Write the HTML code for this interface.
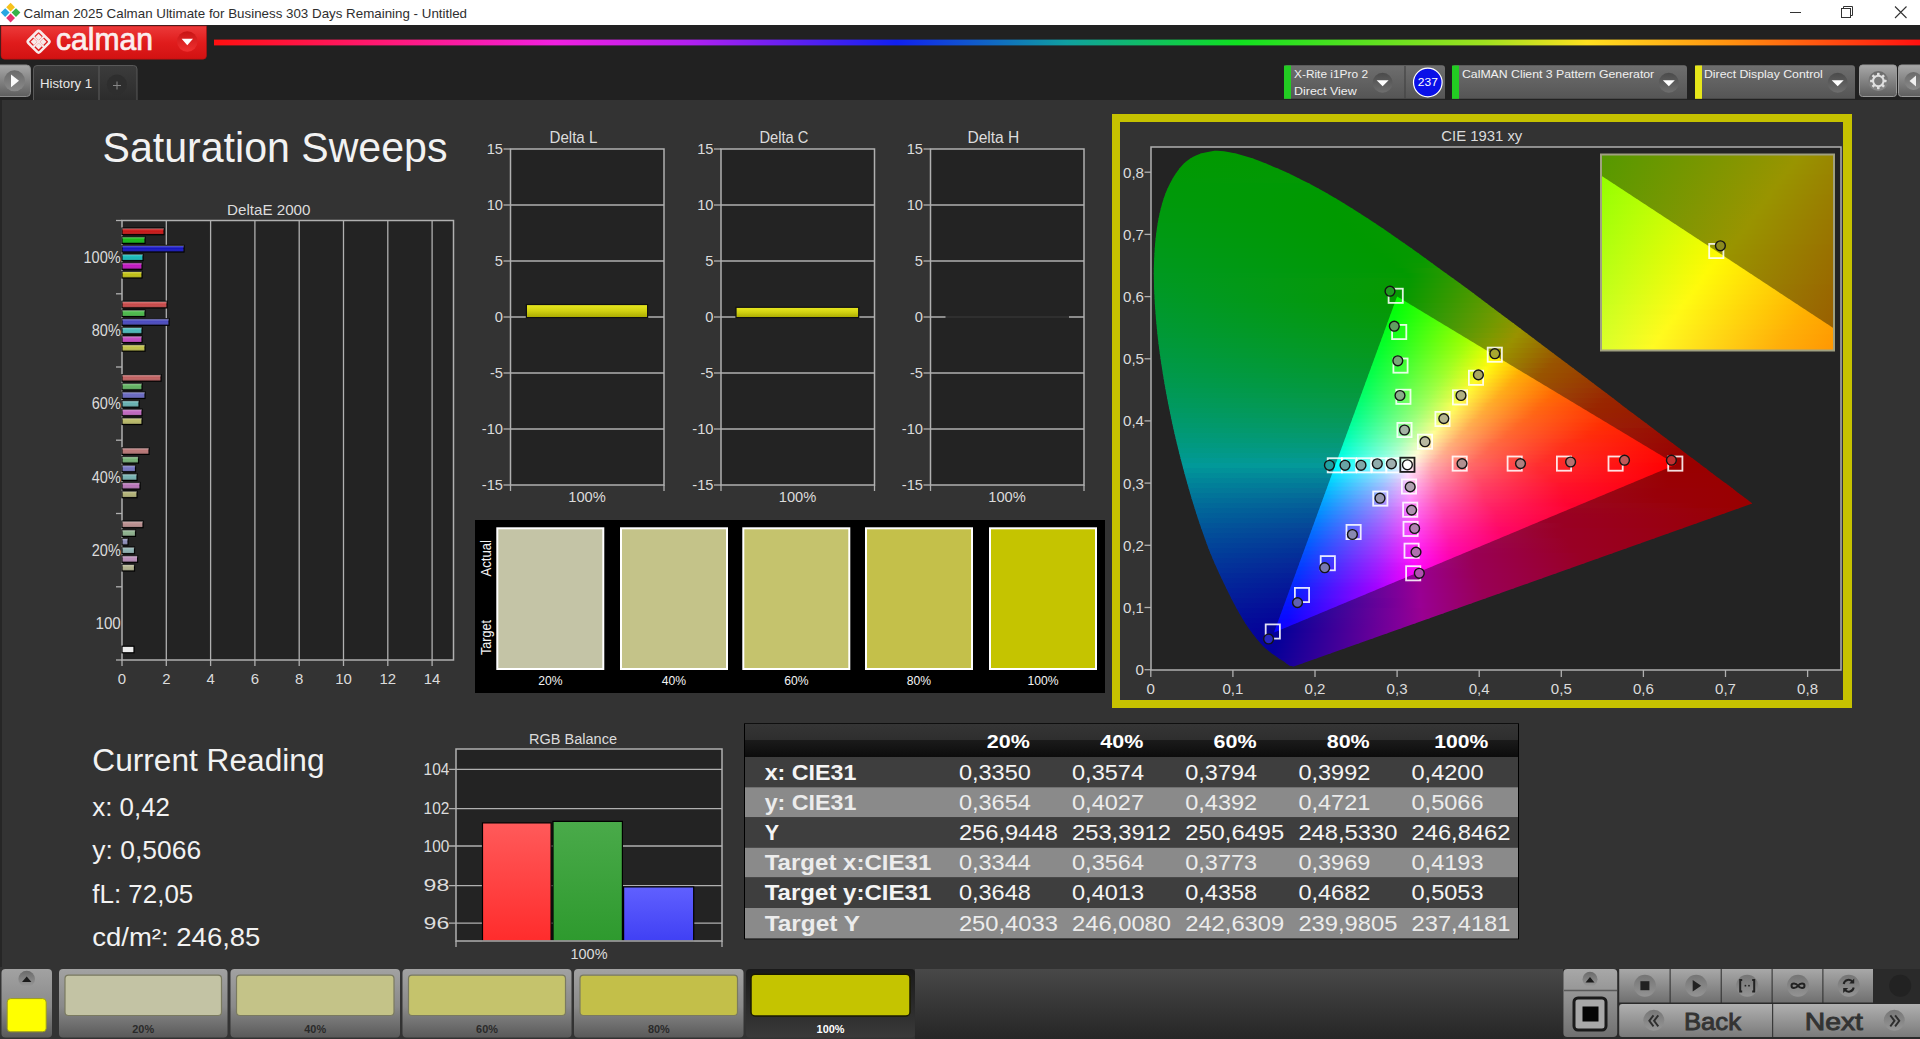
<!DOCTYPE html>
<html><head><meta charset="utf-8"><title>Calman</title>
<style>html,body{margin:0;padding:0;background:#333;overflow:hidden}svg{display:block}text{font-family:"Liberation Sans", sans-serif}</style>
</head><body>
<svg width="1920" height="1039" viewBox="0 0 1920 1039">
<defs><linearGradient id="gred" x1="0" y1="0" x2="0" y2="1"><stop offset="0" stop-color="#ec3a3a"/><stop offset="0.5" stop-color="#e01c1c"/><stop offset="1" stop-color="#d21212"/></linearGradient><linearGradient id="gdrop" x1="0" y1="0" x2="0" y2="1"><stop offset="0" stop-color="#c81414"/><stop offset="1" stop-color="#f03030"/></linearGradient><linearGradient id="grain" x1="0" y1="0" x2="1" y2="0"><stop offset="0" stop-color="#ff1010"/><stop offset="0.11" stop-color="#ff1a80"/><stop offset="0.2" stop-color="#f020e0"/><stop offset="0.28" stop-color="#b020f0"/><stop offset="0.4" stop-color="#1020f0"/><stop offset="0.5" stop-color="#10a0a0"/><stop offset="0.6" stop-color="#10e020"/><stop offset="0.745" stop-color="#a0e020"/><stop offset="0.805" stop-color="#ffe020"/><stop offset="0.89" stop-color="#ff9010"/><stop offset="1" stop-color="#ff1010"/></linearGradient><linearGradient id="gbtn" x1="0" y1="0" x2="0" y2="1"><stop offset="0" stop-color="#a8a8a8"/><stop offset="1" stop-color="#5e5e5e"/></linearGradient><linearGradient id="gbtnc" x1="0" y1="0" x2="0" y2="1"><stop offset="0" stop-color="#6a6a6a"/><stop offset="1" stop-color="#8a8a8a"/></linearGradient><linearGradient id="gtab" x1="0" y1="0" x2="0" y2="1"><stop offset="0" stop-color="#3c3c3c"/><stop offset="1" stop-color="#2c2c2c"/></linearGradient><linearGradient id="gwid" x1="0" y1="0" x2="0" y2="1"><stop offset="0" stop-color="#6e6e6e"/><stop offset="1" stop-color="#555555"/></linearGradient><linearGradient id="gdd" x1="0" y1="0" x2="0" y2="1"><stop offset="0" stop-color="#4a4a4a"/><stop offset="1" stop-color="#6e6e6e"/></linearGradient><linearGradient id="gbarhl" x1="0" y1="0" x2="0" y2="1"><stop offset="0" stop-color="#ffffff"/><stop offset="0.35" stop-color="#ffffff"/><stop offset="0.55" stop-color="#000000"/><stop offset="1" stop-color="#000000"/></linearGradient><linearGradient id="gbh" x1="0" y1="0" x2="0" y2="1"><stop offset="0" stop-color="#fff" stop-opacity="0.35"/><stop offset="0.45" stop-color="#fff" stop-opacity="0"/><stop offset="1" stop-color="#000" stop-opacity="0.25"/></linearGradient><linearGradient id="gybar" x1="0" y1="0" x2="0" y2="1"><stop offset="0" stop-color="#e8e820"/><stop offset="0.5" stop-color="#d0d010"/><stop offset="1" stop-color="#a8a800"/></linearGradient><clipPath id="locus"><path d="M1293.7 666.6 C1293.2 666.5 1291.6 666.5 1290.6 666.1 C1289.6 665.7 1288.6 664.9 1287.8 664.4 C1287.0 663.8 1286.6 663.5 1285.8 662.9 C1285.0 662.4 1284.1 661.8 1283.1 661.1 C1282.0 660.4 1280.8 659.6 1279.4 658.7 C1278.0 657.8 1276.5 656.8 1274.8 655.6 C1273.0 654.3 1271.1 653.0 1269.0 651.2 C1266.9 649.4 1264.8 647.8 1262.0 644.9 C1259.3 642.0 1256.2 638.6 1252.7 633.8 C1249.1 628.9 1245.3 623.5 1240.8 615.7 C1236.3 608.0 1231.4 599.0 1225.8 587.2 C1220.2 575.4 1213.5 561.7 1207.2 544.9 C1200.9 528.1 1194.3 508.2 1188.1 486.2 C1181.9 464.3 1175.2 438.3 1170.1 413.0 C1165.0 387.8 1160.2 360.0 1157.5 334.9 C1154.9 309.8 1153.2 284.4 1154.0 262.5 C1154.8 240.5 1157.4 219.4 1162.2 203.2 C1167.0 186.9 1174.5 173.4 1182.7 164.7 C1191.0 156.1 1201.5 152.6 1211.8 151.2 C1222.1 149.7 1233.6 153.0 1244.6 155.9 C1255.6 158.8 1267.0 163.9 1277.8 168.5 C1288.6 173.1 1298.9 178.3 1309.2 183.6 C1319.4 189.0 1329.3 194.7 1339.3 200.6 C1349.3 206.5 1359.2 212.8 1369.0 219.3 C1378.9 225.7 1388.6 232.4 1398.4 239.2 C1408.2 245.9 1417.9 252.9 1427.7 259.9 C1437.5 267.0 1447.3 274.1 1457.1 281.3 C1466.9 288.5 1476.6 295.8 1486.3 303.0 C1496.1 310.3 1505.8 317.5 1515.4 324.7 C1525.0 331.9 1534.5 339.1 1543.9 346.2 C1553.3 353.2 1562.5 360.3 1571.6 367.1 C1580.6 373.9 1589.5 380.6 1598.1 387.1 C1606.7 393.6 1615.1 399.9 1623.0 405.9 C1631.0 411.9 1638.7 417.8 1645.8 423.1 C1652.9 428.5 1659.4 433.4 1665.6 438.0 C1671.8 442.7 1677.7 447.2 1683.0 451.2 C1688.3 455.2 1693.1 458.7 1697.4 462.0 C1701.8 465.3 1705.6 468.2 1709.2 470.9 C1712.7 473.5 1715.7 475.9 1718.5 478.0 C1721.3 480.1 1723.7 481.9 1726.0 483.6 C1728.2 485.3 1730.2 486.7 1732.0 488.1 C1733.8 489.5 1735.5 490.7 1737.0 491.9 C1738.5 493.0 1739.9 494.1 1741.1 495.0 C1742.3 495.9 1743.4 496.7 1744.4 497.4 C1745.3 498.1 1745.9 498.6 1746.8 499.3 C1747.8 500.0 1749.2 501.1 1750.1 501.8 C1751.0 502.5 1752.0 503.2 1752.3 503.5 Z"/></clipPath><clipPath id="tri"><path d="M1676.2 464.5 L1397.1 296.6 L1274.0 632.4 Z"/></clipPath><linearGradient id="c1" gradientUnits="userSpaceOnUse" x1="1152" y1="0" x2="1752" y2="0"><stop offset="0.000" stop-color="#009900"/><stop offset="0.513" stop-color="#059900"/><stop offset="0.797" stop-color="#7f9900"/><stop offset="0.857" stop-color="#999200"/><stop offset="1.000" stop-color="#995d00"/></linearGradient><linearGradient id="c2" gradientUnits="userSpaceOnUse" x1="1152" y1="0" x2="1752" y2="0"><stop offset="0.000" stop-color="#009901"/><stop offset="0.510" stop-color="#059900"/><stop offset="0.790" stop-color="#7f9900"/><stop offset="0.850" stop-color="#999200"/><stop offset="1.000" stop-color="#995b00"/></linearGradient><linearGradient id="c3" gradientUnits="userSpaceOnUse" x1="1152" y1="0" x2="1752" y2="0"><stop offset="0.000" stop-color="#009902"/><stop offset="0.507" stop-color="#059900"/><stop offset="0.787" stop-color="#809900"/><stop offset="0.843" stop-color="#999200"/><stop offset="1.000" stop-color="#995800"/></linearGradient><linearGradient id="c4" gradientUnits="userSpaceOnUse" x1="1152" y1="0" x2="1752" y2="0"><stop offset="0.000" stop-color="#009903"/><stop offset="0.503" stop-color="#059900"/><stop offset="0.780" stop-color="#809900"/><stop offset="0.837" stop-color="#999200"/><stop offset="1.000" stop-color="#995600"/></linearGradient><linearGradient id="c5" gradientUnits="userSpaceOnUse" x1="1152" y1="0" x2="1752" y2="0"><stop offset="0.000" stop-color="#009904"/><stop offset="0.500" stop-color="#059900"/><stop offset="0.773" stop-color="#809900"/><stop offset="0.830" stop-color="#999200"/><stop offset="0.993" stop-color="#995600"/><stop offset="1.000" stop-color="#995400"/></linearGradient><linearGradient id="c6" gradientUnits="userSpaceOnUse" x1="1152" y1="0" x2="1752" y2="0"><stop offset="0.000" stop-color="#009905"/><stop offset="0.497" stop-color="#059900"/><stop offset="0.767" stop-color="#809900"/><stop offset="0.823" stop-color="#999200"/><stop offset="0.987" stop-color="#995500"/><stop offset="1.000" stop-color="#995200"/></linearGradient><linearGradient id="c7" gradientUnits="userSpaceOnUse" x1="1152" y1="0" x2="1752" y2="0"><stop offset="0.000" stop-color="#009907"/><stop offset="0.493" stop-color="#059900"/><stop offset="0.760" stop-color="#7f9900"/><stop offset="0.817" stop-color="#999200"/><stop offset="0.977" stop-color="#995600"/><stop offset="1.000" stop-color="#995000"/></linearGradient><linearGradient id="c8" gradientUnits="userSpaceOnUse" x1="1152" y1="0" x2="1752" y2="0"><stop offset="0.000" stop-color="#009908"/><stop offset="0.470" stop-color="#009900"/><stop offset="0.713" stop-color="#699900"/><stop offset="0.807" stop-color="#999400"/><stop offset="0.963" stop-color="#995700"/><stop offset="1.000" stop-color="#994e00"/></linearGradient><linearGradient id="c9" gradientUnits="userSpaceOnUse" x1="1152" y1="0" x2="1752" y2="0"><stop offset="0.000" stop-color="#009909"/><stop offset="0.363" stop-color="#009900"/><stop offset="0.490" stop-color="#069900"/><stop offset="0.750" stop-color="#819900"/><stop offset="0.803" stop-color="#999200"/><stop offset="0.960" stop-color="#995600"/><stop offset="1.000" stop-color="#994c00"/></linearGradient><linearGradient id="c10" gradientUnits="userSpaceOnUse" x1="1152" y1="0" x2="1752" y2="0"><stop offset="0.000" stop-color="#00990a"/><stop offset="0.323" stop-color="#009900"/><stop offset="0.487" stop-color="#069900"/><stop offset="0.743" stop-color="#809900"/><stop offset="0.797" stop-color="#999200"/><stop offset="0.953" stop-color="#995500"/><stop offset="1.000" stop-color="#994a00"/></linearGradient><linearGradient id="c11" gradientUnits="userSpaceOnUse" x1="1152" y1="0" x2="1752" y2="0"><stop offset="0.000" stop-color="#00990b"/><stop offset="0.307" stop-color="#009900"/><stop offset="0.483" stop-color="#069900"/><stop offset="0.737" stop-color="#809900"/><stop offset="0.790" stop-color="#999200"/><stop offset="0.943" stop-color="#995600"/><stop offset="1.000" stop-color="#994800"/></linearGradient><linearGradient id="c12" gradientUnits="userSpaceOnUse" x1="1152" y1="0" x2="1752" y2="0"><stop offset="0.000" stop-color="#00990c"/><stop offset="0.300" stop-color="#009900"/><stop offset="0.480" stop-color="#069900"/><stop offset="0.730" stop-color="#809900"/><stop offset="0.783" stop-color="#999200"/><stop offset="0.937" stop-color="#995500"/><stop offset="1.000" stop-color="#994600"/></linearGradient><linearGradient id="c13" gradientUnits="userSpaceOnUse" x1="1152" y1="0" x2="1752" y2="0"><stop offset="0.000" stop-color="#00990e"/><stop offset="0.303" stop-color="#009900"/><stop offset="0.477" stop-color="#069900"/><stop offset="0.727" stop-color="#819900"/><stop offset="0.777" stop-color="#999200"/><stop offset="0.927" stop-color="#995500"/><stop offset="1.000" stop-color="#994400"/></linearGradient><linearGradient id="c14" gradientUnits="userSpaceOnUse" x1="1152" y1="0" x2="1752" y2="0"><stop offset="0.000" stop-color="#00990f"/><stop offset="0.307" stop-color="#009900"/><stop offset="0.473" stop-color="#069900"/><stop offset="0.720" stop-color="#819900"/><stop offset="0.770" stop-color="#999200"/><stop offset="0.920" stop-color="#995500"/><stop offset="1.000" stop-color="#994200"/></linearGradient><linearGradient id="c15" gradientUnits="userSpaceOnUse" x1="1152" y1="0" x2="1752" y2="0"><stop offset="0.000" stop-color="#009910"/><stop offset="0.313" stop-color="#009900"/><stop offset="0.470" stop-color="#069900"/><stop offset="0.713" stop-color="#819900"/><stop offset="0.763" stop-color="#999100"/><stop offset="0.910" stop-color="#995500"/><stop offset="1.000" stop-color="#994000"/></linearGradient><linearGradient id="c16" gradientUnits="userSpaceOnUse" x1="1152" y1="0" x2="1752" y2="0"><stop offset="0.000" stop-color="#009912"/><stop offset="0.323" stop-color="#009900"/><stop offset="0.467" stop-color="#069900"/><stop offset="0.707" stop-color="#819900"/><stop offset="0.757" stop-color="#999100"/><stop offset="0.903" stop-color="#995500"/><stop offset="1.000" stop-color="#993e00"/></linearGradient><linearGradient id="c17" gradientUnits="userSpaceOnUse" x1="1152" y1="0" x2="1752" y2="0"><stop offset="0.000" stop-color="#009913"/><stop offset="0.330" stop-color="#009900"/><stop offset="0.463" stop-color="#069900"/><stop offset="0.700" stop-color="#809900"/><stop offset="0.750" stop-color="#999100"/><stop offset="0.893" stop-color="#995500"/><stop offset="1.000" stop-color="#993d00"/></linearGradient><linearGradient id="c18" gradientUnits="userSpaceOnUse" x1="1152" y1="0" x2="1752" y2="0"><stop offset="0.000" stop-color="#009914"/><stop offset="0.340" stop-color="#009900"/><stop offset="0.460" stop-color="#069900"/><stop offset="0.693" stop-color="#809900"/><stop offset="0.743" stop-color="#999100"/><stop offset="0.887" stop-color="#995500"/><stop offset="1.000" stop-color="#993b00"/></linearGradient><linearGradient id="c19" gradientUnits="userSpaceOnUse" x1="1152" y1="0" x2="1752" y2="0"><stop offset="0.000" stop-color="#009916"/><stop offset="0.350" stop-color="#009900"/><stop offset="0.457" stop-color="#069900"/><stop offset="0.687" stop-color="#809900"/><stop offset="0.737" stop-color="#999100"/><stop offset="0.877" stop-color="#995500"/><stop offset="1.000" stop-color="#993900"/></linearGradient><linearGradient id="c20" gradientUnits="userSpaceOnUse" x1="1152" y1="0" x2="1752" y2="0"><stop offset="0.000" stop-color="#009917"/><stop offset="0.360" stop-color="#009900"/><stop offset="0.453" stop-color="#069900"/><stop offset="0.680" stop-color="#7f9900"/><stop offset="0.730" stop-color="#999100"/><stop offset="0.870" stop-color="#995400"/><stop offset="1.000" stop-color="#993700"/></linearGradient><linearGradient id="c21" gradientUnits="userSpaceOnUse" x1="1152" y1="0" x2="1752" y2="0"><stop offset="0.000" stop-color="#009919"/><stop offset="0.370" stop-color="#009900"/><stop offset="0.453" stop-color="#079900"/><stop offset="0.677" stop-color="#819900"/><stop offset="0.723" stop-color="#999100"/><stop offset="0.860" stop-color="#995500"/><stop offset="1.000" stop-color="#993500"/></linearGradient><linearGradient id="c22" gradientUnits="userSpaceOnUse" x1="1152" y1="0" x2="1752" y2="0"><stop offset="0.000" stop-color="#00991a"/><stop offset="0.383" stop-color="#009900"/><stop offset="0.450" stop-color="#079900"/><stop offset="0.670" stop-color="#819900"/><stop offset="0.717" stop-color="#999100"/><stop offset="0.853" stop-color="#995400"/><stop offset="1.000" stop-color="#993400"/></linearGradient><linearGradient id="c23" gradientUnits="userSpaceOnUse" x1="1152" y1="0" x2="1752" y2="0"><stop offset="0.000" stop-color="#00991c"/><stop offset="0.393" stop-color="#009900"/><stop offset="0.450" stop-color="#099900"/><stop offset="0.667" stop-color="#839900"/><stop offset="0.710" stop-color="#999100"/><stop offset="0.843" stop-color="#995500"/><stop offset="1.000" stop-color="#993200"/></linearGradient><linearGradient id="c24" gradientUnits="userSpaceOnUse" x1="1152" y1="0" x2="1752" y2="0"><stop offset="0.000" stop-color="#00991d"/><stop offset="0.403" stop-color="#009900"/><stop offset="0.457" stop-color="#0e9900"/><stop offset="0.670" stop-color="#899900"/><stop offset="0.707" stop-color="#998e00"/><stop offset="0.843" stop-color="#995200"/><stop offset="1.000" stop-color="#993000"/></linearGradient><linearGradient id="c25" gradientUnits="userSpaceOnUse" x1="1152" y1="0" x2="1752" y2="0"><stop offset="0.000" stop-color="#00991f"/><stop offset="0.417" stop-color="#009900"/><stop offset="0.600" stop-color="#5f9900"/><stop offset="0.693" stop-color="#999300"/><stop offset="0.820" stop-color="#995700"/><stop offset="1.000" stop-color="#992f00"/></linearGradient><linearGradient id="c26" gradientUnits="userSpaceOnUse" x1="1152" y1="0" x2="1752" y2="0"><stop offset="0.000" stop-color="#009921"/><stop offset="0.427" stop-color="#029900"/><stop offset="0.640" stop-color="#7d9900"/><stop offset="0.687" stop-color="#999300"/><stop offset="0.813" stop-color="#995600"/><stop offset="1.000" stop-color="#992d00"/></linearGradient><linearGradient id="c27" gradientUnits="userSpaceOnUse" x1="1152" y1="0" x2="1752" y2="0"><stop offset="0.000" stop-color="#009922"/><stop offset="0.430" stop-color="#069900"/><stop offset="0.637" stop-color="#7f9900"/><stop offset="0.680" stop-color="#999300"/><stop offset="0.803" stop-color="#995600"/><stop offset="1.000" stop-color="#992b00"/></linearGradient><linearGradient id="c28" gradientUnits="userSpaceOnUse" x1="1152" y1="0" x2="1752" y2="0"><stop offset="0.000" stop-color="#009924"/><stop offset="0.427" stop-color="#069900"/><stop offset="0.630" stop-color="#7f9900"/><stop offset="0.673" stop-color="#999300"/><stop offset="0.797" stop-color="#995600"/><stop offset="1.000" stop-color="#992a00"/></linearGradient><linearGradient id="c29" gradientUnits="userSpaceOnUse" x1="1152" y1="0" x2="1752" y2="0"><stop offset="0.000" stop-color="#009926"/><stop offset="0.423" stop-color="#069900"/><stop offset="0.623" stop-color="#7e9900"/><stop offset="0.667" stop-color="#999300"/><stop offset="0.787" stop-color="#995600"/><stop offset="1.000" stop-color="#992800"/></linearGradient><linearGradient id="c30" gradientUnits="userSpaceOnUse" x1="1152" y1="0" x2="1752" y2="0"><stop offset="0.000" stop-color="#009928"/><stop offset="0.420" stop-color="#059900"/><stop offset="0.620" stop-color="#819900"/><stop offset="0.660" stop-color="#999300"/><stop offset="0.780" stop-color="#995600"/><stop offset="1.000" stop-color="#992600"/></linearGradient><linearGradient id="c31" gradientUnits="userSpaceOnUse" x1="1152" y1="0" x2="1752" y2="0"><stop offset="0.000" stop-color="#00992a"/><stop offset="0.417" stop-color="#059900"/><stop offset="0.613" stop-color="#809900"/><stop offset="0.653" stop-color="#999200"/><stop offset="0.770" stop-color="#995600"/><stop offset="0.997" stop-color="#992500"/><stop offset="1.000" stop-color="#992500"/></linearGradient><linearGradient id="c32" gradientUnits="userSpaceOnUse" x1="1152" y1="0" x2="1752" y2="0"><stop offset="0.000" stop-color="#00992c"/><stop offset="0.413" stop-color="#059903"/><stop offset="0.607" stop-color="#809900"/><stop offset="0.647" stop-color="#999200"/><stop offset="0.763" stop-color="#995600"/><stop offset="0.990" stop-color="#992500"/><stop offset="1.000" stop-color="#992300"/></linearGradient><linearGradient id="c33" gradientUnits="userSpaceOnUse" x1="1152" y1="0" x2="1752" y2="0"><stop offset="0.000" stop-color="#00992e"/><stop offset="0.410" stop-color="#059905"/><stop offset="0.600" stop-color="#7f9900"/><stop offset="0.640" stop-color="#999200"/><stop offset="0.753" stop-color="#995600"/><stop offset="0.973" stop-color="#992500"/><stop offset="1.000" stop-color="#992200"/></linearGradient><linearGradient id="c34" gradientUnits="userSpaceOnUse" x1="1152" y1="0" x2="1752" y2="0"><stop offset="0.000" stop-color="#009930"/><stop offset="0.407" stop-color="#059908"/><stop offset="0.593" stop-color="#7f9900"/><stop offset="0.633" stop-color="#999200"/><stop offset="0.747" stop-color="#995500"/><stop offset="0.967" stop-color="#992400"/><stop offset="1.000" stop-color="#992000"/></linearGradient><linearGradient id="c35" gradientUnits="userSpaceOnUse" x1="1152" y1="0" x2="1752" y2="0"><stop offset="0.000" stop-color="#009932"/><stop offset="0.403" stop-color="#05990a"/><stop offset="0.577" stop-color="#779900"/><stop offset="0.627" stop-color="#999200"/><stop offset="0.737" stop-color="#995600"/><stop offset="0.950" stop-color="#992500"/><stop offset="1.000" stop-color="#991f00"/></linearGradient><linearGradient id="c36" gradientUnits="userSpaceOnUse" x1="1152" y1="0" x2="1752" y2="0"><stop offset="0.000" stop-color="#009934"/><stop offset="0.400" stop-color="#05990d"/><stop offset="0.563" stop-color="#719900"/><stop offset="0.620" stop-color="#999200"/><stop offset="0.730" stop-color="#995500"/><stop offset="0.943" stop-color="#992400"/><stop offset="1.000" stop-color="#991d00"/></linearGradient><linearGradient id="c37" gradientUnits="userSpaceOnUse" x1="1152" y1="0" x2="1752" y2="0"><stop offset="0.000" stop-color="#009936"/><stop offset="0.397" stop-color="#059910"/><stop offset="0.567" stop-color="#789900"/><stop offset="0.613" stop-color="#999200"/><stop offset="0.720" stop-color="#995600"/><stop offset="0.930" stop-color="#992500"/><stop offset="1.000" stop-color="#991c00"/></linearGradient><linearGradient id="c38" gradientUnits="userSpaceOnUse" x1="1152" y1="0" x2="1752" y2="0"><stop offset="0.000" stop-color="#009938"/><stop offset="0.393" stop-color="#059913"/><stop offset="0.567" stop-color="#7d9900"/><stop offset="0.607" stop-color="#999200"/><stop offset="0.713" stop-color="#995500"/><stop offset="0.920" stop-color="#992400"/><stop offset="1.000" stop-color="#991a00"/></linearGradient><linearGradient id="c39" gradientUnits="userSpaceOnUse" x1="1152" y1="0" x2="1752" y2="0"><stop offset="0.000" stop-color="#00993b"/><stop offset="0.390" stop-color="#059916"/><stop offset="0.563" stop-color="#809900"/><stop offset="0.600" stop-color="#999200"/><stop offset="0.703" stop-color="#995600"/><stop offset="0.907" stop-color="#992400"/><stop offset="1.000" stop-color="#991900"/></linearGradient><linearGradient id="c40" gradientUnits="userSpaceOnUse" x1="1152" y1="0" x2="1752" y2="0"><stop offset="0.000" stop-color="#00993d"/><stop offset="0.387" stop-color="#059919"/><stop offset="0.557" stop-color="#7f9900"/><stop offset="0.593" stop-color="#999200"/><stop offset="0.697" stop-color="#995500"/><stop offset="0.897" stop-color="#992400"/><stop offset="1.000" stop-color="#991700"/></linearGradient><linearGradient id="c41" gradientUnits="userSpaceOnUse" x1="1152" y1="0" x2="1752" y2="0"><stop offset="0.000" stop-color="#009940"/><stop offset="0.383" stop-color="#05991c"/><stop offset="0.550" stop-color="#7f9902"/><stop offset="0.587" stop-color="#999100"/><stop offset="0.687" stop-color="#995500"/><stop offset="0.883" stop-color="#992400"/><stop offset="1.000" stop-color="#991600"/></linearGradient><linearGradient id="c42" gradientUnits="userSpaceOnUse" x1="1152" y1="0" x2="1752" y2="0"><stop offset="0.000" stop-color="#009942"/><stop offset="0.380" stop-color="#05991f"/><stop offset="0.543" stop-color="#7e9906"/><stop offset="0.580" stop-color="#999100"/><stop offset="0.680" stop-color="#995500"/><stop offset="0.873" stop-color="#992400"/><stop offset="1.000" stop-color="#991400"/></linearGradient><linearGradient id="c43" gradientUnits="userSpaceOnUse" x1="1152" y1="0" x2="1752" y2="0"><stop offset="0.000" stop-color="#009945"/><stop offset="0.377" stop-color="#049923"/><stop offset="0.537" stop-color="#7e990a"/><stop offset="0.573" stop-color="#999102"/><stop offset="0.670" stop-color="#995500"/><stop offset="0.860" stop-color="#992400"/><stop offset="1.000" stop-color="#991300"/></linearGradient><linearGradient id="c44" gradientUnits="userSpaceOnUse" x1="1152" y1="0" x2="1752" y2="0"><stop offset="0.000" stop-color="#009948"/><stop offset="0.373" stop-color="#049926"/><stop offset="0.530" stop-color="#7d990e"/><stop offset="0.567" stop-color="#999107"/><stop offset="0.663" stop-color="#995400"/><stop offset="0.850" stop-color="#992400"/><stop offset="1.000" stop-color="#991200"/></linearGradient><linearGradient id="c45" gradientUnits="userSpaceOnUse" x1="1152" y1="0" x2="1752" y2="0"><stop offset="0.000" stop-color="#00994a"/><stop offset="0.370" stop-color="#04992a"/><stop offset="0.523" stop-color="#7d9913"/><stop offset="0.560" stop-color="#99910b"/><stop offset="0.653" stop-color="#995500"/><stop offset="0.837" stop-color="#992400"/><stop offset="1.000" stop-color="#991000"/></linearGradient><linearGradient id="c46" gradientUnits="userSpaceOnUse" x1="1152" y1="0" x2="1752" y2="0"><stop offset="0.000" stop-color="#00994d"/><stop offset="0.367" stop-color="#04992e"/><stop offset="0.517" stop-color="#7c9918"/><stop offset="0.553" stop-color="#999110"/><stop offset="0.647" stop-color="#995400"/><stop offset="0.827" stop-color="#992400"/><stop offset="1.000" stop-color="#990f00"/></linearGradient><linearGradient id="c47" gradientUnits="userSpaceOnUse" x1="1152" y1="0" x2="1752" y2="0"><stop offset="0.000" stop-color="#009950"/><stop offset="0.363" stop-color="#049932"/><stop offset="0.513" stop-color="#7f991c"/><stop offset="0.547" stop-color="#999114"/><stop offset="0.637" stop-color="#995501"/><stop offset="0.813" stop-color="#992400"/><stop offset="1.000" stop-color="#990d00"/></linearGradient><linearGradient id="c48" gradientUnits="userSpaceOnUse" x1="1152" y1="0" x2="1752" y2="0"><stop offset="0.000" stop-color="#009953"/><stop offset="0.360" stop-color="#049936"/><stop offset="0.507" stop-color="#7e9921"/><stop offset="0.540" stop-color="#999019"/><stop offset="0.630" stop-color="#995404"/><stop offset="0.803" stop-color="#992400"/><stop offset="1.000" stop-color="#990c00"/></linearGradient><linearGradient id="c49" gradientUnits="userSpaceOnUse" x1="1152" y1="0" x2="1752" y2="0"><stop offset="0.000" stop-color="#009957"/><stop offset="0.357" stop-color="#04993a"/><stop offset="0.500" stop-color="#7e9926"/><stop offset="0.530" stop-color="#999420"/><stop offset="0.613" stop-color="#995809"/><stop offset="0.777" stop-color="#992600"/><stop offset="1.000" stop-color="#990b00"/></linearGradient><linearGradient id="c50" gradientUnits="userSpaceOnUse" x1="1152" y1="0" x2="1752" y2="0"><stop offset="0.000" stop-color="#00995a"/><stop offset="0.357" stop-color="#06993e"/><stop offset="0.497" stop-color="#81992b"/><stop offset="0.527" stop-color="#999024"/><stop offset="0.613" stop-color="#99540b"/><stop offset="0.770" stop-color="#992500"/><stop offset="1.000" stop-color="#990900"/></linearGradient><linearGradient id="c51" gradientUnits="userSpaceOnUse" x1="1152" y1="0" x2="1752" y2="0"><stop offset="0.000" stop-color="#00995e"/><stop offset="0.353" stop-color="#069943"/><stop offset="0.490" stop-color="#809931"/><stop offset="0.517" stop-color="#99942b"/><stop offset="0.597" stop-color="#995810"/><stop offset="0.753" stop-color="#992600"/><stop offset="1.000" stop-color="#990800"/></linearGradient><linearGradient id="c52" gradientUnits="userSpaceOnUse" x1="1152" y1="0" x2="1752" y2="0"><stop offset="0.000" stop-color="#009961"/><stop offset="0.350" stop-color="#069948"/><stop offset="0.483" stop-color="#809937"/><stop offset="0.510" stop-color="#999331"/><stop offset="0.590" stop-color="#995714"/><stop offset="0.743" stop-color="#992600"/><stop offset="1.000" stop-color="#990700"/></linearGradient><linearGradient id="c53" gradientUnits="userSpaceOnUse" x1="1152" y1="0" x2="1752" y2="0"><stop offset="0.000" stop-color="#009965"/><stop offset="0.347" stop-color="#06994d"/><stop offset="0.477" stop-color="#7f993d"/><stop offset="0.503" stop-color="#999337"/><stop offset="0.580" stop-color="#995719"/><stop offset="0.730" stop-color="#992600"/><stop offset="1.000" stop-color="#990600"/></linearGradient><linearGradient id="c54" gradientUnits="userSpaceOnUse" x1="1152" y1="0" x2="1752" y2="0"><stop offset="0.000" stop-color="#009969"/><stop offset="0.343" stop-color="#069952"/><stop offset="0.470" stop-color="#7f9944"/><stop offset="0.497" stop-color="#99933d"/><stop offset="0.573" stop-color="#99561c"/><stop offset="0.720" stop-color="#992602"/><stop offset="1.000" stop-color="#990400"/></linearGradient><linearGradient id="c55" gradientUnits="userSpaceOnUse" x1="1152" y1="0" x2="1752" y2="0"><stop offset="0.000" stop-color="#00996d"/><stop offset="0.340" stop-color="#069958"/><stop offset="0.463" stop-color="#7e994b"/><stop offset="0.490" stop-color="#999344"/><stop offset="0.563" stop-color="#995722"/><stop offset="0.707" stop-color="#992605"/><stop offset="1.000" stop-color="#990300"/></linearGradient><linearGradient id="c56" gradientUnits="userSpaceOnUse" x1="1152" y1="0" x2="1752" y2="0"><stop offset="0.000" stop-color="#009971"/><stop offset="0.337" stop-color="#06995e"/><stop offset="0.457" stop-color="#7d9952"/><stop offset="0.483" stop-color="#99934b"/><stop offset="0.557" stop-color="#995626"/><stop offset="0.697" stop-color="#992608"/><stop offset="1.000" stop-color="#990200"/></linearGradient><linearGradient id="c57" gradientUnits="userSpaceOnUse" x1="1152" y1="0" x2="1752" y2="0"><stop offset="0.000" stop-color="#009975"/><stop offset="0.333" stop-color="#069964"/><stop offset="0.450" stop-color="#7d9959"/><stop offset="0.477" stop-color="#999353"/><stop offset="0.547" stop-color="#99572b"/><stop offset="0.683" stop-color="#99260b"/><stop offset="0.893" stop-color="#990800"/><stop offset="1.000" stop-color="#990100"/></linearGradient><linearGradient id="c58" gradientUnits="userSpaceOnUse" x1="1152" y1="0" x2="1752" y2="0"><stop offset="0.000" stop-color="#00997a"/><stop offset="0.330" stop-color="#06996b"/><stop offset="0.447" stop-color="#809961"/><stop offset="0.470" stop-color="#99935b"/><stop offset="0.540" stop-color="#995630"/><stop offset="0.677" stop-color="#99250e"/><stop offset="0.883" stop-color="#990800"/><stop offset="1.000" stop-color="#990000"/></linearGradient><linearGradient id="c59" gradientUnits="userSpaceOnUse" x1="1152" y1="0" x2="1752" y2="0"><stop offset="0.000" stop-color="#00997e"/><stop offset="0.327" stop-color="#059971"/><stop offset="0.440" stop-color="#809969"/><stop offset="0.463" stop-color="#999363"/><stop offset="0.530" stop-color="#995736"/><stop offset="0.660" stop-color="#992612"/><stop offset="0.880" stop-color="#990700"/><stop offset="1.000" stop-color="#990000"/></linearGradient><linearGradient id="c60" gradientUnits="userSpaceOnUse" x1="1152" y1="0" x2="1752" y2="0"><stop offset="0.000" stop-color="#009983"/><stop offset="0.323" stop-color="#059979"/><stop offset="0.433" stop-color="#7f9972"/><stop offset="0.457" stop-color="#99926b"/><stop offset="0.523" stop-color="#99563b"/><stop offset="0.653" stop-color="#992414"/><stop offset="0.890" stop-color="#990400"/><stop offset="1.000" stop-color="#990000"/></linearGradient><linearGradient id="c61" gradientUnits="userSpaceOnUse" x1="1152" y1="0" x2="1752" y2="0"><stop offset="0.000" stop-color="#009988"/><stop offset="0.320" stop-color="#059980"/><stop offset="0.427" stop-color="#7e997b"/><stop offset="0.450" stop-color="#999274"/><stop offset="0.513" stop-color="#995742"/><stop offset="0.637" stop-color="#992619"/><stop offset="0.887" stop-color="#990300"/><stop offset="1.000" stop-color="#990000"/></linearGradient><linearGradient id="c62" gradientUnits="userSpaceOnUse" x1="1152" y1="0" x2="1752" y2="0"><stop offset="0.000" stop-color="#00998d"/><stop offset="0.317" stop-color="#059988"/><stop offset="0.420" stop-color="#7e9985"/><stop offset="0.443" stop-color="#99927e"/><stop offset="0.507" stop-color="#995548"/><stop offset="0.630" stop-color="#99241c"/><stop offset="0.890" stop-color="#990100"/><stop offset="1.000" stop-color="#990000"/></linearGradient><linearGradient id="c63" gradientUnits="userSpaceOnUse" x1="1152" y1="0" x2="1752" y2="0"><stop offset="0.000" stop-color="#009993"/><stop offset="0.313" stop-color="#059991"/><stop offset="0.413" stop-color="#7d998f"/><stop offset="0.437" stop-color="#999288"/><stop offset="0.497" stop-color="#995650"/><stop offset="0.613" stop-color="#992522"/><stop offset="0.880" stop-color="#990100"/><stop offset="1.000" stop-color="#990000"/></linearGradient><linearGradient id="c64" gradientUnits="userSpaceOnUse" x1="1152" y1="0" x2="1752" y2="0"><stop offset="0.000" stop-color="#009999"/><stop offset="0.310" stop-color="#059999"/><stop offset="0.410" stop-color="#809899"/><stop offset="0.430" stop-color="#999293"/><stop offset="0.490" stop-color="#995556"/><stop offset="0.607" stop-color="#992425"/><stop offset="0.873" stop-color="#990000"/><stop offset="1.000" stop-color="#990000"/></linearGradient><linearGradient id="c65" gradientUnits="userSpaceOnUse" x1="1152" y1="0" x2="1752" y2="0"><stop offset="0.000" stop-color="#009399"/><stop offset="0.307" stop-color="#049099"/><stop offset="0.407" stop-color="#7b8d99"/><stop offset="0.430" stop-color="#998894"/><stop offset="0.490" stop-color="#994f57"/><stop offset="0.607" stop-color="#992126"/><stop offset="0.870" stop-color="#990001"/><stop offset="1.000" stop-color="#990000"/></linearGradient><linearGradient id="c66" gradientUnits="userSpaceOnUse" x1="1152" y1="0" x2="1752" y2="0"><stop offset="0.000" stop-color="#008e99"/><stop offset="0.303" stop-color="#048799"/><stop offset="0.407" stop-color="#7b8399"/><stop offset="0.430" stop-color="#997e95"/><stop offset="0.490" stop-color="#994a59"/><stop offset="0.607" stop-color="#991e28"/><stop offset="0.860" stop-color="#990003"/><stop offset="1.000" stop-color="#990000"/></linearGradient><linearGradient id="c67" gradientUnits="userSpaceOnUse" x1="1152" y1="0" x2="1752" y2="0"><stop offset="0.000" stop-color="#008899"/><stop offset="0.300" stop-color="#047f99"/><stop offset="0.407" stop-color="#7c7a99"/><stop offset="0.430" stop-color="#997595"/><stop offset="0.493" stop-color="#994258"/><stop offset="0.613" stop-color="#991a27"/><stop offset="0.860" stop-color="#990004"/><stop offset="1.000" stop-color="#990000"/></linearGradient><linearGradient id="c68" gradientUnits="userSpaceOnUse" x1="1152" y1="0" x2="1752" y2="0"><stop offset="0.000" stop-color="#008399"/><stop offset="0.297" stop-color="#037899"/><stop offset="0.407" stop-color="#7c7199"/><stop offset="0.433" stop-color="#996992"/><stop offset="0.500" stop-color="#993a56"/><stop offset="0.630" stop-color="#991425"/><stop offset="0.860" stop-color="#990005"/><stop offset="1.000" stop-color="#990000"/></linearGradient><linearGradient id="c69" gradientUnits="userSpaceOnUse" x1="1152" y1="0" x2="1752" y2="0"><stop offset="0.000" stop-color="#007e99"/><stop offset="0.297" stop-color="#067199"/><stop offset="0.410" stop-color="#806899"/><stop offset="0.433" stop-color="#996192"/><stop offset="0.500" stop-color="#993557"/><stop offset="0.630" stop-color="#991126"/><stop offset="0.843" stop-color="#990008"/><stop offset="1.000" stop-color="#990000"/></linearGradient><linearGradient id="c70" gradientUnits="userSpaceOnUse" x1="1152" y1="0" x2="1752" y2="0"><stop offset="0.000" stop-color="#007999"/><stop offset="0.293" stop-color="#056a99"/><stop offset="0.410" stop-color="#805f99"/><stop offset="0.433" stop-color="#995993"/><stop offset="0.503" stop-color="#992f56"/><stop offset="0.637" stop-color="#990d26"/><stop offset="0.840" stop-color="#990009"/><stop offset="1.000" stop-color="#990000"/></linearGradient><linearGradient id="c71" gradientUnits="userSpaceOnUse" x1="1152" y1="0" x2="1752" y2="0"><stop offset="0.000" stop-color="#007499"/><stop offset="0.290" stop-color="#056399"/><stop offset="0.410" stop-color="#805899"/><stop offset="0.433" stop-color="#995294"/><stop offset="0.503" stop-color="#992b58"/><stop offset="0.640" stop-color="#990a26"/><stop offset="0.850" stop-color="#990009"/><stop offset="1.000" stop-color="#990000"/></linearGradient><linearGradient id="c72" gradientUnits="userSpaceOnUse" x1="1152" y1="0" x2="1752" y2="0"><stop offset="0.000" stop-color="#006f99"/><stop offset="0.287" stop-color="#055d99"/><stop offset="0.410" stop-color="#805099"/><stop offset="0.433" stop-color="#994b95"/><stop offset="0.503" stop-color="#992659"/><stop offset="0.640" stop-color="#990828"/><stop offset="0.913" stop-color="#990005"/><stop offset="1.000" stop-color="#990000"/></linearGradient><linearGradient id="c73" gradientUnits="userSpaceOnUse" x1="1152" y1="0" x2="1752" y2="0"><stop offset="0.000" stop-color="#006a99"/><stop offset="0.283" stop-color="#045799"/><stop offset="0.410" stop-color="#804999"/><stop offset="0.437" stop-color="#994292"/><stop offset="0.513" stop-color="#991f55"/><stop offset="0.663" stop-color="#990324"/><stop offset="1.000" stop-color="#990000"/></linearGradient><linearGradient id="c74" gradientUnits="userSpaceOnUse" x1="1152" y1="0" x2="1752" y2="0"><stop offset="0.000" stop-color="#006699"/><stop offset="0.280" stop-color="#045299"/><stop offset="0.407" stop-color="#7c4399"/><stop offset="0.437" stop-color="#993c92"/><stop offset="0.513" stop-color="#991b56"/><stop offset="0.663" stop-color="#990125"/><stop offset="1.000" stop-color="#990001"/></linearGradient><linearGradient id="c75" gradientUnits="userSpaceOnUse" x1="1152" y1="0" x2="1752" y2="0"><stop offset="0.000" stop-color="#006299"/><stop offset="0.277" stop-color="#044d99"/><stop offset="0.407" stop-color="#7c3c99"/><stop offset="0.437" stop-color="#993593"/><stop offset="0.513" stop-color="#991757"/><stop offset="0.663" stop-color="#990026"/><stop offset="1.000" stop-color="#990002"/></linearGradient><linearGradient id="c76" gradientUnits="userSpaceOnUse" x1="1152" y1="0" x2="1752" y2="0"><stop offset="0.000" stop-color="#005d99"/><stop offset="0.277" stop-color="#064799"/><stop offset="0.410" stop-color="#803699"/><stop offset="0.440" stop-color="#992e90"/><stop offset="0.523" stop-color="#991154"/><stop offset="0.687" stop-color="#990023"/><stop offset="1.000" stop-color="#990002"/></linearGradient><linearGradient id="c77" gradientUnits="userSpaceOnUse" x1="1152" y1="0" x2="1752" y2="0"><stop offset="0.000" stop-color="#005999"/><stop offset="0.273" stop-color="#064299"/><stop offset="0.410" stop-color="#803099"/><stop offset="0.440" stop-color="#992891"/><stop offset="0.523" stop-color="#990e55"/><stop offset="0.673" stop-color="#990027"/><stop offset="1.000" stop-color="#990003"/></linearGradient><linearGradient id="c78" gradientUnits="userSpaceOnUse" x1="1152" y1="0" x2="1752" y2="0"><stop offset="0.000" stop-color="#005599"/><stop offset="0.270" stop-color="#053e99"/><stop offset="0.410" stop-color="#802a99"/><stop offset="0.440" stop-color="#992392"/><stop offset="0.523" stop-color="#990b56"/><stop offset="0.677" stop-color="#990027"/><stop offset="1.000" stop-color="#990004"/></linearGradient><linearGradient id="c79" gradientUnits="userSpaceOnUse" x1="1152" y1="0" x2="1752" y2="0"><stop offset="0.000" stop-color="#005199"/><stop offset="0.267" stop-color="#053999"/><stop offset="0.410" stop-color="#802599"/><stop offset="0.440" stop-color="#991e92"/><stop offset="0.527" stop-color="#990756"/><stop offset="0.693" stop-color="#990025"/><stop offset="1.000" stop-color="#990005"/></linearGradient><linearGradient id="c80" gradientUnits="userSpaceOnUse" x1="1152" y1="0" x2="1752" y2="0"><stop offset="0.000" stop-color="#004d99"/><stop offset="0.263" stop-color="#053599"/><stop offset="0.410" stop-color="#801f99"/><stop offset="0.440" stop-color="#991993"/><stop offset="0.527" stop-color="#990457"/><stop offset="0.697" stop-color="#990025"/><stop offset="1.000" stop-color="#990005"/></linearGradient><linearGradient id="c81" gradientUnits="userSpaceOnUse" x1="1152" y1="0" x2="1752" y2="0"><stop offset="0.000" stop-color="#004a99"/><stop offset="0.260" stop-color="#043199"/><stop offset="0.410" stop-color="#801a99"/><stop offset="0.440" stop-color="#991494"/><stop offset="0.527" stop-color="#990158"/><stop offset="0.697" stop-color="#990026"/><stop offset="1.000" stop-color="#990006"/></linearGradient><linearGradient id="c82" gradientUnits="userSpaceOnUse" x1="1152" y1="0" x2="1752" y2="0"><stop offset="0.000" stop-color="#004699"/><stop offset="0.257" stop-color="#042d99"/><stop offset="0.410" stop-color="#7f1699"/><stop offset="0.443" stop-color="#990e91"/><stop offset="0.537" stop-color="#990054"/><stop offset="0.717" stop-color="#990024"/><stop offset="1.000" stop-color="#990007"/></linearGradient><linearGradient id="c83" gradientUnits="userSpaceOnUse" x1="1152" y1="0" x2="1752" y2="0"><stop offset="0.000" stop-color="#004299"/><stop offset="0.257" stop-color="#062999"/><stop offset="0.410" stop-color="#7f1199"/><stop offset="0.443" stop-color="#990a91"/><stop offset="0.537" stop-color="#990055"/><stop offset="0.720" stop-color="#990024"/><stop offset="1.000" stop-color="#990008"/></linearGradient><linearGradient id="c84" gradientUnits="userSpaceOnUse" x1="1152" y1="0" x2="1752" y2="0"><stop offset="0.000" stop-color="#003f99"/><stop offset="0.253" stop-color="#062599"/><stop offset="0.410" stop-color="#7f0d99"/><stop offset="0.443" stop-color="#990692"/><stop offset="0.537" stop-color="#990056"/><stop offset="0.720" stop-color="#990025"/><stop offset="1.000" stop-color="#990008"/></linearGradient><linearGradient id="c85" gradientUnits="userSpaceOnUse" x1="1152" y1="0" x2="1752" y2="0"><stop offset="0.000" stop-color="#003c99"/><stop offset="0.250" stop-color="#062299"/><stop offset="0.410" stop-color="#7f0899"/><stop offset="0.443" stop-color="#990193"/><stop offset="0.540" stop-color="#990056"/><stop offset="0.727" stop-color="#990025"/><stop offset="1.000" stop-color="#990009"/></linearGradient><linearGradient id="c86" gradientUnits="userSpaceOnUse" x1="1152" y1="0" x2="1752" y2="0"><stop offset="0.000" stop-color="#003899"/><stop offset="0.247" stop-color="#051e99"/><stop offset="0.410" stop-color="#7f0499"/><stop offset="0.443" stop-color="#990093"/><stop offset="0.540" stop-color="#990057"/><stop offset="0.727" stop-color="#990026"/><stop offset="1.000" stop-color="#99000a"/></linearGradient><linearGradient id="c87" gradientUnits="userSpaceOnUse" x1="1152" y1="0" x2="1752" y2="0"><stop offset="0.000" stop-color="#003599"/><stop offset="0.243" stop-color="#051b99"/><stop offset="0.410" stop-color="#7f0099"/><stop offset="0.447" stop-color="#990091"/><stop offset="0.547" stop-color="#990055"/><stop offset="0.743" stop-color="#990024"/><stop offset="1.000" stop-color="#99000a"/></linearGradient><linearGradient id="c88" gradientUnits="userSpaceOnUse" x1="1152" y1="0" x2="1752" y2="0"><stop offset="0.000" stop-color="#003299"/><stop offset="0.240" stop-color="#051899"/><stop offset="0.410" stop-color="#7f0099"/><stop offset="0.447" stop-color="#990091"/><stop offset="0.550" stop-color="#990055"/><stop offset="0.750" stop-color="#990024"/><stop offset="1.000" stop-color="#99000b"/></linearGradient><linearGradient id="c89" gradientUnits="userSpaceOnUse" x1="1152" y1="0" x2="1752" y2="0"><stop offset="0.000" stop-color="#002f99"/><stop offset="0.237" stop-color="#051599"/><stop offset="0.410" stop-color="#7f0099"/><stop offset="0.447" stop-color="#990092"/><stop offset="0.550" stop-color="#990056"/><stop offset="0.753" stop-color="#990025"/><stop offset="1.000" stop-color="#99000c"/></linearGradient><linearGradient id="c90" gradientUnits="userSpaceOnUse" x1="1152" y1="0" x2="1752" y2="0"><stop offset="0.000" stop-color="#002c99"/><stop offset="0.237" stop-color="#061299"/><stop offset="0.410" stop-color="#7f0099"/><stop offset="0.447" stop-color="#990093"/><stop offset="0.553" stop-color="#990056"/><stop offset="0.760" stop-color="#990025"/><stop offset="1.000" stop-color="#99000d"/></linearGradient><linearGradient id="c91" gradientUnits="userSpaceOnUse" x1="1152" y1="0" x2="1752" y2="0"><stop offset="0.000" stop-color="#002999"/><stop offset="0.233" stop-color="#060f99"/><stop offset="0.397" stop-color="#740099"/><stop offset="0.447" stop-color="#990093"/><stop offset="0.553" stop-color="#990056"/><stop offset="0.760" stop-color="#990025"/><stop offset="1.000" stop-color="#99000d"/></linearGradient><linearGradient id="c92" gradientUnits="userSpaceOnUse" x1="1152" y1="0" x2="1752" y2="0"><stop offset="0.000" stop-color="#002699"/><stop offset="0.230" stop-color="#060c99"/><stop offset="0.390" stop-color="#6f0099"/><stop offset="0.447" stop-color="#990094"/><stop offset="0.553" stop-color="#990057"/><stop offset="0.760" stop-color="#990026"/><stop offset="1.000" stop-color="#99000e"/></linearGradient><linearGradient id="c93" gradientUnits="userSpaceOnUse" x1="1152" y1="0" x2="1752" y2="0"><stop offset="0.000" stop-color="#002399"/><stop offset="0.227" stop-color="#050999"/><stop offset="0.407" stop-color="#7d0099"/><stop offset="0.450" stop-color="#990091"/><stop offset="0.560" stop-color="#990056"/><stop offset="0.777" stop-color="#990025"/><stop offset="1.000" stop-color="#99000f"/></linearGradient><linearGradient id="c94" gradientUnits="userSpaceOnUse" x1="1152" y1="0" x2="1752" y2="0"><stop offset="0.000" stop-color="#002099"/><stop offset="0.223" stop-color="#050799"/><stop offset="0.410" stop-color="#7f0099"/><stop offset="0.450" stop-color="#990092"/><stop offset="0.563" stop-color="#990055"/><stop offset="0.783" stop-color="#990025"/><stop offset="1.000" stop-color="#99000f"/></linearGradient><linearGradient id="c95" gradientUnits="userSpaceOnUse" x1="1152" y1="0" x2="1752" y2="0"><stop offset="0.000" stop-color="#001e99"/><stop offset="0.220" stop-color="#050499"/><stop offset="0.410" stop-color="#7f0099"/><stop offset="0.450" stop-color="#990092"/><stop offset="0.563" stop-color="#990056"/><stop offset="0.783" stop-color="#990025"/><stop offset="1.000" stop-color="#990010"/></linearGradient><linearGradient id="c96" gradientUnits="userSpaceOnUse" x1="1152" y1="0" x2="1752" y2="0"><stop offset="0.000" stop-color="#001b99"/><stop offset="0.217" stop-color="#050299"/><stop offset="0.410" stop-color="#7f0099"/><stop offset="0.453" stop-color="#990090"/><stop offset="0.570" stop-color="#990055"/><stop offset="0.800" stop-color="#990024"/><stop offset="1.000" stop-color="#990011"/></linearGradient><linearGradient id="c97" gradientUnits="userSpaceOnUse" x1="1152" y1="0" x2="1752" y2="0"><stop offset="0.000" stop-color="#001899"/><stop offset="0.217" stop-color="#060099"/><stop offset="0.413" stop-color="#820099"/><stop offset="0.453" stop-color="#990091"/><stop offset="0.573" stop-color="#990054"/><stop offset="0.807" stop-color="#990024"/><stop offset="1.000" stop-color="#990011"/></linearGradient><linearGradient id="c98" gradientUnits="userSpaceOnUse" x1="1152" y1="0" x2="1752" y2="0"><stop offset="0.000" stop-color="#001699"/><stop offset="0.213" stop-color="#060099"/><stop offset="0.413" stop-color="#820099"/><stop offset="0.453" stop-color="#990091"/><stop offset="0.573" stop-color="#990055"/><stop offset="0.807" stop-color="#990025"/><stop offset="1.000" stop-color="#990012"/></linearGradient><linearGradient id="c99" gradientUnits="userSpaceOnUse" x1="1152" y1="0" x2="1752" y2="0"><stop offset="0.000" stop-color="#001399"/><stop offset="0.210" stop-color="#060099"/><stop offset="0.410" stop-color="#7f0099"/><stop offset="0.453" stop-color="#990092"/><stop offset="0.577" stop-color="#990055"/><stop offset="0.817" stop-color="#990024"/><stop offset="1.000" stop-color="#990012"/></linearGradient><linearGradient id="c100" gradientUnits="userSpaceOnUse" x1="1152" y1="0" x2="1752" y2="0"><stop offset="0.000" stop-color="#001199"/><stop offset="0.207" stop-color="#060099"/><stop offset="0.410" stop-color="#7f0099"/><stop offset="0.453" stop-color="#990092"/><stop offset="0.577" stop-color="#990056"/><stop offset="0.817" stop-color="#990025"/><stop offset="1.000" stop-color="#990013"/></linearGradient><linearGradient id="c101" gradientUnits="userSpaceOnUse" x1="1152" y1="0" x2="1752" y2="0"><stop offset="0.000" stop-color="#000f99"/><stop offset="0.203" stop-color="#050099"/><stop offset="0.410" stop-color="#7f0099"/><stop offset="0.453" stop-color="#990093"/><stop offset="0.577" stop-color="#990057"/><stop offset="0.817" stop-color="#990026"/><stop offset="1.000" stop-color="#990014"/></linearGradient><linearGradient id="c102" gradientUnits="userSpaceOnUse" x1="1152" y1="0" x2="1752" y2="0"><stop offset="0.000" stop-color="#000c99"/><stop offset="0.200" stop-color="#050099"/><stop offset="0.410" stop-color="#7f0099"/><stop offset="0.457" stop-color="#990091"/><stop offset="0.587" stop-color="#990054"/><stop offset="0.840" stop-color="#990023"/><stop offset="1.000" stop-color="#990014"/></linearGradient><linearGradient id="c103" gradientUnits="userSpaceOnUse" x1="1152" y1="0" x2="1752" y2="0"><stop offset="0.000" stop-color="#000a99"/><stop offset="0.200" stop-color="#070099"/><stop offset="0.413" stop-color="#810099"/><stop offset="0.457" stop-color="#990091"/><stop offset="0.587" stop-color="#990055"/><stop offset="0.840" stop-color="#990024"/><stop offset="1.000" stop-color="#990015"/></linearGradient><linearGradient id="c104" gradientUnits="userSpaceOnUse" x1="1152" y1="0" x2="1752" y2="0"><stop offset="0.000" stop-color="#000899"/><stop offset="0.197" stop-color="#060099"/><stop offset="0.413" stop-color="#810099"/><stop offset="0.457" stop-color="#990092"/><stop offset="0.587" stop-color="#990056"/><stop offset="0.840" stop-color="#990025"/><stop offset="1.000" stop-color="#990016"/></linearGradient><linearGradient id="c105" gradientUnits="userSpaceOnUse" x1="1272" y1="0" x2="1680" y2="0"><stop offset="0.000" stop-color="#00ff27"/><stop offset="0.314" stop-color="#04ff00"/><stop offset="0.549" stop-color="#a0ff00"/><stop offset="0.667" stop-color="#fffb00"/><stop offset="0.789" stop-color="#ffaa00"/><stop offset="0.985" stop-color="#ff6500"/><stop offset="1.000" stop-color="#ff6100"/></linearGradient><linearGradient id="c106" gradientUnits="userSpaceOnUse" x1="1272" y1="0" x2="1680" y2="0"><stop offset="0.000" stop-color="#00ff2a"/><stop offset="0.314" stop-color="#06ff01"/><stop offset="0.544" stop-color="#a1ff00"/><stop offset="0.657" stop-color="#fffd00"/><stop offset="0.775" stop-color="#ffac00"/><stop offset="0.966" stop-color="#ff6700"/><stop offset="1.000" stop-color="#ff5e00"/></linearGradient><linearGradient id="c107" gradientUnits="userSpaceOnUse" x1="1272" y1="0" x2="1680" y2="0"><stop offset="0.000" stop-color="#00ff2c"/><stop offset="0.309" stop-color="#05ff05"/><stop offset="0.534" stop-color="#9fff00"/><stop offset="0.652" stop-color="#fffa00"/><stop offset="0.770" stop-color="#ffaa00"/><stop offset="0.961" stop-color="#ff6500"/><stop offset="1.000" stop-color="#ff5c00"/></linearGradient><linearGradient id="c108" gradientUnits="userSpaceOnUse" x1="1272" y1="0" x2="1680" y2="0"><stop offset="0.000" stop-color="#00ff2f"/><stop offset="0.304" stop-color="#05ff08"/><stop offset="0.505" stop-color="#8dff00"/><stop offset="0.642" stop-color="#fffc00"/><stop offset="0.760" stop-color="#ffaa00"/><stop offset="0.946" stop-color="#ff6600"/><stop offset="1.000" stop-color="#ff5900"/></linearGradient><linearGradient id="c109" gradientUnits="userSpaceOnUse" x1="1272" y1="0" x2="1680" y2="0"><stop offset="0.000" stop-color="#00ff32"/><stop offset="0.299" stop-color="#04ff0c"/><stop offset="0.446" stop-color="#65ff00"/><stop offset="0.637" stop-color="#fff900"/><stop offset="0.755" stop-color="#ffa800"/><stop offset="0.946" stop-color="#ff6300"/><stop offset="1.000" stop-color="#ff5600"/></linearGradient><linearGradient id="c110" gradientUnits="userSpaceOnUse" x1="1272" y1="0" x2="1680" y2="0"><stop offset="0.000" stop-color="#00ff35"/><stop offset="0.299" stop-color="#06ff0e"/><stop offset="0.451" stop-color="#6dff00"/><stop offset="0.627" stop-color="#fffb00"/><stop offset="0.740" stop-color="#ffab00"/><stop offset="0.922" stop-color="#ff6600"/><stop offset="1.000" stop-color="#ff5300"/></linearGradient><linearGradient id="c111" gradientUnits="userSpaceOnUse" x1="1272" y1="0" x2="1680" y2="0"><stop offset="0.000" stop-color="#00ff38"/><stop offset="0.294" stop-color="#05ff12"/><stop offset="0.461" stop-color="#78ff00"/><stop offset="0.618" stop-color="#fffd00"/><stop offset="0.730" stop-color="#ffab00"/><stop offset="0.912" stop-color="#ff6600"/><stop offset="1.000" stop-color="#ff5100"/></linearGradient><linearGradient id="c112" gradientUnits="userSpaceOnUse" x1="1272" y1="0" x2="1680" y2="0"><stop offset="0.000" stop-color="#00ff3b"/><stop offset="0.289" stop-color="#05ff16"/><stop offset="0.471" stop-color="#85ff00"/><stop offset="0.613" stop-color="#fffa00"/><stop offset="0.725" stop-color="#ffa900"/><stop offset="0.907" stop-color="#ff6400"/><stop offset="1.000" stop-color="#ff4e00"/></linearGradient><linearGradient id="c113" gradientUnits="userSpaceOnUse" x1="1272" y1="0" x2="1680" y2="0"><stop offset="0.000" stop-color="#00ff3e"/><stop offset="0.284" stop-color="#04ff1a"/><stop offset="0.480" stop-color="#92ff00"/><stop offset="0.603" stop-color="#fffc00"/><stop offset="0.711" stop-color="#ffac00"/><stop offset="0.887" stop-color="#ff6600"/><stop offset="1.000" stop-color="#ff4b00"/></linearGradient><linearGradient id="c114" gradientUnits="userSpaceOnUse" x1="1272" y1="0" x2="1680" y2="0"><stop offset="0.000" stop-color="#00ff41"/><stop offset="0.279" stop-color="#03ff1e"/><stop offset="0.490" stop-color="#a0ff00"/><stop offset="0.598" stop-color="#fff900"/><stop offset="0.706" stop-color="#ffa900"/><stop offset="0.882" stop-color="#ff6400"/><stop offset="1.000" stop-color="#ff4900"/></linearGradient><linearGradient id="c115" gradientUnits="userSpaceOnUse" x1="1272" y1="0" x2="1680" y2="0"><stop offset="0.000" stop-color="#00ff44"/><stop offset="0.279" stop-color="#06ff21"/><stop offset="0.485" stop-color="#a1ff00"/><stop offset="0.588" stop-color="#fffb00"/><stop offset="0.696" stop-color="#ffaa00"/><stop offset="0.868" stop-color="#ff6500"/><stop offset="1.000" stop-color="#ff4600"/></linearGradient><linearGradient id="c116" gradientUnits="userSpaceOnUse" x1="1272" y1="0" x2="1680" y2="0"><stop offset="0.000" stop-color="#00ff47"/><stop offset="0.275" stop-color="#05ff25"/><stop offset="0.475" stop-color="#9eff02"/><stop offset="0.578" stop-color="#fffd00"/><stop offset="0.681" stop-color="#ffad00"/><stop offset="0.848" stop-color="#ff6700"/><stop offset="1.000" stop-color="#ff4400"/></linearGradient><linearGradient id="c117" gradientUnits="userSpaceOnUse" x1="1272" y1="0" x2="1680" y2="0"><stop offset="0.000" stop-color="#00ff4b"/><stop offset="0.270" stop-color="#04ff29"/><stop offset="0.471" stop-color="#9fff07"/><stop offset="0.574" stop-color="#fff900"/><stop offset="0.676" stop-color="#ffaa00"/><stop offset="0.843" stop-color="#ff6500"/><stop offset="1.000" stop-color="#ff4100"/></linearGradient><linearGradient id="c118" gradientUnits="userSpaceOnUse" x1="1272" y1="0" x2="1680" y2="0"><stop offset="0.000" stop-color="#00ff4e"/><stop offset="0.265" stop-color="#03ff2e"/><stop offset="0.461" stop-color="#9cff0c"/><stop offset="0.564" stop-color="#fffb00"/><stop offset="0.667" stop-color="#ffaa00"/><stop offset="0.833" stop-color="#ff6500"/><stop offset="1.000" stop-color="#ff3f00"/></linearGradient><linearGradient id="c119" gradientUnits="userSpaceOnUse" x1="1272" y1="0" x2="1680" y2="0"><stop offset="0.000" stop-color="#00ff52"/><stop offset="0.265" stop-color="#06ff31"/><stop offset="0.461" stop-color="#a2ff10"/><stop offset="0.554" stop-color="#fffe00"/><stop offset="0.652" stop-color="#ffae00"/><stop offset="0.809" stop-color="#ff6900"/><stop offset="1.000" stop-color="#ff3c00"/></linearGradient><linearGradient id="c120" gradientUnits="userSpaceOnUse" x1="1272" y1="0" x2="1680" y2="0"><stop offset="0.000" stop-color="#00ff56"/><stop offset="0.260" stop-color="#05ff36"/><stop offset="0.451" stop-color="#9fff16"/><stop offset="0.549" stop-color="#fffa01"/><stop offset="0.647" stop-color="#ffab00"/><stop offset="0.809" stop-color="#ff6500"/><stop offset="1.000" stop-color="#ff3a00"/></linearGradient><linearGradient id="c121" gradientUnits="userSpaceOnUse" x1="1272" y1="0" x2="1680" y2="0"><stop offset="0.000" stop-color="#00ff5a"/><stop offset="0.255" stop-color="#04ff3b"/><stop offset="0.446" stop-color="#a1ff1b"/><stop offset="0.539" stop-color="#fffc07"/><stop offset="0.637" stop-color="#ffab00"/><stop offset="0.794" stop-color="#ff6600"/><stop offset="1.000" stop-color="#ff3700"/></linearGradient><linearGradient id="c122" gradientUnits="userSpaceOnUse" x1="1272" y1="0" x2="1680" y2="0"><stop offset="0.000" stop-color="#00ff5d"/><stop offset="0.250" stop-color="#03ff40"/><stop offset="0.436" stop-color="#9eff21"/><stop offset="0.534" stop-color="#fff90c"/><stop offset="0.632" stop-color="#ffa900"/><stop offset="0.789" stop-color="#ff6400"/><stop offset="1.000" stop-color="#ff3500"/></linearGradient><linearGradient id="c123" gradientUnits="userSpaceOnUse" x1="1272" y1="0" x2="1680" y2="0"><stop offset="0.000" stop-color="#00ff62"/><stop offset="0.250" stop-color="#06ff44"/><stop offset="0.431" stop-color="#9fff26"/><stop offset="0.525" stop-color="#fffb12"/><stop offset="0.618" stop-color="#ffac00"/><stop offset="0.770" stop-color="#ff6700"/><stop offset="1.000" stop-color="#ff3200"/></linearGradient><linearGradient id="c124" gradientUnits="userSpaceOnUse" x1="1272" y1="0" x2="1680" y2="0"><stop offset="0.000" stop-color="#00ff66"/><stop offset="0.245" stop-color="#05ff49"/><stop offset="0.426" stop-color="#a1ff2b"/><stop offset="0.515" stop-color="#fffe19"/><stop offset="0.608" stop-color="#ffac02"/><stop offset="0.755" stop-color="#ff6800"/><stop offset="1.000" stop-color="#ff3000"/></linearGradient><linearGradient id="c125" gradientUnits="userSpaceOnUse" x1="1272" y1="0" x2="1680" y2="0"><stop offset="0.000" stop-color="#00ff6a"/><stop offset="0.240" stop-color="#04ff4e"/><stop offset="0.417" stop-color="#9dff32"/><stop offset="0.510" stop-color="#fffa1f"/><stop offset="0.603" stop-color="#ffa906"/><stop offset="0.755" stop-color="#ff6400"/><stop offset="1.000" stop-color="#ff2e00"/></linearGradient><linearGradient id="c126" gradientUnits="userSpaceOnUse" x1="1272" y1="0" x2="1680" y2="0"><stop offset="0.000" stop-color="#00ff6f"/><stop offset="0.235" stop-color="#03ff54"/><stop offset="0.412" stop-color="#9fff38"/><stop offset="0.500" stop-color="#fffc26"/><stop offset="0.588" stop-color="#ffad0c"/><stop offset="0.716" stop-color="#ff6d00"/><stop offset="0.956" stop-color="#ff3200"/><stop offset="1.000" stop-color="#ff2b00"/></linearGradient><linearGradient id="c127" gradientUnits="userSpaceOnUse" x1="1272" y1="0" x2="1680" y2="0"><stop offset="0.000" stop-color="#00ff73"/><stop offset="0.235" stop-color="#06ff59"/><stop offset="0.407" stop-color="#a0ff3e"/><stop offset="0.495" stop-color="#fff92b"/><stop offset="0.583" stop-color="#ffaa10"/><stop offset="0.716" stop-color="#ff6900"/><stop offset="0.961" stop-color="#ff2f00"/><stop offset="1.000" stop-color="#ff2900"/></linearGradient><linearGradient id="c128" gradientUnits="userSpaceOnUse" x1="1272" y1="0" x2="1680" y2="0"><stop offset="0.000" stop-color="#00ff78"/><stop offset="0.230" stop-color="#05ff5e"/><stop offset="0.397" stop-color="#9dff45"/><stop offset="0.485" stop-color="#fffb33"/><stop offset="0.574" stop-color="#ffaa15"/><stop offset="0.716" stop-color="#ff6500"/><stop offset="0.966" stop-color="#ff2c00"/><stop offset="1.000" stop-color="#ff2700"/></linearGradient><linearGradient id="c129" gradientUnits="userSpaceOnUse" x1="1272" y1="0" x2="1680" y2="0"><stop offset="0.000" stop-color="#00ff7d"/><stop offset="0.225" stop-color="#04ff64"/><stop offset="0.392" stop-color="#9fff4c"/><stop offset="0.475" stop-color="#fffd3c"/><stop offset="0.559" stop-color="#ffae1c"/><stop offset="0.696" stop-color="#ff6800"/><stop offset="0.936" stop-color="#ff2e00"/><stop offset="1.000" stop-color="#ff2500"/></linearGradient><linearGradient id="c130" gradientUnits="userSpaceOnUse" x1="1272" y1="0" x2="1680" y2="0"><stop offset="0.000" stop-color="#00ff82"/><stop offset="0.221" stop-color="#03ff6b"/><stop offset="0.382" stop-color="#9bff53"/><stop offset="0.471" stop-color="#fffa42"/><stop offset="0.554" stop-color="#ffab20"/><stop offset="0.691" stop-color="#ff6603"/><stop offset="0.931" stop-color="#ff2c00"/><stop offset="1.000" stop-color="#ff2200"/></linearGradient><linearGradient id="c131" gradientUnits="userSpaceOnUse" x1="1272" y1="0" x2="1680" y2="0"><stop offset="0.000" stop-color="#00ff87"/><stop offset="0.221" stop-color="#06ff70"/><stop offset="0.382" stop-color="#a2ff59"/><stop offset="0.461" stop-color="#fffc4a"/><stop offset="0.544" stop-color="#ffab26"/><stop offset="0.676" stop-color="#ff6708"/><stop offset="0.892" stop-color="#ff3000"/><stop offset="1.000" stop-color="#ff2000"/></linearGradient><linearGradient id="c132" gradientUnits="userSpaceOnUse" x1="1272" y1="0" x2="1680" y2="0"><stop offset="0.000" stop-color="#00ff8d"/><stop offset="0.216" stop-color="#05ff77"/><stop offset="0.373" stop-color="#9eff61"/><stop offset="0.451" stop-color="#ffff54"/><stop offset="0.529" stop-color="#ffaf2e"/><stop offset="0.657" stop-color="#ff6a0e"/><stop offset="0.814" stop-color="#ff3c00"/><stop offset="1.000" stop-color="#ff1e00"/></linearGradient><linearGradient id="c133" gradientUnits="userSpaceOnUse" x1="1272" y1="0" x2="1680" y2="0"><stop offset="0.000" stop-color="#00ff92"/><stop offset="0.211" stop-color="#04ff7e"/><stop offset="0.368" stop-color="#a0ff69"/><stop offset="0.446" stop-color="#fffb5a"/><stop offset="0.525" stop-color="#ffac33"/><stop offset="0.652" stop-color="#ff6711"/><stop offset="0.824" stop-color="#ff3700"/><stop offset="1.000" stop-color="#ff1c00"/></linearGradient><linearGradient id="c134" gradientUnits="userSpaceOnUse" x1="1272" y1="0" x2="1680" y2="0"><stop offset="0.000" stop-color="#00ff98"/><stop offset="0.206" stop-color="#03ff85"/><stop offset="0.358" stop-color="#9cff72"/><stop offset="0.436" stop-color="#fffd64"/><stop offset="0.515" stop-color="#ffac3a"/><stop offset="0.642" stop-color="#ff6615"/><stop offset="0.828" stop-color="#ff3300"/><stop offset="1.000" stop-color="#ff1a00"/></linearGradient><linearGradient id="c135" gradientUnits="userSpaceOnUse" x1="1272" y1="0" x2="1680" y2="0"><stop offset="0.000" stop-color="#00ff9e"/><stop offset="0.206" stop-color="#06ff8c"/><stop offset="0.353" stop-color="#9eff7a"/><stop offset="0.431" stop-color="#fff96b"/><stop offset="0.510" stop-color="#ffa93f"/><stop offset="0.637" stop-color="#ff6419"/><stop offset="0.843" stop-color="#ff2e00"/><stop offset="1.000" stop-color="#ff1700"/></linearGradient><linearGradient id="c136" gradientUnits="userSpaceOnUse" x1="1272" y1="0" x2="1680" y2="0"><stop offset="0.000" stop-color="#00ffa4"/><stop offset="0.201" stop-color="#05ff93"/><stop offset="0.348" stop-color="#a0ff82"/><stop offset="0.422" stop-color="#fffc76"/><stop offset="0.495" stop-color="#ffad48"/><stop offset="0.618" stop-color="#ff671f"/><stop offset="0.833" stop-color="#ff2d00"/><stop offset="1.000" stop-color="#ff1500"/></linearGradient><linearGradient id="c137" gradientUnits="userSpaceOnUse" x1="1272" y1="0" x2="1680" y2="0"><stop offset="0.000" stop-color="#00ffab"/><stop offset="0.196" stop-color="#04ff9b"/><stop offset="0.338" stop-color="#9cff8c"/><stop offset="0.412" stop-color="#ffff81"/><stop offset="0.485" stop-color="#ffae50"/><stop offset="0.603" stop-color="#ff6825"/><stop offset="0.809" stop-color="#ff2f02"/><stop offset="1.000" stop-color="#ff1300"/></linearGradient><linearGradient id="c138" gradientUnits="userSpaceOnUse" x1="1272" y1="0" x2="1680" y2="0"><stop offset="0.000" stop-color="#00ffb2"/><stop offset="0.191" stop-color="#03ffa3"/><stop offset="0.333" stop-color="#9eff95"/><stop offset="0.407" stop-color="#fffb89"/><stop offset="0.480" stop-color="#ffaa55"/><stop offset="0.598" stop-color="#ff6629"/><stop offset="0.809" stop-color="#ff2c04"/><stop offset="1.000" stop-color="#ff1100"/></linearGradient><linearGradient id="c139" gradientUnits="userSpaceOnUse" x1="1272" y1="0" x2="1680" y2="0"><stop offset="0.000" stop-color="#00ffb9"/><stop offset="0.186" stop-color="#02ffac"/><stop offset="0.324" stop-color="#99ff9f"/><stop offset="0.397" stop-color="#fffd95"/><stop offset="0.466" stop-color="#ffaf60"/><stop offset="0.578" stop-color="#ff6931"/><stop offset="0.775" stop-color="#ff2f0a"/><stop offset="0.990" stop-color="#ff1000"/><stop offset="1.000" stop-color="#ff0f00"/></linearGradient><linearGradient id="c140" gradientUnits="userSpaceOnUse" x1="1272" y1="0" x2="1680" y2="0"><stop offset="0.000" stop-color="#00ffc0"/><stop offset="0.186" stop-color="#05ffb4"/><stop offset="0.324" stop-color="#a2ffa8"/><stop offset="0.392" stop-color="#fff99d"/><stop offset="0.461" stop-color="#ffab66"/><stop offset="0.574" stop-color="#ff6635"/><stop offset="0.775" stop-color="#ff2c0c"/><stop offset="0.980" stop-color="#ff0f00"/><stop offset="1.000" stop-color="#ff0d00"/></linearGradient><linearGradient id="c141" gradientUnits="userSpaceOnUse" x1="1272" y1="0" x2="1680" y2="0"><stop offset="0.000" stop-color="#00ffc8"/><stop offset="0.181" stop-color="#04ffbd"/><stop offset="0.314" stop-color="#9dffb3"/><stop offset="0.382" stop-color="#fffcaa"/><stop offset="0.451" stop-color="#ffab6e"/><stop offset="0.559" stop-color="#ff673c"/><stop offset="0.750" stop-color="#ff2e11"/><stop offset="0.971" stop-color="#ff0e00"/><stop offset="1.000" stop-color="#ff0b00"/></linearGradient><linearGradient id="c142" gradientUnits="userSpaceOnUse" x1="1272" y1="0" x2="1680" y2="0"><stop offset="0.000" stop-color="#00ffcf"/><stop offset="0.176" stop-color="#03ffc7"/><stop offset="0.309" stop-color="#9fffbe"/><stop offset="0.373" stop-color="#ffffb9"/><stop offset="0.436" stop-color="#ffb07b"/><stop offset="0.539" stop-color="#ff6b45"/><stop offset="0.721" stop-color="#ff3118"/><stop offset="0.971" stop-color="#ff0c00"/><stop offset="1.000" stop-color="#ff0900"/></linearGradient><linearGradient id="c143" gradientUnits="userSpaceOnUse" x1="1272" y1="0" x2="1680" y2="0"><stop offset="0.000" stop-color="#00ffd8"/><stop offset="0.172" stop-color="#01ffd1"/><stop offset="0.299" stop-color="#9bffca"/><stop offset="0.368" stop-color="#fffac1"/><stop offset="0.431" stop-color="#ffac81"/><stop offset="0.534" stop-color="#ff6849"/><stop offset="0.716" stop-color="#ff2f1a"/><stop offset="0.985" stop-color="#ff0800"/><stop offset="1.000" stop-color="#ff0700"/></linearGradient><linearGradient id="c144" gradientUnits="userSpaceOnUse" x1="1272" y1="0" x2="1680" y2="0"><stop offset="0.000" stop-color="#00ffe0"/><stop offset="0.172" stop-color="#05ffdb"/><stop offset="0.294" stop-color="#9dffd6"/><stop offset="0.358" stop-color="#fffdd1"/><stop offset="0.422" stop-color="#ffad8b"/><stop offset="0.525" stop-color="#ff6750"/><stop offset="0.706" stop-color="#ff2d1e"/><stop offset="0.995" stop-color="#ff0500"/><stop offset="1.000" stop-color="#ff0500"/></linearGradient><linearGradient id="c145" gradientUnits="userSpaceOnUse" x1="1272" y1="0" x2="1680" y2="0"><stop offset="0.000" stop-color="#00ffe9"/><stop offset="0.167" stop-color="#04ffe6"/><stop offset="0.289" stop-color="#9fffe2"/><stop offset="0.348" stop-color="#fdffe0"/><stop offset="0.412" stop-color="#ffad96"/><stop offset="0.510" stop-color="#ff6958"/><stop offset="0.681" stop-color="#ff2f25"/><stop offset="0.990" stop-color="#ff0400"/><stop offset="1.000" stop-color="#ff0300"/></linearGradient><linearGradient id="c146" gradientUnits="userSpaceOnUse" x1="1272" y1="0" x2="1680" y2="0"><stop offset="0.000" stop-color="#00fff3"/><stop offset="0.162" stop-color="#03fff1"/><stop offset="0.279" stop-color="#9affef"/><stop offset="0.343" stop-color="#fffceb"/><stop offset="0.402" stop-color="#ffaea1"/><stop offset="0.500" stop-color="#ff685f"/><stop offset="0.672" stop-color="#ff2e28"/><stop offset="0.995" stop-color="#ff0200"/><stop offset="1.000" stop-color="#ff0100"/></linearGradient><linearGradient id="c147" gradientUnits="userSpaceOnUse" x1="1272" y1="0" x2="1680" y2="0"><stop offset="0.000" stop-color="#00fffd"/><stop offset="0.157" stop-color="#01fffd"/><stop offset="0.275" stop-color="#9cfffd"/><stop offset="0.333" stop-color="#fffffd"/><stop offset="0.392" stop-color="#ffaead"/><stop offset="0.485" stop-color="#ff6a69"/><stop offset="0.652" stop-color="#ff2f2f"/><stop offset="0.985" stop-color="#ff0000"/><stop offset="1.000" stop-color="#ff0000"/></linearGradient><linearGradient id="c148" gradientUnits="userSpaceOnUse" x1="1272" y1="0" x2="1680" y2="0"><stop offset="0.000" stop-color="#00f7ff"/><stop offset="0.157" stop-color="#05f5ff"/><stop offset="0.275" stop-color="#9ff3ff"/><stop offset="0.333" stop-color="#fff1fe"/><stop offset="0.392" stop-color="#ffa5af"/><stop offset="0.485" stop-color="#ff646b"/><stop offset="0.652" stop-color="#ff2b31"/><stop offset="0.975" stop-color="#ff0003"/><stop offset="1.000" stop-color="#ff0001"/></linearGradient><linearGradient id="c149" gradientUnits="userSpaceOnUse" x1="1272" y1="0" x2="1680" y2="0"><stop offset="0.000" stop-color="#00edff"/><stop offset="0.152" stop-color="#04eaff"/><stop offset="0.275" stop-color="#a0e6ff"/><stop offset="0.333" stop-color="#ffe3ff"/><stop offset="0.392" stop-color="#ff9cb1"/><stop offset="0.490" stop-color="#ff5b6b"/><stop offset="0.662" stop-color="#ff2630"/><stop offset="0.971" stop-color="#ff0004"/><stop offset="1.000" stop-color="#ff0002"/></linearGradient><linearGradient id="c150" gradientUnits="userSpaceOnUse" x1="1272" y1="0" x2="1680" y2="0"><stop offset="0.000" stop-color="#00e4ff"/><stop offset="0.147" stop-color="#02dfff"/><stop offset="0.270" stop-color="#9ad9ff"/><stop offset="0.333" stop-color="#fed6ff"/><stop offset="0.397" stop-color="#ff8fae"/><stop offset="0.500" stop-color="#ff5268"/><stop offset="0.681" stop-color="#ff1f2e"/><stop offset="0.971" stop-color="#ff0006"/><stop offset="1.000" stop-color="#ff0003"/></linearGradient><linearGradient id="c151" gradientUnits="userSpaceOnUse" x1="1272" y1="0" x2="1680" y2="0"><stop offset="0.000" stop-color="#00daff"/><stop offset="0.147" stop-color="#06d4ff"/><stop offset="0.275" stop-color="#a2cdff"/><stop offset="0.338" stop-color="#ffc3f9"/><stop offset="0.402" stop-color="#ff83ac"/><stop offset="0.505" stop-color="#ff4a68"/><stop offset="0.686" stop-color="#ff1b2e"/><stop offset="0.956" stop-color="#ff0008"/><stop offset="1.000" stop-color="#ff0004"/></linearGradient><linearGradient id="c152" gradientUnits="userSpaceOnUse" x1="1272" y1="0" x2="1680" y2="0"><stop offset="0.000" stop-color="#00d1ff"/><stop offset="0.142" stop-color="#04caff"/><stop offset="0.270" stop-color="#9cc1ff"/><stop offset="0.338" stop-color="#ffb8fa"/><stop offset="0.407" stop-color="#ff77a9"/><stop offset="0.515" stop-color="#ff4265"/><stop offset="0.706" stop-color="#ff142c"/><stop offset="0.941" stop-color="#ff000b"/><stop offset="1.000" stop-color="#ff0006"/></linearGradient><linearGradient id="c153" gradientUnits="userSpaceOnUse" x1="1272" y1="0" x2="1680" y2="0"><stop offset="0.000" stop-color="#00c9ff"/><stop offset="0.137" stop-color="#03c1ff"/><stop offset="0.270" stop-color="#9db6ff"/><stop offset="0.338" stop-color="#ffadfb"/><stop offset="0.407" stop-color="#ff70ab"/><stop offset="0.515" stop-color="#ff3d67"/><stop offset="0.706" stop-color="#ff112e"/><stop offset="0.922" stop-color="#ff000f"/><stop offset="1.000" stop-color="#ff0007"/></linearGradient><linearGradient id="c154" gradientUnits="userSpaceOnUse" x1="1272" y1="0" x2="1680" y2="0"><stop offset="0.000" stop-color="#00c0ff"/><stop offset="0.132" stop-color="#02b7ff"/><stop offset="0.270" stop-color="#9eabff"/><stop offset="0.338" stop-color="#ffa2fc"/><stop offset="0.407" stop-color="#ff69ad"/><stop offset="0.520" stop-color="#ff3667"/><stop offset="0.716" stop-color="#ff0d2d"/><stop offset="0.922" stop-color="#ff0010"/><stop offset="1.000" stop-color="#ff0008"/></linearGradient><linearGradient id="c155" gradientUnits="userSpaceOnUse" x1="1272" y1="0" x2="1680" y2="0"><stop offset="0.000" stop-color="#00b8ff"/><stop offset="0.132" stop-color="#05aeff"/><stop offset="0.270" stop-color="#9fa1ff"/><stop offset="0.338" stop-color="#ff98fd"/><stop offset="0.407" stop-color="#ff61ae"/><stop offset="0.520" stop-color="#ff3269"/><stop offset="0.716" stop-color="#ff0a2f"/><stop offset="0.926" stop-color="#ff0011"/><stop offset="1.000" stop-color="#ff000a"/></linearGradient><linearGradient id="c156" gradientUnits="userSpaceOnUse" x1="1272" y1="0" x2="1680" y2="0"><stop offset="0.000" stop-color="#00b0ff"/><stop offset="0.127" stop-color="#04a6ff"/><stop offset="0.270" stop-color="#a097ff"/><stop offset="0.338" stop-color="#ff8dfe"/><stop offset="0.407" stop-color="#ff5bb0"/><stop offset="0.520" stop-color="#ff2d6b"/><stop offset="0.716" stop-color="#ff0731"/><stop offset="1.000" stop-color="#ff000b"/></linearGradient><linearGradient id="c157" gradientUnits="userSpaceOnUse" x1="1272" y1="0" x2="1680" y2="0"><stop offset="0.000" stop-color="#00a8ff"/><stop offset="0.123" stop-color="#039eff"/><stop offset="0.265" stop-color="#9b8eff"/><stop offset="0.338" stop-color="#ff84ff"/><stop offset="0.412" stop-color="#ff51ae"/><stop offset="0.529" stop-color="#ff2668"/><stop offset="0.735" stop-color="#ff022e"/><stop offset="1.000" stop-color="#ff000c"/></linearGradient><linearGradient id="c158" gradientUnits="userSpaceOnUse" x1="1272" y1="0" x2="1680" y2="0"><stop offset="0.000" stop-color="#00a1ff"/><stop offset="0.123" stop-color="#0696ff"/><stop offset="0.270" stop-color="#a284ff"/><stop offset="0.343" stop-color="#ff76f9"/><stop offset="0.417" stop-color="#ff48ab"/><stop offset="0.539" stop-color="#ff1f66"/><stop offset="0.755" stop-color="#ff002c"/><stop offset="1.000" stop-color="#ff000d"/></linearGradient><linearGradient id="c159" gradientUnits="userSpaceOnUse" x1="1272" y1="0" x2="1680" y2="0"><stop offset="0.000" stop-color="#009aff"/><stop offset="0.118" stop-color="#048eff"/><stop offset="0.265" stop-color="#9d7cff"/><stop offset="0.343" stop-color="#ff6dfa"/><stop offset="0.422" stop-color="#ff40a9"/><stop offset="0.549" stop-color="#ff1964"/><stop offset="0.755" stop-color="#ff002e"/><stop offset="1.000" stop-color="#ff000e"/></linearGradient><linearGradient id="c160" gradientUnits="userSpaceOnUse" x1="1272" y1="0" x2="1680" y2="0"><stop offset="0.000" stop-color="#0093ff"/><stop offset="0.113" stop-color="#0387ff"/><stop offset="0.265" stop-color="#9e73ff"/><stop offset="0.343" stop-color="#ff65fb"/><stop offset="0.422" stop-color="#ff3aab"/><stop offset="0.549" stop-color="#ff1566"/><stop offset="0.735" stop-color="#ff0033"/><stop offset="1.000" stop-color="#ff0010"/></linearGradient><linearGradient id="c161" gradientUnits="userSpaceOnUse" x1="1272" y1="0" x2="1680" y2="0"><stop offset="0.000" stop-color="#008cff"/><stop offset="0.113" stop-color="#0680ff"/><stop offset="0.265" stop-color="#9f6bff"/><stop offset="0.343" stop-color="#ff5cfc"/><stop offset="0.422" stop-color="#ff34ac"/><stop offset="0.549" stop-color="#ff1267"/><stop offset="0.716" stop-color="#ff0038"/><stop offset="1.000" stop-color="#ff0011"/></linearGradient><linearGradient id="c162" gradientUnits="userSpaceOnUse" x1="1272" y1="0" x2="1680" y2="0"><stop offset="0.000" stop-color="#0085ff"/><stop offset="0.108" stop-color="#0579ff"/><stop offset="0.265" stop-color="#a063ff"/><stop offset="0.343" stop-color="#ff54fd"/><stop offset="0.422" stop-color="#ff2fae"/><stop offset="0.549" stop-color="#ff0e69"/><stop offset="0.706" stop-color="#ff003c"/><stop offset="1.000" stop-color="#ff0012"/></linearGradient><linearGradient id="c163" gradientUnits="userSpaceOnUse" x1="1272" y1="0" x2="1680" y2="0"><stop offset="0.000" stop-color="#007eff"/><stop offset="0.103" stop-color="#0473ff"/><stop offset="0.265" stop-color="#a15bff"/><stop offset="0.343" stop-color="#ff4cfd"/><stop offset="0.426" stop-color="#ff28ac"/><stop offset="0.559" stop-color="#ff0867"/><stop offset="0.765" stop-color="#ff0032"/><stop offset="1.000" stop-color="#ff0013"/></linearGradient><linearGradient id="c164" gradientUnits="userSpaceOnUse" x1="1272" y1="0" x2="1680" y2="0"><stop offset="0.000" stop-color="#0078ff"/><stop offset="0.098" stop-color="#036cff"/><stop offset="0.260" stop-color="#9c55ff"/><stop offset="0.343" stop-color="#ff45fe"/><stop offset="0.426" stop-color="#ff22ad"/><stop offset="0.559" stop-color="#ff0568"/><stop offset="0.794" stop-color="#ff002e"/><stop offset="1.000" stop-color="#ff0014"/></linearGradient><linearGradient id="c165" gradientUnits="userSpaceOnUse" x1="1272" y1="0" x2="1680" y2="0"><stop offset="0.000" stop-color="#0072ff"/><stop offset="0.098" stop-color="#0666ff"/><stop offset="0.265" stop-color="#a24cff"/><stop offset="0.348" stop-color="#ff3bf9"/><stop offset="0.436" stop-color="#ff1aa8"/><stop offset="0.578" stop-color="#ff0063"/><stop offset="0.828" stop-color="#ff002a"/><stop offset="1.000" stop-color="#ff0015"/></linearGradient><linearGradient id="c166" gradientUnits="userSpaceOnUse" x1="1272" y1="0" x2="1680" y2="0"><stop offset="0.000" stop-color="#006cff"/><stop offset="0.093" stop-color="#0460ff"/><stop offset="0.260" stop-color="#9e46ff"/><stop offset="0.348" stop-color="#ff34fa"/><stop offset="0.436" stop-color="#ff15a9"/><stop offset="0.578" stop-color="#ff0064"/><stop offset="0.828" stop-color="#ff002c"/><stop offset="1.000" stop-color="#ff0017"/></linearGradient><linearGradient id="c167" gradientUnits="userSpaceOnUse" x1="1272" y1="0" x2="1680" y2="0"><stop offset="0.000" stop-color="#0066ff"/><stop offset="0.088" stop-color="#035bff"/><stop offset="0.260" stop-color="#9e40ff"/><stop offset="0.348" stop-color="#ff2dfb"/><stop offset="0.436" stop-color="#ff11ab"/><stop offset="0.569" stop-color="#ff0069"/><stop offset="0.814" stop-color="#ff002f"/><stop offset="1.000" stop-color="#ff0018"/></linearGradient><linearGradient id="c168" gradientUnits="userSpaceOnUse" x1="1272" y1="0" x2="1680" y2="0"><stop offset="0.000" stop-color="#0060ff"/><stop offset="0.088" stop-color="#0655ff"/><stop offset="0.260" stop-color="#9f39ff"/><stop offset="0.348" stop-color="#ff26fb"/><stop offset="0.436" stop-color="#ff0cac"/><stop offset="0.564" stop-color="#ff006d"/><stop offset="0.804" stop-color="#ff0032"/><stop offset="1.000" stop-color="#ff0019"/></linearGradient><linearGradient id="c169" gradientUnits="userSpaceOnUse" x1="1272" y1="0" x2="1680" y2="0"><stop offset="0.000" stop-color="#005aff"/><stop offset="0.083" stop-color="#054fff"/><stop offset="0.260" stop-color="#a033ff"/><stop offset="0.348" stop-color="#ff20fc"/><stop offset="0.436" stop-color="#ff07ad"/><stop offset="0.583" stop-color="#ff0067"/><stop offset="0.843" stop-color="#ff002d"/><stop offset="1.000" stop-color="#ff001a"/></linearGradient><linearGradient id="c170" gradientUnits="userSpaceOnUse" x1="1272" y1="0" x2="1680" y2="0"><stop offset="0.000" stop-color="#0055ff"/><stop offset="0.078" stop-color="#044aff"/><stop offset="0.260" stop-color="#a12cff"/><stop offset="0.348" stop-color="#ff1afd"/><stop offset="0.441" stop-color="#ff02ac"/><stop offset="0.588" stop-color="#ff0067"/><stop offset="0.848" stop-color="#ff002e"/><stop offset="1.000" stop-color="#ff001b"/></linearGradient><linearGradient id="c171" gradientUnits="userSpaceOnUse" x1="1272" y1="0" x2="1680" y2="0"><stop offset="0.000" stop-color="#004fff"/><stop offset="0.078" stop-color="#0745ff"/><stop offset="0.260" stop-color="#a126ff"/><stop offset="0.348" stop-color="#ff13fe"/><stop offset="0.441" stop-color="#ff00ad"/><stop offset="0.593" stop-color="#ff0067"/><stop offset="0.858" stop-color="#ff002d"/><stop offset="1.000" stop-color="#ff001c"/></linearGradient><linearGradient id="c172" gradientUnits="userSpaceOnUse" x1="1272" y1="0" x2="1680" y2="0"><stop offset="0.000" stop-color="#004aff"/><stop offset="0.074" stop-color="#0540ff"/><stop offset="0.260" stop-color="#a220ff"/><stop offset="0.353" stop-color="#ff0cf9"/><stop offset="0.451" stop-color="#ff00a8"/><stop offset="0.608" stop-color="#ff0064"/><stop offset="0.887" stop-color="#ff002b"/><stop offset="1.000" stop-color="#ff001d"/></linearGradient><linearGradient id="c173" gradientUnits="userSpaceOnUse" x1="1272" y1="0" x2="1680" y2="0"><stop offset="0.000" stop-color="#0045ff"/><stop offset="0.069" stop-color="#043bff"/><stop offset="0.255" stop-color="#9e1cff"/><stop offset="0.353" stop-color="#ff06fa"/><stop offset="0.451" stop-color="#ff00a9"/><stop offset="0.608" stop-color="#ff0065"/><stop offset="0.887" stop-color="#ff002c"/><stop offset="1.000" stop-color="#ff001e"/></linearGradient><linearGradient id="c174" gradientUnits="userSpaceOnUse" x1="1272" y1="0" x2="1680" y2="0"><stop offset="0.000" stop-color="#0040ff"/><stop offset="0.069" stop-color="#0736ff"/><stop offset="0.260" stop-color="#a315ff"/><stop offset="0.353" stop-color="#ff01fa"/><stop offset="0.451" stop-color="#ff00ab"/><stop offset="0.608" stop-color="#ff0066"/><stop offset="0.887" stop-color="#ff002d"/><stop offset="1.000" stop-color="#ff001f"/></linearGradient><linearGradient id="c175" gradientUnits="userSpaceOnUse" x1="1272" y1="0" x2="1680" y2="0"><stop offset="0.000" stop-color="#003bff"/><stop offset="0.064" stop-color="#0632ff"/><stop offset="0.255" stop-color="#a011ff"/><stop offset="0.353" stop-color="#ff00fb"/><stop offset="0.451" stop-color="#ff00ac"/><stop offset="0.613" stop-color="#ff0066"/><stop offset="0.897" stop-color="#ff002d"/><stop offset="1.000" stop-color="#ff0020"/></linearGradient><linearGradient id="c176" gradientUnits="userSpaceOnUse" x1="1272" y1="0" x2="1680" y2="0"><stop offset="0.000" stop-color="#0036ff"/><stop offset="0.059" stop-color="#052eff"/><stop offset="0.255" stop-color="#a00cff"/><stop offset="0.353" stop-color="#ff00fc"/><stop offset="0.456" stop-color="#ff00aa"/><stop offset="0.623" stop-color="#ff0065"/><stop offset="0.917" stop-color="#ff002b"/><stop offset="1.000" stop-color="#ff0021"/></linearGradient><linearGradient id="c177" gradientUnits="userSpaceOnUse" x1="1272" y1="0" x2="1680" y2="0"><stop offset="0.000" stop-color="#0032ff"/><stop offset="0.059" stop-color="#0729ff"/><stop offset="0.255" stop-color="#a106ff"/><stop offset="0.353" stop-color="#ff00fc"/><stop offset="0.456" stop-color="#ff00ab"/><stop offset="0.623" stop-color="#ff0066"/><stop offset="0.917" stop-color="#ff002c"/><stop offset="1.000" stop-color="#ff0022"/></linearGradient><linearGradient id="c178" gradientUnits="userSpaceOnUse" x1="1272" y1="0" x2="1680" y2="0"><stop offset="0.000" stop-color="#002dff"/><stop offset="0.054" stop-color="#0625ff"/><stop offset="0.255" stop-color="#a202ff"/><stop offset="0.353" stop-color="#ff00fd"/><stop offset="0.456" stop-color="#ff00ad"/><stop offset="0.623" stop-color="#ff0067"/><stop offset="0.917" stop-color="#ff002d"/><stop offset="1.000" stop-color="#ff0023"/></linearGradient><linearGradient id="c179" gradientUnits="userSpaceOnUse" x1="1272" y1="0" x2="1680" y2="0"><stop offset="0.000" stop-color="#0029ff"/><stop offset="0.049" stop-color="#0521ff"/><stop offset="0.255" stop-color="#a200ff"/><stop offset="0.358" stop-color="#ff00f9"/><stop offset="0.466" stop-color="#ff00a8"/><stop offset="0.637" stop-color="#ff0064"/><stop offset="0.946" stop-color="#ff002b"/><stop offset="1.000" stop-color="#ff0025"/></linearGradient><linearGradient id="c180" gradientUnits="userSpaceOnUse" x1="1272" y1="0" x2="1680" y2="0"><stop offset="0.000" stop-color="#0024ff"/><stop offset="0.049" stop-color="#081dff"/><stop offset="0.255" stop-color="#a300ff"/><stop offset="0.358" stop-color="#ff00f9"/><stop offset="0.466" stop-color="#ff00a9"/><stop offset="0.642" stop-color="#ff0064"/><stop offset="0.956" stop-color="#ff002b"/><stop offset="1.000" stop-color="#ff0026"/></linearGradient><linearGradient id="c181" gradientUnits="userSpaceOnUse" x1="1272" y1="0" x2="1680" y2="0"><stop offset="0.000" stop-color="#0020ff"/><stop offset="0.044" stop-color="#0719ff"/><stop offset="0.235" stop-color="#9300ff"/><stop offset="0.358" stop-color="#ff00fa"/><stop offset="0.466" stop-color="#ff00ab"/><stop offset="0.642" stop-color="#ff0065"/><stop offset="0.956" stop-color="#ff002c"/><stop offset="1.000" stop-color="#ff0027"/></linearGradient><linearGradient id="c182" gradientUnits="userSpaceOnUse" x1="1272" y1="0" x2="1680" y2="0"><stop offset="0.000" stop-color="#001cff"/><stop offset="0.044" stop-color="#0915ff"/><stop offset="0.216" stop-color="#8300ff"/><stop offset="0.358" stop-color="#ff00fb"/><stop offset="0.466" stop-color="#ff00ac"/><stop offset="0.642" stop-color="#ff0067"/><stop offset="0.956" stop-color="#ff002d"/><stop offset="1.000" stop-color="#ff0028"/></linearGradient><linearGradient id="c183" gradientUnits="userSpaceOnUse" x1="1272" y1="0" x2="1680" y2="0"><stop offset="0.000" stop-color="#0018ff"/><stop offset="0.039" stop-color="#0812ff"/><stop offset="0.201" stop-color="#7900ff"/><stop offset="0.358" stop-color="#ff00fb"/><stop offset="0.471" stop-color="#ff00aa"/><stop offset="0.652" stop-color="#ff0065"/><stop offset="0.975" stop-color="#ff002b"/><stop offset="1.000" stop-color="#ff0029"/></linearGradient><linearGradient id="c184" gradientUnits="userSpaceOnUse" x1="1272" y1="0" x2="1680" y2="0"><stop offset="0.000" stop-color="#0014ff"/><stop offset="0.039" stop-color="#0a0eff"/><stop offset="0.186" stop-color="#6f00ff"/><stop offset="0.358" stop-color="#ff00fc"/><stop offset="0.471" stop-color="#ff00ab"/><stop offset="0.652" stop-color="#ff0066"/><stop offset="0.975" stop-color="#ff002c"/><stop offset="1.000" stop-color="#ff002a"/></linearGradient><linearGradient id="c185" gradientUnits="userSpaceOnUse" x1="1272" y1="0" x2="1680" y2="0"><stop offset="0.000" stop-color="#0010ff"/><stop offset="0.039" stop-color="#0c0aff"/><stop offset="0.191" stop-color="#7300ff"/><stop offset="0.358" stop-color="#ff00fd"/><stop offset="0.471" stop-color="#ff00ac"/><stop offset="0.652" stop-color="#ff0067"/><stop offset="0.975" stop-color="#ff002d"/><stop offset="1.000" stop-color="#ff002b"/></linearGradient><linearGradient id="c186" gradientUnits="userSpaceOnUse" x1="1272" y1="0" x2="1680" y2="0"><stop offset="0.000" stop-color="#000cff"/><stop offset="0.044" stop-color="#1105ff"/><stop offset="0.265" stop-color="#ae00ff"/><stop offset="0.363" stop-color="#ff00f9"/><stop offset="0.480" stop-color="#ff00a8"/><stop offset="0.672" stop-color="#ff0063"/><stop offset="1.000" stop-color="#ff002b"/></linearGradient><linearGradient id="c187" gradientUnits="userSpaceOnUse" x1="1272" y1="0" x2="1680" y2="0"><stop offset="0.000" stop-color="#0008ff"/><stop offset="0.078" stop-color="#2800ff"/><stop offset="0.294" stop-color="#c700ff"/><stop offset="0.363" stop-color="#ff00f9"/><stop offset="0.480" stop-color="#ff00aa"/><stop offset="0.672" stop-color="#ff0065"/><stop offset="1.000" stop-color="#ff002c"/></linearGradient><linearGradient id="c188" gradientUnits="userSpaceOnUse" x1="1272" y1="0" x2="1680" y2="0"><stop offset="0.000" stop-color="#0004ff"/><stop offset="0.176" stop-color="#6c00ff"/><stop offset="0.363" stop-color="#ff00fa"/><stop offset="0.480" stop-color="#ff00ab"/><stop offset="0.672" stop-color="#ff0066"/><stop offset="1.000" stop-color="#ff002d"/></linearGradient><linearGradient id="c189" gradientUnits="userSpaceOnUse" x1="1272" y1="0" x2="1680" y2="0"><stop offset="0.000" stop-color="#0001ff"/><stop offset="0.211" stop-color="#8600ff"/><stop offset="0.363" stop-color="#ff00fa"/><stop offset="0.485" stop-color="#ff00a9"/><stop offset="0.681" stop-color="#ff0064"/><stop offset="1.000" stop-color="#ff002e"/></linearGradient><clipPath id="inset"><rect x="1601" y="154.5" width="233" height="196.0"/></clipPath><clipPath id="insetbr"><path d="M1601 175.4 L1834 328.4 L1834 350.5 L1601 350.5 Z"/></clipPath><linearGradient id="c190" gradientUnits="userSpaceOnUse" x1="1601" y1="0" x2="1835" y2="0"><stop offset="0.000" stop-color="#559900"/><stop offset="0.838" stop-color="#999400"/><stop offset="1.000" stop-color="#998700"/></linearGradient><linearGradient id="c191" gradientUnits="userSpaceOnUse" x1="1601" y1="0" x2="1835" y2="0"><stop offset="0.000" stop-color="#569900"/><stop offset="0.829" stop-color="#999400"/><stop offset="1.000" stop-color="#998500"/></linearGradient><linearGradient id="c192" gradientUnits="userSpaceOnUse" x1="1601" y1="0" x2="1835" y2="0"><stop offset="0.000" stop-color="#579900"/><stop offset="0.812" stop-color="#999400"/><stop offset="1.000" stop-color="#998400"/></linearGradient><linearGradient id="c193" gradientUnits="userSpaceOnUse" x1="1601" y1="0" x2="1835" y2="0"><stop offset="0.000" stop-color="#589900"/><stop offset="0.795" stop-color="#999400"/><stop offset="1.000" stop-color="#998300"/></linearGradient><linearGradient id="c194" gradientUnits="userSpaceOnUse" x1="1601" y1="0" x2="1835" y2="0"><stop offset="0.000" stop-color="#599900"/><stop offset="0.778" stop-color="#999400"/><stop offset="1.000" stop-color="#998100"/></linearGradient><linearGradient id="c195" gradientUnits="userSpaceOnUse" x1="1601" y1="0" x2="1835" y2="0"><stop offset="0.000" stop-color="#5a9901"/><stop offset="0.761" stop-color="#999400"/><stop offset="1.000" stop-color="#998000"/></linearGradient><linearGradient id="c196" gradientUnits="userSpaceOnUse" x1="1601" y1="0" x2="1835" y2="0"><stop offset="0.000" stop-color="#5b9901"/><stop offset="0.744" stop-color="#999400"/><stop offset="1.000" stop-color="#997f00"/></linearGradient><linearGradient id="c197" gradientUnits="userSpaceOnUse" x1="1601" y1="0" x2="1835" y2="0"><stop offset="0.000" stop-color="#5c9902"/><stop offset="0.726" stop-color="#999400"/><stop offset="1.000" stop-color="#997e00"/></linearGradient><linearGradient id="c198" gradientUnits="userSpaceOnUse" x1="1601" y1="0" x2="1835" y2="0"><stop offset="0.000" stop-color="#5d9903"/><stop offset="0.718" stop-color="#999400"/><stop offset="1.000" stop-color="#997c00"/></linearGradient><linearGradient id="c199" gradientUnits="userSpaceOnUse" x1="1601" y1="0" x2="1835" y2="0"><stop offset="0.000" stop-color="#5e9903"/><stop offset="0.701" stop-color="#999400"/><stop offset="1.000" stop-color="#997b00"/></linearGradient><linearGradient id="c200" gradientUnits="userSpaceOnUse" x1="1601" y1="0" x2="1835" y2="0"><stop offset="0.000" stop-color="#5f9904"/><stop offset="0.684" stop-color="#999400"/><stop offset="1.000" stop-color="#997a00"/></linearGradient><linearGradient id="c201" gradientUnits="userSpaceOnUse" x1="1601" y1="0" x2="1835" y2="0"><stop offset="0.000" stop-color="#609905"/><stop offset="0.667" stop-color="#999400"/><stop offset="1.000" stop-color="#997900"/></linearGradient><linearGradient id="c202" gradientUnits="userSpaceOnUse" x1="1601" y1="0" x2="1835" y2="0"><stop offset="0.000" stop-color="#619905"/><stop offset="0.650" stop-color="#999400"/><stop offset="1.000" stop-color="#997800"/></linearGradient><linearGradient id="c203" gradientUnits="userSpaceOnUse" x1="1601" y1="0" x2="1835" y2="0"><stop offset="0.000" stop-color="#629906"/><stop offset="0.632" stop-color="#999400"/><stop offset="1.000" stop-color="#997600"/></linearGradient><linearGradient id="c204" gradientUnits="userSpaceOnUse" x1="1601" y1="0" x2="1835" y2="0"><stop offset="0.000" stop-color="#639907"/><stop offset="0.624" stop-color="#999400"/><stop offset="1.000" stop-color="#997500"/></linearGradient><linearGradient id="c205" gradientUnits="userSpaceOnUse" x1="1601" y1="0" x2="1835" y2="0"><stop offset="0.000" stop-color="#659907"/><stop offset="0.607" stop-color="#999400"/><stop offset="1.000" stop-color="#997400"/></linearGradient><linearGradient id="c206" gradientUnits="userSpaceOnUse" x1="1601" y1="0" x2="1835" y2="0"><stop offset="0.000" stop-color="#669908"/><stop offset="0.590" stop-color="#999400"/><stop offset="1.000" stop-color="#997300"/></linearGradient><linearGradient id="c207" gradientUnits="userSpaceOnUse" x1="1601" y1="0" x2="1835" y2="0"><stop offset="0.000" stop-color="#679909"/><stop offset="0.573" stop-color="#999400"/><stop offset="1.000" stop-color="#997200"/></linearGradient><linearGradient id="c208" gradientUnits="userSpaceOnUse" x1="1601" y1="0" x2="1835" y2="0"><stop offset="0.000" stop-color="#68990a"/><stop offset="0.556" stop-color="#999400"/><stop offset="1.000" stop-color="#997000"/></linearGradient><linearGradient id="c209" gradientUnits="userSpaceOnUse" x1="1601" y1="0" x2="1835" y2="0"><stop offset="0.000" stop-color="#69990a"/><stop offset="0.538" stop-color="#999400"/><stop offset="1.000" stop-color="#996f00"/></linearGradient><linearGradient id="c210" gradientUnits="userSpaceOnUse" x1="1601" y1="0" x2="1835" y2="0"><stop offset="0.000" stop-color="#6b990b"/><stop offset="0.530" stop-color="#999300"/><stop offset="1.000" stop-color="#996e00"/></linearGradient><linearGradient id="c211" gradientUnits="userSpaceOnUse" x1="1601" y1="0" x2="1835" y2="0"><stop offset="0.000" stop-color="#6c990c"/><stop offset="0.513" stop-color="#999401"/><stop offset="1.000" stop-color="#996d00"/></linearGradient><linearGradient id="c212" gradientUnits="userSpaceOnUse" x1="1601" y1="0" x2="1835" y2="0"><stop offset="0.000" stop-color="#6d990c"/><stop offset="0.496" stop-color="#999402"/><stop offset="1.000" stop-color="#996c00"/></linearGradient><linearGradient id="c213" gradientUnits="userSpaceOnUse" x1="1601" y1="0" x2="1835" y2="0"><stop offset="0.000" stop-color="#6e990d"/><stop offset="0.479" stop-color="#999403"/><stop offset="1.000" stop-color="#996b00"/></linearGradient><linearGradient id="c214" gradientUnits="userSpaceOnUse" x1="1601" y1="0" x2="1835" y2="0"><stop offset="0.000" stop-color="#70990e"/><stop offset="0.462" stop-color="#999404"/><stop offset="1.000" stop-color="#996a00"/></linearGradient><linearGradient id="c215" gradientUnits="userSpaceOnUse" x1="1601" y1="0" x2="1835" y2="0"><stop offset="0.000" stop-color="#71990f"/><stop offset="0.444" stop-color="#999405"/><stop offset="1.000" stop-color="#996900"/></linearGradient><linearGradient id="c216" gradientUnits="userSpaceOnUse" x1="1601" y1="0" x2="1835" y2="0"><stop offset="0.000" stop-color="#729910"/><stop offset="0.436" stop-color="#999306"/><stop offset="1.000" stop-color="#996700"/></linearGradient><linearGradient id="c217" gradientUnits="userSpaceOnUse" x1="1601" y1="0" x2="1835" y2="0"><stop offset="0.000" stop-color="#749910"/><stop offset="0.419" stop-color="#999308"/><stop offset="1.000" stop-color="#996600"/></linearGradient><linearGradient id="c218" gradientUnits="userSpaceOnUse" x1="1601" y1="0" x2="1835" y2="0"><stop offset="0.000" stop-color="#759911"/><stop offset="0.402" stop-color="#999409"/><stop offset="1.000" stop-color="#996500"/></linearGradient><linearGradient id="c219" gradientUnits="userSpaceOnUse" x1="1601" y1="0" x2="1835" y2="0"><stop offset="0.000" stop-color="#769912"/><stop offset="0.385" stop-color="#99940a"/><stop offset="1.000" stop-color="#996400"/></linearGradient><linearGradient id="c220" gradientUnits="userSpaceOnUse" x1="1601" y1="0" x2="1835" y2="0"><stop offset="0.000" stop-color="#789913"/><stop offset="0.368" stop-color="#99940b"/><stop offset="1.000" stop-color="#996300"/></linearGradient><linearGradient id="c221" gradientUnits="userSpaceOnUse" x1="1601" y1="0" x2="1835" y2="0"><stop offset="0.000" stop-color="#799914"/><stop offset="0.359" stop-color="#99930c"/><stop offset="1.000" stop-color="#996200"/></linearGradient><linearGradient id="c222" gradientUnits="userSpaceOnUse" x1="1601" y1="0" x2="1835" y2="0"><stop offset="0.000" stop-color="#7b9915"/><stop offset="0.342" stop-color="#99930d"/><stop offset="1.000" stop-color="#996100"/></linearGradient><linearGradient id="c223" gradientUnits="userSpaceOnUse" x1="1601" y1="0" x2="1835" y2="0"><stop offset="0.000" stop-color="#7c9915"/><stop offset="0.325" stop-color="#99930e"/><stop offset="1.000" stop-color="#996000"/></linearGradient><linearGradient id="c224" gradientUnits="userSpaceOnUse" x1="1601" y1="0" x2="1835" y2="0"><stop offset="0.000" stop-color="#7d9916"/><stop offset="0.308" stop-color="#999310"/><stop offset="1.000" stop-color="#995f00"/></linearGradient><linearGradient id="c225" gradientUnits="userSpaceOnUse" x1="1601" y1="0" x2="1835" y2="0"><stop offset="0.000" stop-color="#7f9917"/><stop offset="0.291" stop-color="#999411"/><stop offset="1.000" stop-color="#995e00"/></linearGradient><linearGradient id="c226" gradientUnits="userSpaceOnUse" x1="1601" y1="0" x2="1835" y2="0"><stop offset="0.000" stop-color="#819918"/><stop offset="0.282" stop-color="#999312"/><stop offset="1.000" stop-color="#995d01"/></linearGradient><linearGradient id="c227" gradientUnits="userSpaceOnUse" x1="1601" y1="0" x2="1835" y2="0"><stop offset="0.000" stop-color="#829919"/><stop offset="0.265" stop-color="#999313"/><stop offset="1.000" stop-color="#995c01"/></linearGradient><linearGradient id="c228" gradientUnits="userSpaceOnUse" x1="1601" y1="0" x2="1835" y2="0"><stop offset="0.000" stop-color="#84991a"/><stop offset="0.248" stop-color="#999314"/><stop offset="0.991" stop-color="#995b02"/><stop offset="1.000" stop-color="#995b02"/></linearGradient><linearGradient id="c229" gradientUnits="userSpaceOnUse" x1="1601" y1="0" x2="1835" y2="0"><stop offset="0.000" stop-color="#85991b"/><stop offset="0.239" stop-color="#999215"/><stop offset="0.991" stop-color="#995a03"/><stop offset="1.000" stop-color="#995a02"/></linearGradient><linearGradient id="c230" gradientUnits="userSpaceOnUse" x1="1601" y1="0" x2="1835" y2="0"><stop offset="0.000" stop-color="#8dff00"/><stop offset="0.812" stop-color="#fffb00"/><stop offset="1.000" stop-color="#ffe000"/></linearGradient><linearGradient id="c231" gradientUnits="userSpaceOnUse" x1="1601" y1="0" x2="1835" y2="0"><stop offset="0.000" stop-color="#8fff00"/><stop offset="0.803" stop-color="#fffa00"/><stop offset="1.000" stop-color="#ffde00"/></linearGradient><linearGradient id="c232" gradientUnits="userSpaceOnUse" x1="1601" y1="0" x2="1835" y2="0"><stop offset="0.000" stop-color="#90ff00"/><stop offset="0.786" stop-color="#fffa00"/><stop offset="1.000" stop-color="#ffdc00"/></linearGradient><linearGradient id="c233" gradientUnits="userSpaceOnUse" x1="1601" y1="0" x2="1835" y2="0"><stop offset="0.000" stop-color="#92ff00"/><stop offset="0.769" stop-color="#fffa00"/><stop offset="1.000" stop-color="#ffda00"/></linearGradient><linearGradient id="c234" gradientUnits="userSpaceOnUse" x1="1601" y1="0" x2="1835" y2="0"><stop offset="0.000" stop-color="#94ff00"/><stop offset="0.752" stop-color="#fffb00"/><stop offset="1.000" stop-color="#ffd800"/></linearGradient><linearGradient id="c235" gradientUnits="userSpaceOnUse" x1="1601" y1="0" x2="1835" y2="0"><stop offset="0.000" stop-color="#95ff01"/><stop offset="0.735" stop-color="#fffb00"/><stop offset="1.000" stop-color="#ffd600"/></linearGradient><linearGradient id="c236" gradientUnits="userSpaceOnUse" x1="1601" y1="0" x2="1835" y2="0"><stop offset="0.000" stop-color="#97ff02"/><stop offset="0.718" stop-color="#fffb00"/><stop offset="1.000" stop-color="#ffd300"/></linearGradient><linearGradient id="c237" gradientUnits="userSpaceOnUse" x1="1601" y1="0" x2="1835" y2="0"><stop offset="0.000" stop-color="#99ff03"/><stop offset="0.709" stop-color="#fffa00"/><stop offset="1.000" stop-color="#ffd100"/></linearGradient><linearGradient id="c238" gradientUnits="userSpaceOnUse" x1="1601" y1="0" x2="1835" y2="0"><stop offset="0.000" stop-color="#9bff05"/><stop offset="0.692" stop-color="#fffa00"/><stop offset="1.000" stop-color="#ffcf00"/></linearGradient><linearGradient id="c239" gradientUnits="userSpaceOnUse" x1="1601" y1="0" x2="1835" y2="0"><stop offset="0.000" stop-color="#9cff06"/><stop offset="0.675" stop-color="#fffa00"/><stop offset="1.000" stop-color="#ffcd00"/></linearGradient><linearGradient id="c240" gradientUnits="userSpaceOnUse" x1="1601" y1="0" x2="1835" y2="0"><stop offset="0.000" stop-color="#9eff07"/><stop offset="0.658" stop-color="#fffb00"/><stop offset="1.000" stop-color="#ffcb00"/></linearGradient><linearGradient id="c241" gradientUnits="userSpaceOnUse" x1="1601" y1="0" x2="1835" y2="0"><stop offset="0.000" stop-color="#a0ff08"/><stop offset="0.641" stop-color="#fffb00"/><stop offset="1.000" stop-color="#ffc900"/></linearGradient><linearGradient id="c242" gradientUnits="userSpaceOnUse" x1="1601" y1="0" x2="1835" y2="0"><stop offset="0.000" stop-color="#a2ff09"/><stop offset="0.624" stop-color="#fffb00"/><stop offset="1.000" stop-color="#ffc700"/></linearGradient><linearGradient id="c243" gradientUnits="userSpaceOnUse" x1="1601" y1="0" x2="1835" y2="0"><stop offset="0.000" stop-color="#a4ff0a"/><stop offset="0.615" stop-color="#fffa00"/><stop offset="1.000" stop-color="#ffc500"/></linearGradient><linearGradient id="c244" gradientUnits="userSpaceOnUse" x1="1601" y1="0" x2="1835" y2="0"><stop offset="0.000" stop-color="#a6ff0b"/><stop offset="0.598" stop-color="#fffa00"/><stop offset="1.000" stop-color="#ffc300"/></linearGradient><linearGradient id="c245" gradientUnits="userSpaceOnUse" x1="1601" y1="0" x2="1835" y2="0"><stop offset="0.000" stop-color="#a8ff0c"/><stop offset="0.581" stop-color="#fffa00"/><stop offset="1.000" stop-color="#ffc100"/></linearGradient><linearGradient id="c246" gradientUnits="userSpaceOnUse" x1="1601" y1="0" x2="1835" y2="0"><stop offset="0.000" stop-color="#aaff0d"/><stop offset="0.564" stop-color="#fffa00"/><stop offset="1.000" stop-color="#ffbf00"/></linearGradient><linearGradient id="c247" gradientUnits="userSpaceOnUse" x1="1601" y1="0" x2="1835" y2="0"><stop offset="0.000" stop-color="#acff0f"/><stop offset="0.547" stop-color="#fffb00"/><stop offset="1.000" stop-color="#ffbd00"/></linearGradient><linearGradient id="c248" gradientUnits="userSpaceOnUse" x1="1601" y1="0" x2="1835" y2="0"><stop offset="0.000" stop-color="#aeff10"/><stop offset="0.530" stop-color="#fffb00"/><stop offset="1.000" stop-color="#ffbb00"/></linearGradient><linearGradient id="c249" gradientUnits="userSpaceOnUse" x1="1601" y1="0" x2="1835" y2="0"><stop offset="0.000" stop-color="#b0ff11"/><stop offset="0.521" stop-color="#fffa00"/><stop offset="1.000" stop-color="#ffba00"/></linearGradient><linearGradient id="c250" gradientUnits="userSpaceOnUse" x1="1601" y1="0" x2="1835" y2="0"><stop offset="0.000" stop-color="#b2ff12"/><stop offset="0.504" stop-color="#fffa01"/><stop offset="1.000" stop-color="#ffb800"/></linearGradient><linearGradient id="c251" gradientUnits="userSpaceOnUse" x1="1601" y1="0" x2="1835" y2="0"><stop offset="0.000" stop-color="#b4ff14"/><stop offset="0.487" stop-color="#fffa03"/><stop offset="1.000" stop-color="#ffb600"/></linearGradient><linearGradient id="c252" gradientUnits="userSpaceOnUse" x1="1601" y1="0" x2="1835" y2="0"><stop offset="0.000" stop-color="#b6ff15"/><stop offset="0.470" stop-color="#fffa05"/><stop offset="1.000" stop-color="#ffb400"/></linearGradient><linearGradient id="c253" gradientUnits="userSpaceOnUse" x1="1601" y1="0" x2="1835" y2="0"><stop offset="0.000" stop-color="#b8ff16"/><stop offset="0.453" stop-color="#fffb06"/><stop offset="1.000" stop-color="#ffb200"/></linearGradient><linearGradient id="c254" gradientUnits="userSpaceOnUse" x1="1601" y1="0" x2="1835" y2="0"><stop offset="0.000" stop-color="#baff17"/><stop offset="0.436" stop-color="#fffb08"/><stop offset="1.000" stop-color="#ffb000"/></linearGradient><linearGradient id="c255" gradientUnits="userSpaceOnUse" x1="1601" y1="0" x2="1835" y2="0"><stop offset="0.000" stop-color="#bcff19"/><stop offset="0.427" stop-color="#fffa0a"/><stop offset="0.966" stop-color="#ffb200"/><stop offset="1.000" stop-color="#ffae00"/></linearGradient><linearGradient id="c256" gradientUnits="userSpaceOnUse" x1="1601" y1="0" x2="1835" y2="0"><stop offset="0.000" stop-color="#beff1a"/><stop offset="0.410" stop-color="#fffa0c"/><stop offset="0.957" stop-color="#ffb100"/><stop offset="1.000" stop-color="#ffac00"/></linearGradient><linearGradient id="c257" gradientUnits="userSpaceOnUse" x1="1601" y1="0" x2="1835" y2="0"><stop offset="0.000" stop-color="#c1ff1b"/><stop offset="0.393" stop-color="#fffa0e"/><stop offset="0.949" stop-color="#ffb000"/><stop offset="1.000" stop-color="#ffaa00"/></linearGradient><linearGradient id="c258" gradientUnits="userSpaceOnUse" x1="1601" y1="0" x2="1835" y2="0"><stop offset="0.000" stop-color="#c3ff1d"/><stop offset="0.376" stop-color="#fffa10"/><stop offset="0.932" stop-color="#ffb000"/><stop offset="1.000" stop-color="#ffa900"/></linearGradient><linearGradient id="c259" gradientUnits="userSpaceOnUse" x1="1601" y1="0" x2="1835" y2="0"><stop offset="0.000" stop-color="#c5ff1e"/><stop offset="0.359" stop-color="#fffb12"/><stop offset="0.906" stop-color="#ffb000"/><stop offset="1.000" stop-color="#ffa700"/></linearGradient><linearGradient id="c260" gradientUnits="userSpaceOnUse" x1="1601" y1="0" x2="1835" y2="0"><stop offset="0.000" stop-color="#c8ff1f"/><stop offset="0.342" stop-color="#fffb14"/><stop offset="0.889" stop-color="#ffb000"/><stop offset="1.000" stop-color="#ffa500"/></linearGradient><linearGradient id="c261" gradientUnits="userSpaceOnUse" x1="1601" y1="0" x2="1835" y2="0"><stop offset="0.000" stop-color="#caff21"/><stop offset="0.333" stop-color="#fff915"/><stop offset="0.880" stop-color="#ffaf00"/><stop offset="1.000" stop-color="#ffa300"/></linearGradient><linearGradient id="c262" gradientUnits="userSpaceOnUse" x1="1601" y1="0" x2="1835" y2="0"><stop offset="0.000" stop-color="#ccff22"/><stop offset="0.316" stop-color="#fffa17"/><stop offset="0.863" stop-color="#ffaf02"/><stop offset="1.000" stop-color="#ffa100"/></linearGradient><linearGradient id="c263" gradientUnits="userSpaceOnUse" x1="1601" y1="0" x2="1835" y2="0"><stop offset="0.000" stop-color="#cfff24"/><stop offset="0.299" stop-color="#fffa19"/><stop offset="0.838" stop-color="#ffb003"/><stop offset="1.000" stop-color="#ffa000"/></linearGradient><linearGradient id="c264" gradientUnits="userSpaceOnUse" x1="1601" y1="0" x2="1835" y2="0"><stop offset="0.000" stop-color="#d1ff25"/><stop offset="0.282" stop-color="#fffa1b"/><stop offset="0.821" stop-color="#ffb005"/><stop offset="1.000" stop-color="#ff9e00"/></linearGradient><linearGradient id="c265" gradientUnits="userSpaceOnUse" x1="1601" y1="0" x2="1835" y2="0"><stop offset="0.000" stop-color="#d4ff27"/><stop offset="0.265" stop-color="#fffa1d"/><stop offset="0.795" stop-color="#ffb007"/><stop offset="1.000" stop-color="#ff9c01"/></linearGradient><linearGradient id="c266" gradientUnits="userSpaceOnUse" x1="1601" y1="0" x2="1835" y2="0"><stop offset="0.000" stop-color="#d6ff28"/><stop offset="0.248" stop-color="#fffb1f"/><stop offset="0.778" stop-color="#ffb008"/><stop offset="1.000" stop-color="#ff9a01"/></linearGradient><linearGradient id="c267" gradientUnits="userSpaceOnUse" x1="1601" y1="0" x2="1835" y2="0"><stop offset="0.000" stop-color="#d9ff2a"/><stop offset="0.239" stop-color="#fff921"/><stop offset="0.769" stop-color="#ffaf09"/><stop offset="1.000" stop-color="#ff9902"/></linearGradient><linearGradient id="c268" gradientUnits="userSpaceOnUse" x1="1601" y1="0" x2="1835" y2="0"><stop offset="0.000" stop-color="#dbff2b"/><stop offset="0.222" stop-color="#fffa23"/><stop offset="0.752" stop-color="#ffaf0b"/><stop offset="1.000" stop-color="#ff9703"/></linearGradient><linearGradient id="c269" gradientUnits="userSpaceOnUse" x1="1601" y1="0" x2="1835" y2="0"><stop offset="0.000" stop-color="#deff2d"/><stop offset="0.205" stop-color="#fffa25"/><stop offset="0.726" stop-color="#ffb00d"/><stop offset="1.000" stop-color="#ff9504"/></linearGradient><linearGradient id="gr" x1="0" y1="0" x2="0" y2="1"><stop offset="0" stop-color="#ff5a5a"/><stop offset="1" stop-color="#ff2c2c"/></linearGradient><linearGradient id="gg" x1="0" y1="0" x2="0" y2="1"><stop offset="0" stop-color="#4aaa4a"/><stop offset="1" stop-color="#2e9a2e"/></linearGradient><linearGradient id="gb" x1="0" y1="0" x2="0" y2="1"><stop offset="0" stop-color="#6060ff"/><stop offset="1" stop-color="#4040f4"/></linearGradient><linearGradient id="ghead" x1="0" y1="0" x2="0" y2="1"><stop offset="0" stop-color="#353535"/><stop offset="0.47" stop-color="#2e2e2e"/><stop offset="0.5" stop-color="#1a1a1a"/><stop offset="1" stop-color="#0c0c0c"/></linearGradient><linearGradient id="gbb" x1="0" y1="0" x2="0" y2="1"><stop offset="0" stop-color="#a2a2a2"/><stop offset="0.55" stop-color="#8a8a8a"/><stop offset="1" stop-color="#5a5a5a"/></linearGradient><linearGradient id="gupc" x1="0" y1="0" x2="0" y2="1"><stop offset="0" stop-color="#6a6a6a"/><stop offset="1" stop-color="#9a9a9a"/></linearGradient><linearGradient id="gband" x1="0" y1="0" x2="0" y2="1"><stop offset="0" stop-color="#484848"/><stop offset="1" stop-color="#262626"/></linearGradient><linearGradient id="gsel" x1="0" y1="0" x2="0" y2="1"><stop offset="0" stop-color="#1a1a1a"/><stop offset="0.4" stop-color="#262626"/><stop offset="1" stop-color="#3a3a3a"/></linearGradient><linearGradient id="gtb" x1="0" y1="0" x2="0" y2="1"><stop offset="0" stop-color="#a8a8a8"/><stop offset="1" stop-color="#707070"/></linearGradient><linearGradient id="gnav" x1="0" y1="0" x2="0" y2="1"><stop offset="0" stop-color="#b0b0b0"/><stop offset="1" stop-color="#7a7a7a"/></linearGradient></defs>
<rect x="0" y="0" width="1920" height="1039" fill="#333333" />
<rect x="0" y="0" width="1920" height="25" fill="#ffffff" />
<rect x="0" y="25" width="1920" height="75" fill="#212121" />
<rect x="0" y="100" width="2" height="867" fill="#262626" />
<g transform="translate(10.6,12.6)"><rect x="-3.1" y="-8.5" width="6.2" height="6.2" fill="#f6c21c" transform="rotate(45 0 -5.4)"/><rect x="-8.5" y="-3.1" width="6.2" height="6.2" fill="#2aa7e2" transform="rotate(45 -5.4 0)"/><rect x="2.3" y="-3.1" width="6.2" height="6.2" fill="#37b34a" transform="rotate(45 5.4 0)"/><rect x="-3.1" y="2.3" width="6.2" height="6.2" fill="#e8336e" transform="rotate(45 0 5.4)"/></g>
<text x="23.5" y="17.5" font-size="13.41" fill="#2e2e2e" textLength="443.5" lengthAdjust="spacingAndGlyphs">Calman 2025 Calman Ultimate for Business 303 Days Remaining  - Untitled</text>
<line x1="1790" y1="12.5" x2="1801" y2="12.5" stroke="#333" stroke-width="1"/>
<rect x="1841.5" y="8.5" width="9" height="9" fill="none" stroke="#333" stroke-width="1"/>
<path d="M1843.5 8.5 V6.5 H1852.5 V15.5 H1850.5" fill="none" stroke="#333" stroke-width="1"/>
<path d="M1895 6.5 L1906.5 18 M1906.5 6.5 L1895 18" stroke="#333" stroke-width="1.1"/>
<path d="M1 26 H206.5 V55.5 Q206.5 59.2 202.8 59.2 H4.7 Q1 59.2 1 55.5 Z" fill="url(#gred)" stroke="#b01010" stroke-width="0.6"/>
<g transform="translate(38.6,41.7) rotate(45)" fill="none" stroke="#f8eaea" stroke-width="2.6"><rect x="-8.2" y="-8.2" width="16.4" height="16.4" rx="2"/><line x1="-8.2" y1="0" x2="8.2" y2="0" stroke-width="1.8"/><line x1="0" y1="-8.2" x2="0" y2="8.2" stroke-width="1.8"/></g>
<g transform="translate(38.6,41.7) rotate(45)" fill="#f8eaea"><rect x="-5.6" y="-5.6" width="4.6" height="4.6"/><rect x="1" y="-5.6" width="4.6" height="4.6"/><rect x="-5.6" y="1" width="4.6" height="4.6"/><rect x="1" y="1" width="4.6" height="4.6"/></g>
<text x="56" y="49.5" font-size="30.5" fill="#fbeeee" stroke="#fbeeee" stroke-width="0.7" textLength="97" lengthAdjust="spacingAndGlyphs" style="font-family:"Liberation Sans", sans-serif">calman</text>
<circle cx="187.3" cy="41.5" r="10.3" fill="url(#gdrop)"/>
<path d="M181.6 38.8 H193 L187.3 45.2 Z" fill="#ffffff"/>
<rect x="214" y="39.6" width="1706" height="5.8" fill="url(#grain)" />
<rect x="-4" y="65" width="34.5" height="31.5" rx="4" fill="url(#gbtn)" stroke="#8a8a8a" stroke-width="1"/>
<circle cx="14.5" cy="80.8" r="10.5" fill="url(#gbtnc)"/>
<path d="M11 74.5 L19 80.8 L11 87.2 Z" fill="#fafafa"/>
<path d="M33.5 100 V69 Q33.5 65.5 37 65.5 H133.5 Q137 65.5 137 69 V100" fill="url(#gtab)" stroke="#585858" stroke-width="1"/>
<line x1="99" y1="66" x2="99" y2="100" stroke="#585858" stroke-width="1.2"/>
<text x="40.0" y="87.9" font-size="13.69" fill="#e8e8e8" textLength="52.2" lengthAdjust="spacingAndGlyphs">History 1</text>
<circle cx="116.9" cy="84.5" r="10" fill="#2e2e2e"/>
<path d="M113 85.5 H121 M117 81.5 V89.5" stroke="#888" stroke-width="1"/>
<path d="M1284 98.8 V68.5 Q1284 65.3 1287 65.3 H1442 Q1445 65.3 1445 68.5 V98.8 Z" fill="url(#gwid)"/>
<rect x="1284" y="65.5" width="7" height="33.3" fill="#22cc22" />
<line x1="1405" y1="66" x2="1405" y2="98.5" stroke="#444" stroke-width="1.2"/>
<text x="1294.0" y="78.2" font-size="11.59" fill="#f0f0f0" textLength="74.0" lengthAdjust="spacingAndGlyphs">X-Rite i1Pro 2</text>
<text x="1294.0" y="94.9" font-size="11.59" fill="#f0f0f0" textLength="62.8" lengthAdjust="spacingAndGlyphs">Direct View</text>
<circle cx="1382.6" cy="82.7" r="10" fill="url(#gdd)"/>
<path d="M1376.6 80.2 H1388.6 L1382.6 86.2 Z" fill="#ffffff"/>
<circle cx="1427.8" cy="82.5" r="14.3" fill="#0a10e8" stroke="#ffffff" stroke-width="1.2"/>
<text x="1427.8" y="86.3" font-size="10.06" fill="#ffffff" text-anchor="middle" textLength="20.0" lengthAdjust="spacingAndGlyphs">237</text>
<path d="M1452 98.8 V68.5 Q1452 65.3 1455 65.3 H1684 Q1687 65.3 1687 68.5 V98.8 Z" fill="url(#gwid)"/>
<rect x="1452" y="65.5" width="7" height="33.3" fill="#22cc22" />
<text x="1462.0" y="78.2" font-size="11.59" fill="#f0f0f0" textLength="192.2" lengthAdjust="spacingAndGlyphs">CalMAN Client 3 Pattern Generator</text>
<circle cx="1668.8" cy="82.7" r="10" fill="url(#gdd)"/>
<path d="M1662.8 80.2 H1674.8 L1668.8 86.2 Z" fill="#ffffff"/>
<path d="M1695 98.8 V68.5 Q1695 65.3 1698 65.3 H1852 Q1855 65.3 1855 68.5 V98.8 Z" fill="url(#gwid)"/>
<rect x="1695" y="65.5" width="7" height="33.3" fill="#e6e61a" />
<text x="1704.0" y="78.2" font-size="11.59" fill="#f0f0f0" textLength="118.8" lengthAdjust="spacingAndGlyphs">Direct Display Control</text>
<circle cx="1837.7" cy="82.7" r="10" fill="url(#gdd)"/>
<path d="M1831.7 80.2 H1843.7 L1837.7 86.2 Z" fill="#ffffff"/>
<rect x="1859.5" y="65" width="37" height="31.5" rx="3" fill="url(#gbtn)" stroke="#999" stroke-width="1"/>
<rect x="1898.5" y="65" width="30" height="31.5" rx="3" fill="url(#gbtn)" stroke="#999" stroke-width="1"/>
<circle cx="1913.5" cy="81" r="9" fill="url(#gbtnc)"/>
<path d="M1916 75.5 V86.5 L1909.5 81 Z" fill="#f0f0f0"/>
<circle cx="1878.3" cy="81" r="10" fill="url(#gbtnc)"/>
<g transform="translate(1878.3,81)" fill="#e0e0e0"><rect x="-1.3" y="-8.2" width="2.6" height="3.6" rx="0.6" transform="rotate(0)"/><rect x="-1.3" y="-8.2" width="2.6" height="3.6" rx="0.6" transform="rotate(45)"/><rect x="-1.3" y="-8.2" width="2.6" height="3.6" rx="0.6" transform="rotate(90)"/><rect x="-1.3" y="-8.2" width="2.6" height="3.6" rx="0.6" transform="rotate(135)"/><rect x="-1.3" y="-8.2" width="2.6" height="3.6" rx="0.6" transform="rotate(180)"/><rect x="-1.3" y="-8.2" width="2.6" height="3.6" rx="0.6" transform="rotate(225)"/><rect x="-1.3" y="-8.2" width="2.6" height="3.6" rx="0.6" transform="rotate(270)"/><rect x="-1.3" y="-8.2" width="2.6" height="3.6" rx="0.6" transform="rotate(315)"/><circle r="5.2" fill="#7a7a7a" stroke="#e0e0e0" stroke-width="2"/></g>
<text x="102.5" y="162.0" font-size="41.90" fill="#f2f2f2" textLength="345.0" lengthAdjust="spacingAndGlyphs">Saturation Sweeps</text>
<rect x="122" y="220.5" width="331.5" height="439.5" fill="#232323" />
<line x1="166.3" y1="220.5" x2="166.3" y2="660.0" stroke="#b0b0b0" stroke-width="1.3"/>
<line x1="210.6" y1="220.5" x2="210.6" y2="660.0" stroke="#b0b0b0" stroke-width="1.3"/>
<line x1="254.9" y1="220.5" x2="254.9" y2="660.0" stroke="#b0b0b0" stroke-width="1.3"/>
<line x1="299.2" y1="220.5" x2="299.2" y2="660.0" stroke="#b0b0b0" stroke-width="1.3"/>
<line x1="343.5" y1="220.5" x2="343.5" y2="660.0" stroke="#b0b0b0" stroke-width="1.3"/>
<line x1="387.8" y1="220.5" x2="387.8" y2="660.0" stroke="#b0b0b0" stroke-width="1.3"/>
<line x1="432.1" y1="220.5" x2="432.1" y2="660.0" stroke="#b0b0b0" stroke-width="1.3"/>
<rect x="122" y="220.5" width="331.5" height="439.5" fill="none" stroke="#b0b0b0" stroke-width="1.5"/>
<line x1="122.0" y1="660.0" x2="122.0" y2="666.0" stroke="#b0b0b0" stroke-width="1.3"/>
<text x="122.0" y="683.5" font-size="14.94" fill="#dcdcdc" text-anchor="middle">0</text>
<line x1="166.3" y1="660.0" x2="166.3" y2="666.0" stroke="#b0b0b0" stroke-width="1.3"/>
<text x="166.3" y="683.5" font-size="14.94" fill="#dcdcdc" text-anchor="middle">2</text>
<line x1="210.6" y1="660.0" x2="210.6" y2="666.0" stroke="#b0b0b0" stroke-width="1.3"/>
<text x="210.6" y="683.5" font-size="14.94" fill="#dcdcdc" text-anchor="middle">4</text>
<line x1="254.9" y1="660.0" x2="254.9" y2="666.0" stroke="#b0b0b0" stroke-width="1.3"/>
<text x="254.9" y="683.5" font-size="14.94" fill="#dcdcdc" text-anchor="middle">6</text>
<line x1="299.2" y1="660.0" x2="299.2" y2="666.0" stroke="#b0b0b0" stroke-width="1.3"/>
<text x="299.2" y="683.5" font-size="14.94" fill="#dcdcdc" text-anchor="middle">8</text>
<line x1="343.5" y1="660.0" x2="343.5" y2="666.0" stroke="#b0b0b0" stroke-width="1.3"/>
<text x="343.5" y="683.5" font-size="14.94" fill="#dcdcdc" text-anchor="middle">10</text>
<line x1="387.8" y1="660.0" x2="387.8" y2="666.0" stroke="#b0b0b0" stroke-width="1.3"/>
<text x="387.8" y="683.5" font-size="14.94" fill="#dcdcdc" text-anchor="middle">12</text>
<line x1="432.1" y1="660.0" x2="432.1" y2="666.0" stroke="#b0b0b0" stroke-width="1.3"/>
<text x="432.1" y="683.5" font-size="14.94" fill="#dcdcdc" text-anchor="middle">14</text>
<line x1="116" y1="220.5" x2="122" y2="220.5" stroke="#b0b0b0" stroke-width="1.3"/>
<line x1="116" y1="293.8" x2="122" y2="293.8" stroke="#b0b0b0" stroke-width="1.3"/>
<line x1="116" y1="367.0" x2="122" y2="367.0" stroke="#b0b0b0" stroke-width="1.3"/>
<line x1="116" y1="440.2" x2="122" y2="440.2" stroke="#b0b0b0" stroke-width="1.3"/>
<line x1="116" y1="513.5" x2="122" y2="513.5" stroke="#b0b0b0" stroke-width="1.3"/>
<line x1="116" y1="586.8" x2="122" y2="586.8" stroke="#b0b0b0" stroke-width="1.3"/>
<line x1="116" y1="660.0" x2="122" y2="660.0" stroke="#b0b0b0" stroke-width="1.3"/>
<text x="120.8" y="262.8" font-size="15.92" fill="#dcdcdc" text-anchor="end" textLength="37.3" lengthAdjust="spacingAndGlyphs">100%</text>
<text x="120.8" y="336.1" font-size="15.92" fill="#dcdcdc" text-anchor="end" textLength="29.0" lengthAdjust="spacingAndGlyphs">80%</text>
<text x="120.8" y="409.3" font-size="15.92" fill="#dcdcdc" text-anchor="end" textLength="29.0" lengthAdjust="spacingAndGlyphs">60%</text>
<text x="120.8" y="482.6" font-size="15.92" fill="#dcdcdc" text-anchor="end" textLength="29.0" lengthAdjust="spacingAndGlyphs">40%</text>
<text x="120.8" y="555.8" font-size="15.92" fill="#dcdcdc" text-anchor="end" textLength="29.0" lengthAdjust="spacingAndGlyphs">20%</text>
<text x="120.8" y="629.1" font-size="15.92" fill="#dcdcdc" text-anchor="end" textLength="25.3" lengthAdjust="spacingAndGlyphs">100</text>
<text x="227.0" y="214.9" font-size="15.08" fill="#dcdcdc" textLength="83.5" lengthAdjust="spacingAndGlyphs">DeltaE 2000</text>
<rect x="122" y="228.1" width="42.0" height="6.6" fill="#c81414" stroke="#000" stroke-width="1.2"/>
<rect x="122" y="228.1" width="42.0" height="6.6" fill="url(#gbh)"/>
<rect x="122" y="236.8" width="23.0" height="6.6" fill="#14b814" stroke="#000" stroke-width="1.2"/>
<rect x="122" y="236.8" width="23.0" height="6.6" fill="url(#gbh)"/>
<rect x="122" y="245.4" width="62.0" height="6.6" fill="#1414c0" stroke="#000" stroke-width="1.2"/>
<rect x="122" y="245.4" width="62.0" height="6.6" fill="url(#gbh)"/>
<rect x="122" y="254.1" width="21.0" height="6.6" fill="#14b8b8" stroke="#000" stroke-width="1.2"/>
<rect x="122" y="254.1" width="21.0" height="6.6" fill="url(#gbh)"/>
<rect x="122" y="262.7" width="20.0" height="6.6" fill="#c014c0" stroke="#000" stroke-width="1.2"/>
<rect x="122" y="262.7" width="20.0" height="6.6" fill="url(#gbh)"/>
<rect x="122" y="271.4" width="20.0" height="6.6" fill="#c0c014" stroke="#000" stroke-width="1.2"/>
<rect x="122" y="271.4" width="20.0" height="6.6" fill="url(#gbh)"/>
<rect x="122" y="301.3" width="45.0" height="6.6" fill="#c84848" stroke="#000" stroke-width="1.2"/>
<rect x="122" y="301.3" width="45.0" height="6.6" fill="url(#gbh)"/>
<rect x="122" y="310.0" width="23.0" height="6.6" fill="#48b848" stroke="#000" stroke-width="1.2"/>
<rect x="122" y="310.0" width="23.0" height="6.6" fill="url(#gbh)"/>
<rect x="122" y="318.7" width="47.0" height="6.6" fill="#4848c0" stroke="#000" stroke-width="1.2"/>
<rect x="122" y="318.7" width="47.0" height="6.6" fill="url(#gbh)"/>
<rect x="122" y="327.3" width="20.0" height="6.6" fill="#48b8b8" stroke="#000" stroke-width="1.2"/>
<rect x="122" y="327.3" width="20.0" height="6.6" fill="url(#gbh)"/>
<rect x="122" y="336.0" width="20.0" height="6.6" fill="#c048c0" stroke="#000" stroke-width="1.2"/>
<rect x="122" y="336.0" width="20.0" height="6.6" fill="url(#gbh)"/>
<rect x="122" y="344.6" width="23.0" height="6.6" fill="#c0c048" stroke="#000" stroke-width="1.2"/>
<rect x="122" y="344.6" width="23.0" height="6.6" fill="url(#gbh)"/>
<rect x="122" y="374.6" width="39.0" height="6.6" fill="#c06060" stroke="#000" stroke-width="1.2"/>
<rect x="122" y="374.6" width="39.0" height="6.6" fill="url(#gbh)"/>
<rect x="122" y="383.3" width="20.0" height="6.6" fill="#60b060" stroke="#000" stroke-width="1.2"/>
<rect x="122" y="383.3" width="20.0" height="6.6" fill="url(#gbh)"/>
<rect x="122" y="391.9" width="23.0" height="6.6" fill="#6666c0" stroke="#000" stroke-width="1.2"/>
<rect x="122" y="391.9" width="23.0" height="6.6" fill="url(#gbh)"/>
<rect x="122" y="400.6" width="17.0" height="6.6" fill="#66b0b0" stroke="#000" stroke-width="1.2"/>
<rect x="122" y="400.6" width="17.0" height="6.6" fill="url(#gbh)"/>
<rect x="122" y="409.2" width="20.0" height="6.6" fill="#c066c0" stroke="#000" stroke-width="1.2"/>
<rect x="122" y="409.2" width="20.0" height="6.6" fill="url(#gbh)"/>
<rect x="122" y="417.9" width="20.0" height="6.6" fill="#b8b866" stroke="#000" stroke-width="1.2"/>
<rect x="122" y="417.9" width="20.0" height="6.6" fill="url(#gbh)"/>
<rect x="122" y="447.8" width="27.0" height="6.6" fill="#b87474" stroke="#000" stroke-width="1.2"/>
<rect x="122" y="447.8" width="27.0" height="6.6" fill="url(#gbh)"/>
<rect x="122" y="456.5" width="16.5" height="6.6" fill="#74b074" stroke="#000" stroke-width="1.2"/>
<rect x="122" y="456.5" width="16.5" height="6.6" fill="url(#gbh)"/>
<rect x="122" y="465.2" width="13.5" height="6.6" fill="#7474c0" stroke="#000" stroke-width="1.2"/>
<rect x="122" y="465.2" width="13.5" height="6.6" fill="url(#gbh)"/>
<rect x="122" y="473.8" width="15.0" height="6.6" fill="#74b0b0" stroke="#000" stroke-width="1.2"/>
<rect x="122" y="473.8" width="15.0" height="6.6" fill="url(#gbh)"/>
<rect x="122" y="482.5" width="18.0" height="6.6" fill="#b874b8" stroke="#000" stroke-width="1.2"/>
<rect x="122" y="482.5" width="18.0" height="6.6" fill="url(#gbh)"/>
<rect x="122" y="491.1" width="15.0" height="6.6" fill="#b0b074" stroke="#000" stroke-width="1.2"/>
<rect x="122" y="491.1" width="15.0" height="6.6" fill="url(#gbh)"/>
<rect x="122" y="521.1" width="21.0" height="6.6" fill="#b88c8c" stroke="#000" stroke-width="1.2"/>
<rect x="122" y="521.1" width="21.0" height="6.6" fill="url(#gbh)"/>
<rect x="122" y="529.8" width="13.5" height="6.6" fill="#8cb08c" stroke="#000" stroke-width="1.2"/>
<rect x="122" y="529.8" width="13.5" height="6.6" fill="url(#gbh)"/>
<rect x="122" y="538.4" width="6.0" height="6.6" fill="#8c8cb8" stroke="#000" stroke-width="1.2"/>
<rect x="122" y="538.4" width="6.0" height="6.6" fill="url(#gbh)"/>
<rect x="122" y="547.1" width="12.5" height="6.6" fill="#8cb0b0" stroke="#000" stroke-width="1.2"/>
<rect x="122" y="547.1" width="12.5" height="6.6" fill="url(#gbh)"/>
<rect x="122" y="555.7" width="15.6" height="6.6" fill="#b88cb8" stroke="#000" stroke-width="1.2"/>
<rect x="122" y="555.7" width="15.6" height="6.6" fill="url(#gbh)"/>
<rect x="122" y="564.4" width="12.5" height="6.6" fill="#b0b08c" stroke="#000" stroke-width="1.2"/>
<rect x="122" y="564.4" width="12.5" height="6.6" fill="url(#gbh)"/>
<rect x="122" y="646.2" width="12" height="6.6" fill="#ececec" stroke="#000" stroke-width="1.2"/>
<rect x="510.5" y="149" width="153.5" height="336" fill="#232323" />
<line x1="510.5" y1="205.0" x2="664.0" y2="205.0" stroke="#b0b0b0" stroke-width="1.3"/>
<line x1="510.5" y1="261.0" x2="664.0" y2="261.0" stroke="#b0b0b0" stroke-width="1.3"/>
<line x1="510.5" y1="317.0" x2="664.0" y2="317.0" stroke="#b0b0b0" stroke-width="1.3"/>
<line x1="510.5" y1="373.0" x2="664.0" y2="373.0" stroke="#b0b0b0" stroke-width="1.3"/>
<line x1="510.5" y1="429.0" x2="664.0" y2="429.0" stroke="#b0b0b0" stroke-width="1.3"/>
<rect x="510.5" y="149" width="153.5" height="336" fill="none" stroke="#b0b0b0" stroke-width="1.5"/>
<line x1="503.5" y1="149.0" x2="510.5" y2="149.0" stroke="#b0b0b0" stroke-width="1.3"/>
<text x="503.0" y="154.3" font-size="14.66" fill="#dcdcdc" text-anchor="end">15</text>
<line x1="503.5" y1="205.0" x2="510.5" y2="205.0" stroke="#b0b0b0" stroke-width="1.3"/>
<text x="503.0" y="210.3" font-size="14.66" fill="#dcdcdc" text-anchor="end">10</text>
<line x1="503.5" y1="261.0" x2="510.5" y2="261.0" stroke="#b0b0b0" stroke-width="1.3"/>
<text x="503.0" y="266.3" font-size="14.66" fill="#dcdcdc" text-anchor="end">5</text>
<line x1="503.5" y1="317.0" x2="510.5" y2="317.0" stroke="#b0b0b0" stroke-width="1.3"/>
<text x="503.0" y="322.3" font-size="14.66" fill="#dcdcdc" text-anchor="end">0</text>
<line x1="503.5" y1="373.0" x2="510.5" y2="373.0" stroke="#b0b0b0" stroke-width="1.3"/>
<text x="503.0" y="378.3" font-size="14.66" fill="#dcdcdc" text-anchor="end">-5</text>
<line x1="503.5" y1="429.0" x2="510.5" y2="429.0" stroke="#b0b0b0" stroke-width="1.3"/>
<text x="503.0" y="434.3" font-size="14.66" fill="#dcdcdc" text-anchor="end">-10</text>
<line x1="503.5" y1="485.0" x2="510.5" y2="485.0" stroke="#b0b0b0" stroke-width="1.3"/>
<text x="503.0" y="490.3" font-size="14.66" fill="#dcdcdc" text-anchor="end">-15</text>
<line x1="510.5" y1="485" x2="510.5" y2="491" stroke="#b0b0b0" stroke-width="1.3"/>
<line x1="664.0" y1="485" x2="664.0" y2="491" stroke="#b0b0b0" stroke-width="1.3"/>
<text x="573.4" y="143.0" font-size="15.64" fill="#dcdcdc" text-anchor="middle" textLength="47.8" lengthAdjust="spacingAndGlyphs">Delta L</text>
<text x="587.0" y="502.0" font-size="14.66" fill="#dcdcdc" text-anchor="middle">100%</text>
<rect x="721" y="149" width="153.5" height="336" fill="#232323" />
<line x1="721" y1="205.0" x2="874.5" y2="205.0" stroke="#b0b0b0" stroke-width="1.3"/>
<line x1="721" y1="261.0" x2="874.5" y2="261.0" stroke="#b0b0b0" stroke-width="1.3"/>
<line x1="721" y1="317.0" x2="874.5" y2="317.0" stroke="#b0b0b0" stroke-width="1.3"/>
<line x1="721" y1="373.0" x2="874.5" y2="373.0" stroke="#b0b0b0" stroke-width="1.3"/>
<line x1="721" y1="429.0" x2="874.5" y2="429.0" stroke="#b0b0b0" stroke-width="1.3"/>
<rect x="721" y="149" width="153.5" height="336" fill="none" stroke="#b0b0b0" stroke-width="1.5"/>
<line x1="714" y1="149.0" x2="721" y2="149.0" stroke="#b0b0b0" stroke-width="1.3"/>
<text x="713.5" y="154.3" font-size="14.66" fill="#dcdcdc" text-anchor="end">15</text>
<line x1="714" y1="205.0" x2="721" y2="205.0" stroke="#b0b0b0" stroke-width="1.3"/>
<text x="713.5" y="210.3" font-size="14.66" fill="#dcdcdc" text-anchor="end">10</text>
<line x1="714" y1="261.0" x2="721" y2="261.0" stroke="#b0b0b0" stroke-width="1.3"/>
<text x="713.5" y="266.3" font-size="14.66" fill="#dcdcdc" text-anchor="end">5</text>
<line x1="714" y1="317.0" x2="721" y2="317.0" stroke="#b0b0b0" stroke-width="1.3"/>
<text x="713.5" y="322.3" font-size="14.66" fill="#dcdcdc" text-anchor="end">0</text>
<line x1="714" y1="373.0" x2="721" y2="373.0" stroke="#b0b0b0" stroke-width="1.3"/>
<text x="713.5" y="378.3" font-size="14.66" fill="#dcdcdc" text-anchor="end">-5</text>
<line x1="714" y1="429.0" x2="721" y2="429.0" stroke="#b0b0b0" stroke-width="1.3"/>
<text x="713.5" y="434.3" font-size="14.66" fill="#dcdcdc" text-anchor="end">-10</text>
<line x1="714" y1="485.0" x2="721" y2="485.0" stroke="#b0b0b0" stroke-width="1.3"/>
<text x="713.5" y="490.3" font-size="14.66" fill="#dcdcdc" text-anchor="end">-15</text>
<line x1="721" y1="485" x2="721" y2="491" stroke="#b0b0b0" stroke-width="1.3"/>
<line x1="874.5" y1="485" x2="874.5" y2="491" stroke="#b0b0b0" stroke-width="1.3"/>
<text x="783.9" y="143.0" font-size="15.64" fill="#dcdcdc" text-anchor="middle" textLength="49.0" lengthAdjust="spacingAndGlyphs">Delta C</text>
<text x="797.5" y="502.0" font-size="14.66" fill="#dcdcdc" text-anchor="middle">100%</text>
<rect x="930.5" y="149" width="153.5" height="336" fill="#232323" />
<line x1="930.5" y1="205.0" x2="1084.0" y2="205.0" stroke="#b0b0b0" stroke-width="1.3"/>
<line x1="930.5" y1="261.0" x2="1084.0" y2="261.0" stroke="#b0b0b0" stroke-width="1.3"/>
<line x1="930.5" y1="317.0" x2="1084.0" y2="317.0" stroke="#b0b0b0" stroke-width="1.3"/>
<line x1="930.5" y1="373.0" x2="1084.0" y2="373.0" stroke="#b0b0b0" stroke-width="1.3"/>
<line x1="930.5" y1="429.0" x2="1084.0" y2="429.0" stroke="#b0b0b0" stroke-width="1.3"/>
<rect x="930.5" y="149" width="153.5" height="336" fill="none" stroke="#b0b0b0" stroke-width="1.5"/>
<line x1="923.5" y1="149.0" x2="930.5" y2="149.0" stroke="#b0b0b0" stroke-width="1.3"/>
<text x="923.0" y="154.3" font-size="14.66" fill="#dcdcdc" text-anchor="end">15</text>
<line x1="923.5" y1="205.0" x2="930.5" y2="205.0" stroke="#b0b0b0" stroke-width="1.3"/>
<text x="923.0" y="210.3" font-size="14.66" fill="#dcdcdc" text-anchor="end">10</text>
<line x1="923.5" y1="261.0" x2="930.5" y2="261.0" stroke="#b0b0b0" stroke-width="1.3"/>
<text x="923.0" y="266.3" font-size="14.66" fill="#dcdcdc" text-anchor="end">5</text>
<line x1="923.5" y1="317.0" x2="930.5" y2="317.0" stroke="#b0b0b0" stroke-width="1.3"/>
<text x="923.0" y="322.3" font-size="14.66" fill="#dcdcdc" text-anchor="end">0</text>
<line x1="923.5" y1="373.0" x2="930.5" y2="373.0" stroke="#b0b0b0" stroke-width="1.3"/>
<text x="923.0" y="378.3" font-size="14.66" fill="#dcdcdc" text-anchor="end">-5</text>
<line x1="923.5" y1="429.0" x2="930.5" y2="429.0" stroke="#b0b0b0" stroke-width="1.3"/>
<text x="923.0" y="434.3" font-size="14.66" fill="#dcdcdc" text-anchor="end">-10</text>
<line x1="923.5" y1="485.0" x2="930.5" y2="485.0" stroke="#b0b0b0" stroke-width="1.3"/>
<text x="923.0" y="490.3" font-size="14.66" fill="#dcdcdc" text-anchor="end">-15</text>
<line x1="930.5" y1="485" x2="930.5" y2="491" stroke="#b0b0b0" stroke-width="1.3"/>
<line x1="1084.0" y1="485" x2="1084.0" y2="491" stroke="#b0b0b0" stroke-width="1.3"/>
<text x="993.4" y="143.0" font-size="15.64" fill="#dcdcdc" text-anchor="middle" textLength="52.0" lengthAdjust="spacingAndGlyphs">Delta H</text>
<text x="1007.0" y="502.0" font-size="14.66" fill="#dcdcdc" text-anchor="middle">100%</text>
<rect x="526.4" y="304.5" width="121.2" height="13.1" fill="url(#gybar)" stroke="#111" stroke-width="1.2"/>
<rect x="736" y="307.3" width="122.7" height="10.3" fill="url(#gybar)" stroke="#111" stroke-width="1.2"/>
<line x1="945.5" y1="317" x2="1069" y2="317" stroke="#111" stroke-width="1.5"/>
<rect x="475" y="520" width="630" height="173" fill="#000000" />
<rect x="497.3" y="528.3" width="106" height="140.7" fill="#c4c4a6" />
<rect x="497.3" y="528.3" width="106" height="140.7" fill="none" stroke="#ffffff" stroke-width="2"/>
<text x="550.3" y="685.0" font-size="12.15" fill="#f4f4f4" text-anchor="middle">20%</text>
<rect x="621" y="528.3" width="106" height="140.7" fill="#c4c389" />
<rect x="621" y="528.3" width="106" height="140.7" fill="none" stroke="#ffffff" stroke-width="2"/>
<text x="674.0" y="685.0" font-size="12.15" fill="#f4f4f4" text-anchor="middle">40%</text>
<rect x="743.3" y="528.3" width="106" height="140.7" fill="#c5c36d" />
<rect x="743.3" y="528.3" width="106" height="140.7" fill="none" stroke="#ffffff" stroke-width="2"/>
<text x="796.3" y="685.0" font-size="12.15" fill="#f4f4f4" text-anchor="middle">60%</text>
<rect x="866" y="528.3" width="106" height="140.7" fill="#c4c04a" />
<rect x="866" y="528.3" width="106" height="140.7" fill="none" stroke="#ffffff" stroke-width="2"/>
<text x="919.0" y="685.0" font-size="12.15" fill="#f4f4f4" text-anchor="middle">80%</text>
<rect x="990" y="528.3" width="106" height="140.7" fill="#c5c400" />
<rect x="990" y="528.3" width="106" height="140.7" fill="none" stroke="#ffffff" stroke-width="2"/>
<text x="1043.0" y="685.0" font-size="12.15" fill="#f4f4f4" text-anchor="middle">100%</text>
<text x="0.0" y="0.0" font-size="13.97" fill="#f4f4f4" text-anchor="middle" textLength="36.5" lengthAdjust="spacingAndGlyphs" transform="translate(490.5,558.3) rotate(-90)">Actual</text>
<text x="0.0" y="0.0" font-size="13.97" fill="#f4f4f4" text-anchor="middle" textLength="35.0" lengthAdjust="spacingAndGlyphs" transform="translate(490.5,637.5) rotate(-90)">Target</text>
<rect x="1112" y="114" width="740" height="594" fill="#c6c200" />
<rect x="1120" y="122" width="723" height="578" fill="#333333" />
<text x="1481.8" y="141.0" font-size="15.08" fill="#dcdcdc" text-anchor="middle" textLength="81.0" lengthAdjust="spacingAndGlyphs">CIE 1931 xy</text>
<rect x="1151" y="147" width="690" height="523" fill="#232323" />
<g clip-path="url(#locus)"><rect x="1152" y="148.00" width="600" height="5.70" fill="url(#c1)"/><rect x="1152" y="153.00" width="600" height="5.70" fill="url(#c2)"/><rect x="1152" y="158.00" width="600" height="5.70" fill="url(#c3)"/><rect x="1152" y="163.00" width="600" height="5.70" fill="url(#c4)"/><rect x="1152" y="168.00" width="600" height="5.70" fill="url(#c5)"/><rect x="1152" y="173.00" width="600" height="5.70" fill="url(#c6)"/><rect x="1152" y="178.00" width="600" height="5.70" fill="url(#c7)"/><rect x="1152" y="183.00" width="600" height="5.70" fill="url(#c8)"/><rect x="1152" y="188.00" width="600" height="5.70" fill="url(#c9)"/><rect x="1152" y="193.00" width="600" height="5.70" fill="url(#c10)"/><rect x="1152" y="198.00" width="600" height="5.70" fill="url(#c11)"/><rect x="1152" y="203.00" width="600" height="5.70" fill="url(#c12)"/><rect x="1152" y="208.00" width="600" height="5.70" fill="url(#c13)"/><rect x="1152" y="213.00" width="600" height="5.70" fill="url(#c14)"/><rect x="1152" y="218.00" width="600" height="5.70" fill="url(#c15)"/><rect x="1152" y="223.00" width="600" height="5.70" fill="url(#c16)"/><rect x="1152" y="228.00" width="600" height="5.70" fill="url(#c17)"/><rect x="1152" y="233.00" width="600" height="5.70" fill="url(#c18)"/><rect x="1152" y="238.00" width="600" height="5.70" fill="url(#c19)"/><rect x="1152" y="243.00" width="600" height="5.70" fill="url(#c20)"/><rect x="1152" y="248.00" width="600" height="5.70" fill="url(#c21)"/><rect x="1152" y="253.00" width="600" height="5.70" fill="url(#c22)"/><rect x="1152" y="258.00" width="600" height="5.70" fill="url(#c23)"/><rect x="1152" y="263.00" width="600" height="5.70" fill="url(#c24)"/><rect x="1152" y="268.00" width="600" height="5.70" fill="url(#c25)"/><rect x="1152" y="273.00" width="600" height="5.70" fill="url(#c26)"/><rect x="1152" y="278.00" width="600" height="5.70" fill="url(#c27)"/><rect x="1152" y="283.00" width="600" height="5.70" fill="url(#c28)"/><rect x="1152" y="288.00" width="600" height="5.70" fill="url(#c29)"/><rect x="1152" y="293.00" width="600" height="5.70" fill="url(#c30)"/><rect x="1152" y="298.00" width="600" height="5.70" fill="url(#c31)"/><rect x="1152" y="303.00" width="600" height="5.70" fill="url(#c32)"/><rect x="1152" y="308.00" width="600" height="5.70" fill="url(#c33)"/><rect x="1152" y="313.00" width="600" height="5.70" fill="url(#c34)"/><rect x="1152" y="318.00" width="600" height="5.70" fill="url(#c35)"/><rect x="1152" y="323.00" width="600" height="5.70" fill="url(#c36)"/><rect x="1152" y="328.00" width="600" height="5.70" fill="url(#c37)"/><rect x="1152" y="333.00" width="600" height="5.70" fill="url(#c38)"/><rect x="1152" y="338.00" width="600" height="5.70" fill="url(#c39)"/><rect x="1152" y="343.00" width="600" height="5.70" fill="url(#c40)"/><rect x="1152" y="348.00" width="600" height="5.70" fill="url(#c41)"/><rect x="1152" y="353.00" width="600" height="5.70" fill="url(#c42)"/><rect x="1152" y="358.00" width="600" height="5.70" fill="url(#c43)"/><rect x="1152" y="363.00" width="600" height="5.70" fill="url(#c44)"/><rect x="1152" y="368.00" width="600" height="5.70" fill="url(#c45)"/><rect x="1152" y="373.00" width="600" height="5.70" fill="url(#c46)"/><rect x="1152" y="378.00" width="600" height="5.70" fill="url(#c47)"/><rect x="1152" y="383.00" width="600" height="5.70" fill="url(#c48)"/><rect x="1152" y="388.00" width="600" height="5.70" fill="url(#c49)"/><rect x="1152" y="393.00" width="600" height="5.70" fill="url(#c50)"/><rect x="1152" y="398.00" width="600" height="5.70" fill="url(#c51)"/><rect x="1152" y="403.00" width="600" height="5.70" fill="url(#c52)"/><rect x="1152" y="408.00" width="600" height="5.70" fill="url(#c53)"/><rect x="1152" y="413.00" width="600" height="5.70" fill="url(#c54)"/><rect x="1152" y="418.00" width="600" height="5.70" fill="url(#c55)"/><rect x="1152" y="423.00" width="600" height="5.70" fill="url(#c56)"/><rect x="1152" y="428.00" width="600" height="5.70" fill="url(#c57)"/><rect x="1152" y="433.00" width="600" height="5.70" fill="url(#c58)"/><rect x="1152" y="438.00" width="600" height="5.70" fill="url(#c59)"/><rect x="1152" y="443.00" width="600" height="5.70" fill="url(#c60)"/><rect x="1152" y="448.00" width="600" height="5.70" fill="url(#c61)"/><rect x="1152" y="453.00" width="600" height="5.70" fill="url(#c62)"/><rect x="1152" y="458.00" width="600" height="5.70" fill="url(#c63)"/><rect x="1152" y="463.00" width="600" height="5.70" fill="url(#c64)"/><rect x="1152" y="468.00" width="600" height="5.70" fill="url(#c65)"/><rect x="1152" y="473.00" width="600" height="5.70" fill="url(#c66)"/><rect x="1152" y="478.00" width="600" height="5.70" fill="url(#c67)"/><rect x="1152" y="483.00" width="600" height="5.70" fill="url(#c68)"/><rect x="1152" y="488.00" width="600" height="5.70" fill="url(#c69)"/><rect x="1152" y="493.00" width="600" height="5.70" fill="url(#c70)"/><rect x="1152" y="498.00" width="600" height="5.70" fill="url(#c71)"/><rect x="1152" y="503.00" width="600" height="5.70" fill="url(#c72)"/><rect x="1152" y="508.00" width="600" height="5.70" fill="url(#c73)"/><rect x="1152" y="513.00" width="600" height="5.70" fill="url(#c74)"/><rect x="1152" y="518.00" width="600" height="5.70" fill="url(#c75)"/><rect x="1152" y="523.00" width="600" height="5.70" fill="url(#c76)"/><rect x="1152" y="528.00" width="600" height="5.70" fill="url(#c77)"/><rect x="1152" y="533.00" width="600" height="5.70" fill="url(#c78)"/><rect x="1152" y="538.00" width="600" height="5.70" fill="url(#c79)"/><rect x="1152" y="543.00" width="600" height="5.70" fill="url(#c80)"/><rect x="1152" y="548.00" width="600" height="5.70" fill="url(#c81)"/><rect x="1152" y="553.00" width="600" height="5.70" fill="url(#c82)"/><rect x="1152" y="558.00" width="600" height="5.70" fill="url(#c83)"/><rect x="1152" y="563.00" width="600" height="5.70" fill="url(#c84)"/><rect x="1152" y="568.00" width="600" height="5.70" fill="url(#c85)"/><rect x="1152" y="573.00" width="600" height="5.70" fill="url(#c86)"/><rect x="1152" y="578.00" width="600" height="5.70" fill="url(#c87)"/><rect x="1152" y="583.00" width="600" height="5.70" fill="url(#c88)"/><rect x="1152" y="588.00" width="600" height="5.70" fill="url(#c89)"/><rect x="1152" y="593.00" width="600" height="5.70" fill="url(#c90)"/><rect x="1152" y="598.00" width="600" height="5.70" fill="url(#c91)"/><rect x="1152" y="603.00" width="600" height="5.70" fill="url(#c92)"/><rect x="1152" y="608.00" width="600" height="5.70" fill="url(#c93)"/><rect x="1152" y="613.00" width="600" height="5.70" fill="url(#c94)"/><rect x="1152" y="618.00" width="600" height="5.70" fill="url(#c95)"/><rect x="1152" y="623.00" width="600" height="5.70" fill="url(#c96)"/><rect x="1152" y="628.00" width="600" height="5.70" fill="url(#c97)"/><rect x="1152" y="633.00" width="600" height="5.70" fill="url(#c98)"/><rect x="1152" y="638.00" width="600" height="5.70" fill="url(#c99)"/><rect x="1152" y="643.00" width="600" height="5.70" fill="url(#c100)"/><rect x="1152" y="648.00" width="600" height="5.70" fill="url(#c101)"/><rect x="1152" y="653.00" width="600" height="5.70" fill="url(#c102)"/><rect x="1152" y="658.00" width="600" height="5.70" fill="url(#c103)"/><rect x="1152" y="663.00" width="600" height="5.70" fill="url(#c104)"/></g>
<g clip-path="url(#tri)"><rect x="1272" y="294.56" width="408" height="4.70" fill="url(#c105)"/><rect x="1272" y="298.56" width="408" height="4.70" fill="url(#c106)"/><rect x="1272" y="302.56" width="408" height="4.70" fill="url(#c107)"/><rect x="1272" y="306.56" width="408" height="4.70" fill="url(#c108)"/><rect x="1272" y="310.56" width="408" height="4.70" fill="url(#c109)"/><rect x="1272" y="314.56" width="408" height="4.70" fill="url(#c110)"/><rect x="1272" y="318.56" width="408" height="4.70" fill="url(#c111)"/><rect x="1272" y="322.56" width="408" height="4.70" fill="url(#c112)"/><rect x="1272" y="326.56" width="408" height="4.70" fill="url(#c113)"/><rect x="1272" y="330.56" width="408" height="4.70" fill="url(#c114)"/><rect x="1272" y="334.56" width="408" height="4.70" fill="url(#c115)"/><rect x="1272" y="338.56" width="408" height="4.70" fill="url(#c116)"/><rect x="1272" y="342.56" width="408" height="4.70" fill="url(#c117)"/><rect x="1272" y="346.56" width="408" height="4.70" fill="url(#c118)"/><rect x="1272" y="350.56" width="408" height="4.70" fill="url(#c119)"/><rect x="1272" y="354.56" width="408" height="4.70" fill="url(#c120)"/><rect x="1272" y="358.56" width="408" height="4.70" fill="url(#c121)"/><rect x="1272" y="362.56" width="408" height="4.70" fill="url(#c122)"/><rect x="1272" y="366.56" width="408" height="4.70" fill="url(#c123)"/><rect x="1272" y="370.56" width="408" height="4.70" fill="url(#c124)"/><rect x="1272" y="374.56" width="408" height="4.70" fill="url(#c125)"/><rect x="1272" y="378.56" width="408" height="4.70" fill="url(#c126)"/><rect x="1272" y="382.56" width="408" height="4.70" fill="url(#c127)"/><rect x="1272" y="386.56" width="408" height="4.70" fill="url(#c128)"/><rect x="1272" y="390.56" width="408" height="4.70" fill="url(#c129)"/><rect x="1272" y="394.56" width="408" height="4.70" fill="url(#c130)"/><rect x="1272" y="398.56" width="408" height="4.70" fill="url(#c131)"/><rect x="1272" y="402.56" width="408" height="4.70" fill="url(#c132)"/><rect x="1272" y="406.56" width="408" height="4.70" fill="url(#c133)"/><rect x="1272" y="410.56" width="408" height="4.70" fill="url(#c134)"/><rect x="1272" y="414.56" width="408" height="4.70" fill="url(#c135)"/><rect x="1272" y="418.56" width="408" height="4.70" fill="url(#c136)"/><rect x="1272" y="422.56" width="408" height="4.70" fill="url(#c137)"/><rect x="1272" y="426.56" width="408" height="4.70" fill="url(#c138)"/><rect x="1272" y="430.56" width="408" height="4.70" fill="url(#c139)"/><rect x="1272" y="434.56" width="408" height="4.70" fill="url(#c140)"/><rect x="1272" y="438.56" width="408" height="4.70" fill="url(#c141)"/><rect x="1272" y="442.56" width="408" height="4.70" fill="url(#c142)"/><rect x="1272" y="446.56" width="408" height="4.70" fill="url(#c143)"/><rect x="1272" y="450.56" width="408" height="4.70" fill="url(#c144)"/><rect x="1272" y="454.56" width="408" height="4.70" fill="url(#c145)"/><rect x="1272" y="458.56" width="408" height="4.70" fill="url(#c146)"/><rect x="1272" y="462.56" width="408" height="4.70" fill="url(#c147)"/><rect x="1272" y="466.56" width="408" height="4.70" fill="url(#c148)"/><rect x="1272" y="470.56" width="408" height="4.70" fill="url(#c149)"/><rect x="1272" y="474.56" width="408" height="4.70" fill="url(#c150)"/><rect x="1272" y="478.56" width="408" height="4.70" fill="url(#c151)"/><rect x="1272" y="482.56" width="408" height="4.70" fill="url(#c152)"/><rect x="1272" y="486.56" width="408" height="4.70" fill="url(#c153)"/><rect x="1272" y="490.56" width="408" height="4.70" fill="url(#c154)"/><rect x="1272" y="494.56" width="408" height="4.70" fill="url(#c155)"/><rect x="1272" y="498.56" width="408" height="4.70" fill="url(#c156)"/><rect x="1272" y="502.56" width="408" height="4.70" fill="url(#c157)"/><rect x="1272" y="506.56" width="408" height="4.70" fill="url(#c158)"/><rect x="1272" y="510.56" width="408" height="4.70" fill="url(#c159)"/><rect x="1272" y="514.56" width="408" height="4.70" fill="url(#c160)"/><rect x="1272" y="518.56" width="408" height="4.70" fill="url(#c161)"/><rect x="1272" y="522.56" width="408" height="4.70" fill="url(#c162)"/><rect x="1272" y="526.56" width="408" height="4.70" fill="url(#c163)"/><rect x="1272" y="530.56" width="408" height="4.70" fill="url(#c164)"/><rect x="1272" y="534.56" width="408" height="4.70" fill="url(#c165)"/><rect x="1272" y="538.56" width="408" height="4.70" fill="url(#c166)"/><rect x="1272" y="542.56" width="408" height="4.70" fill="url(#c167)"/><rect x="1272" y="546.56" width="408" height="4.70" fill="url(#c168)"/><rect x="1272" y="550.56" width="408" height="4.70" fill="url(#c169)"/><rect x="1272" y="554.56" width="408" height="4.70" fill="url(#c170)"/><rect x="1272" y="558.56" width="408" height="4.70" fill="url(#c171)"/><rect x="1272" y="562.56" width="408" height="4.70" fill="url(#c172)"/><rect x="1272" y="566.56" width="408" height="4.70" fill="url(#c173)"/><rect x="1272" y="570.56" width="408" height="4.70" fill="url(#c174)"/><rect x="1272" y="574.56" width="408" height="4.70" fill="url(#c175)"/><rect x="1272" y="578.56" width="408" height="4.70" fill="url(#c176)"/><rect x="1272" y="582.56" width="408" height="4.70" fill="url(#c177)"/><rect x="1272" y="586.56" width="408" height="4.70" fill="url(#c178)"/><rect x="1272" y="590.56" width="408" height="4.70" fill="url(#c179)"/><rect x="1272" y="594.56" width="408" height="4.70" fill="url(#c180)"/><rect x="1272" y="598.56" width="408" height="4.70" fill="url(#c181)"/><rect x="1272" y="602.56" width="408" height="4.70" fill="url(#c182)"/><rect x="1272" y="606.56" width="408" height="4.70" fill="url(#c183)"/><rect x="1272" y="610.56" width="408" height="4.70" fill="url(#c184)"/><rect x="1272" y="614.56" width="408" height="4.70" fill="url(#c185)"/><rect x="1272" y="618.56" width="408" height="4.70" fill="url(#c186)"/><rect x="1272" y="622.56" width="408" height="4.70" fill="url(#c187)"/><rect x="1272" y="626.56" width="408" height="4.70" fill="url(#c188)"/><rect x="1272" y="630.56" width="408" height="4.70" fill="url(#c189)"/></g>
<rect x="1151" y="147" width="690" height="523" fill="none" stroke="#b0b0b0" stroke-width="1.5"/>
<line x1="1150.8" y1="670" x2="1150.8" y2="677" stroke="#b0b0b0" stroke-width="1.3"/>
<text x="1150.8" y="693.5" font-size="15.08" fill="#dcdcdc" text-anchor="middle">0</text>
<line x1="1144.5" y1="669.7" x2="1151" y2="669.7" stroke="#b0b0b0" stroke-width="1.3"/>
<text x="1144.0" y="675.1" font-size="15.08" fill="#dcdcdc" text-anchor="end">0</text>
<line x1="1232.9" y1="670" x2="1232.9" y2="677" stroke="#b0b0b0" stroke-width="1.3"/>
<text x="1232.9" y="693.5" font-size="15.08" fill="#dcdcdc" text-anchor="middle">0,1</text>
<line x1="1144.5" y1="607.5" x2="1151" y2="607.5" stroke="#b0b0b0" stroke-width="1.3"/>
<text x="1144.0" y="612.9" font-size="15.08" fill="#dcdcdc" text-anchor="end">0,1</text>
<line x1="1315.0" y1="670" x2="1315.0" y2="677" stroke="#b0b0b0" stroke-width="1.3"/>
<text x="1315.0" y="693.5" font-size="15.08" fill="#dcdcdc" text-anchor="middle">0,2</text>
<line x1="1144.5" y1="545.3" x2="1151" y2="545.3" stroke="#b0b0b0" stroke-width="1.3"/>
<text x="1144.0" y="550.7" font-size="15.08" fill="#dcdcdc" text-anchor="end">0,2</text>
<line x1="1397.1" y1="670" x2="1397.1" y2="677" stroke="#b0b0b0" stroke-width="1.3"/>
<text x="1397.1" y="693.5" font-size="15.08" fill="#dcdcdc" text-anchor="middle">0,3</text>
<line x1="1144.5" y1="483.1" x2="1151" y2="483.1" stroke="#b0b0b0" stroke-width="1.3"/>
<text x="1144.0" y="488.5" font-size="15.08" fill="#dcdcdc" text-anchor="end">0,3</text>
<line x1="1479.2" y1="670" x2="1479.2" y2="677" stroke="#b0b0b0" stroke-width="1.3"/>
<text x="1479.2" y="693.5" font-size="15.08" fill="#dcdcdc" text-anchor="middle">0,4</text>
<line x1="1144.5" y1="420.9" x2="1151" y2="420.9" stroke="#b0b0b0" stroke-width="1.3"/>
<text x="1144.0" y="426.3" font-size="15.08" fill="#dcdcdc" text-anchor="end">0,4</text>
<line x1="1561.3" y1="670" x2="1561.3" y2="677" stroke="#b0b0b0" stroke-width="1.3"/>
<text x="1561.3" y="693.5" font-size="15.08" fill="#dcdcdc" text-anchor="middle">0,5</text>
<line x1="1144.5" y1="358.8" x2="1151" y2="358.8" stroke="#b0b0b0" stroke-width="1.3"/>
<text x="1144.0" y="364.2" font-size="15.08" fill="#dcdcdc" text-anchor="end">0,5</text>
<line x1="1643.4" y1="670" x2="1643.4" y2="677" stroke="#b0b0b0" stroke-width="1.3"/>
<text x="1643.4" y="693.5" font-size="15.08" fill="#dcdcdc" text-anchor="middle">0,6</text>
<line x1="1144.5" y1="296.6" x2="1151" y2="296.6" stroke="#b0b0b0" stroke-width="1.3"/>
<text x="1144.0" y="302.0" font-size="15.08" fill="#dcdcdc" text-anchor="end">0,6</text>
<line x1="1725.5" y1="670" x2="1725.5" y2="677" stroke="#b0b0b0" stroke-width="1.3"/>
<text x="1725.5" y="693.5" font-size="15.08" fill="#dcdcdc" text-anchor="middle">0,7</text>
<line x1="1144.5" y1="234.4" x2="1151" y2="234.4" stroke="#b0b0b0" stroke-width="1.3"/>
<text x="1144.0" y="239.8" font-size="15.08" fill="#dcdcdc" text-anchor="end">0,7</text>
<line x1="1807.6" y1="670" x2="1807.6" y2="677" stroke="#b0b0b0" stroke-width="1.3"/>
<text x="1807.6" y="693.5" font-size="15.08" fill="#dcdcdc" text-anchor="middle">0,8</text>
<line x1="1144.5" y1="172.2" x2="1151" y2="172.2" stroke="#b0b0b0" stroke-width="1.3"/>
<text x="1144.0" y="177.6" font-size="15.08" fill="#dcdcdc" text-anchor="end">0,8</text>
<g clip-path="url(#inset)"><rect x="1601" y="154.50" width="234" height="5.70" fill="url(#c190)"/><rect x="1601" y="159.50" width="234" height="5.70" fill="url(#c191)"/><rect x="1601" y="164.50" width="234" height="5.70" fill="url(#c192)"/><rect x="1601" y="169.50" width="234" height="5.70" fill="url(#c193)"/><rect x="1601" y="174.50" width="234" height="5.70" fill="url(#c194)"/><rect x="1601" y="179.50" width="234" height="5.70" fill="url(#c195)"/><rect x="1601" y="184.50" width="234" height="5.70" fill="url(#c196)"/><rect x="1601" y="189.50" width="234" height="5.70" fill="url(#c197)"/><rect x="1601" y="194.50" width="234" height="5.70" fill="url(#c198)"/><rect x="1601" y="199.50" width="234" height="5.70" fill="url(#c199)"/><rect x="1601" y="204.50" width="234" height="5.70" fill="url(#c200)"/><rect x="1601" y="209.50" width="234" height="5.70" fill="url(#c201)"/><rect x="1601" y="214.50" width="234" height="5.70" fill="url(#c202)"/><rect x="1601" y="219.50" width="234" height="5.70" fill="url(#c203)"/><rect x="1601" y="224.50" width="234" height="5.70" fill="url(#c204)"/><rect x="1601" y="229.50" width="234" height="5.70" fill="url(#c205)"/><rect x="1601" y="234.50" width="234" height="5.70" fill="url(#c206)"/><rect x="1601" y="239.50" width="234" height="5.70" fill="url(#c207)"/><rect x="1601" y="244.50" width="234" height="5.70" fill="url(#c208)"/><rect x="1601" y="249.50" width="234" height="5.70" fill="url(#c209)"/><rect x="1601" y="254.50" width="234" height="5.70" fill="url(#c210)"/><rect x="1601" y="259.50" width="234" height="5.70" fill="url(#c211)"/><rect x="1601" y="264.50" width="234" height="5.70" fill="url(#c212)"/><rect x="1601" y="269.50" width="234" height="5.70" fill="url(#c213)"/><rect x="1601" y="274.50" width="234" height="5.70" fill="url(#c214)"/><rect x="1601" y="279.50" width="234" height="5.70" fill="url(#c215)"/><rect x="1601" y="284.50" width="234" height="5.70" fill="url(#c216)"/><rect x="1601" y="289.50" width="234" height="5.70" fill="url(#c217)"/><rect x="1601" y="294.50" width="234" height="5.70" fill="url(#c218)"/><rect x="1601" y="299.50" width="234" height="5.70" fill="url(#c219)"/><rect x="1601" y="304.50" width="234" height="5.70" fill="url(#c220)"/><rect x="1601" y="309.50" width="234" height="5.70" fill="url(#c221)"/><rect x="1601" y="314.50" width="234" height="5.70" fill="url(#c222)"/><rect x="1601" y="319.50" width="234" height="5.70" fill="url(#c223)"/><rect x="1601" y="324.50" width="234" height="5.70" fill="url(#c224)"/><rect x="1601" y="329.50" width="234" height="5.70" fill="url(#c225)"/><rect x="1601" y="334.50" width="234" height="5.70" fill="url(#c226)"/><rect x="1601" y="339.50" width="234" height="5.70" fill="url(#c227)"/><rect x="1601" y="344.50" width="234" height="5.70" fill="url(#c228)"/><rect x="1601" y="349.50" width="234" height="5.70" fill="url(#c229)"/></g>
<g clip-path="url(#insetbr)"><rect x="1601" y="154.50" width="234" height="5.70" fill="url(#c230)"/><rect x="1601" y="159.50" width="234" height="5.70" fill="url(#c231)"/><rect x="1601" y="164.50" width="234" height="5.70" fill="url(#c232)"/><rect x="1601" y="169.50" width="234" height="5.70" fill="url(#c233)"/><rect x="1601" y="174.50" width="234" height="5.70" fill="url(#c234)"/><rect x="1601" y="179.50" width="234" height="5.70" fill="url(#c235)"/><rect x="1601" y="184.50" width="234" height="5.70" fill="url(#c236)"/><rect x="1601" y="189.50" width="234" height="5.70" fill="url(#c237)"/><rect x="1601" y="194.50" width="234" height="5.70" fill="url(#c238)"/><rect x="1601" y="199.50" width="234" height="5.70" fill="url(#c239)"/><rect x="1601" y="204.50" width="234" height="5.70" fill="url(#c240)"/><rect x="1601" y="209.50" width="234" height="5.70" fill="url(#c241)"/><rect x="1601" y="214.50" width="234" height="5.70" fill="url(#c242)"/><rect x="1601" y="219.50" width="234" height="5.70" fill="url(#c243)"/><rect x="1601" y="224.50" width="234" height="5.70" fill="url(#c244)"/><rect x="1601" y="229.50" width="234" height="5.70" fill="url(#c245)"/><rect x="1601" y="234.50" width="234" height="5.70" fill="url(#c246)"/><rect x="1601" y="239.50" width="234" height="5.70" fill="url(#c247)"/><rect x="1601" y="244.50" width="234" height="5.70" fill="url(#c248)"/><rect x="1601" y="249.50" width="234" height="5.70" fill="url(#c249)"/><rect x="1601" y="254.50" width="234" height="5.70" fill="url(#c250)"/><rect x="1601" y="259.50" width="234" height="5.70" fill="url(#c251)"/><rect x="1601" y="264.50" width="234" height="5.70" fill="url(#c252)"/><rect x="1601" y="269.50" width="234" height="5.70" fill="url(#c253)"/><rect x="1601" y="274.50" width="234" height="5.70" fill="url(#c254)"/><rect x="1601" y="279.50" width="234" height="5.70" fill="url(#c255)"/><rect x="1601" y="284.50" width="234" height="5.70" fill="url(#c256)"/><rect x="1601" y="289.50" width="234" height="5.70" fill="url(#c257)"/><rect x="1601" y="294.50" width="234" height="5.70" fill="url(#c258)"/><rect x="1601" y="299.50" width="234" height="5.70" fill="url(#c259)"/><rect x="1601" y="304.50" width="234" height="5.70" fill="url(#c260)"/><rect x="1601" y="309.50" width="234" height="5.70" fill="url(#c261)"/><rect x="1601" y="314.50" width="234" height="5.70" fill="url(#c262)"/><rect x="1601" y="319.50" width="234" height="5.70" fill="url(#c263)"/><rect x="1601" y="324.50" width="234" height="5.70" fill="url(#c264)"/><rect x="1601" y="329.50" width="234" height="5.70" fill="url(#c265)"/><rect x="1601" y="334.50" width="234" height="5.70" fill="url(#c266)"/><rect x="1601" y="339.50" width="234" height="5.70" fill="url(#c267)"/><rect x="1601" y="344.50" width="234" height="5.70" fill="url(#c268)"/><rect x="1601" y="349.50" width="234" height="5.70" fill="url(#c269)"/></g>
<rect x="1601" y="154.5" width="233" height="196.0" fill="none" stroke="#a0a080" stroke-width="2"/>
<rect x="1397.4" y="422.9" width="14.2" height="14.2" fill="none" stroke="#ffffff" stroke-width="1.8" stroke-opacity="0.88"/>
<rect x="1396.3" y="389.7" width="14.2" height="14.2" fill="none" stroke="#ffffff" stroke-width="1.8" stroke-opacity="0.88"/>
<rect x="1393.4" y="358.5" width="14.2" height="14.2" fill="none" stroke="#ffffff" stroke-width="1.8" stroke-opacity="0.88"/>
<rect x="1392.1" y="324.9" width="14.2" height="14.2" fill="none" stroke="#ffffff" stroke-width="1.8" stroke-opacity="0.88"/>
<rect x="1388.6" y="288.7" width="14.2" height="14.2" fill="none" stroke="#ffffff" stroke-width="1.8" stroke-opacity="0.88"/>
<rect x="1417.9" y="434.6" width="14.2" height="14.2" fill="none" stroke="#ffffff" stroke-width="1.8" stroke-opacity="0.88"/>
<rect x="1435.4" y="411.9" width="14.2" height="14.2" fill="none" stroke="#ffffff" stroke-width="1.8" stroke-opacity="0.88"/>
<rect x="1452.9" y="390.3" width="14.2" height="14.2" fill="none" stroke="#ffffff" stroke-width="1.8" stroke-opacity="0.88"/>
<rect x="1468.9" y="370.7" width="14.2" height="14.2" fill="none" stroke="#ffffff" stroke-width="1.8" stroke-opacity="0.88"/>
<rect x="1487.7" y="347.6" width="14.2" height="14.2" fill="none" stroke="#ffffff" stroke-width="1.8" stroke-opacity="0.88"/>
<rect x="1452.6" y="456.5" width="14.2" height="14.2" fill="none" stroke="#ffffff" stroke-width="1.8" stroke-opacity="0.88"/>
<rect x="1507.6" y="456.5" width="14.2" height="14.2" fill="none" stroke="#ffffff" stroke-width="1.8" stroke-opacity="0.88"/>
<rect x="1556.9" y="456.5" width="14.2" height="14.2" fill="none" stroke="#ffffff" stroke-width="1.8" stroke-opacity="0.88"/>
<rect x="1608.5" y="456.5" width="14.2" height="14.2" fill="none" stroke="#ffffff" stroke-width="1.8" stroke-opacity="0.88"/>
<rect x="1668.2" y="456.5" width="14.2" height="14.2" fill="none" stroke="#ffffff" stroke-width="1.8" stroke-opacity="0.88"/>
<rect x="1386.3" y="458.2" width="14.2" height="14.2" fill="none" stroke="#ffffff" stroke-width="1.8" stroke-opacity="0.88"/>
<rect x="1372.2" y="458.2" width="14.2" height="14.2" fill="none" stroke="#ffffff" stroke-width="1.8" stroke-opacity="0.88"/>
<rect x="1356.9" y="458.2" width="14.2" height="14.2" fill="none" stroke="#ffffff" stroke-width="1.8" stroke-opacity="0.88"/>
<rect x="1341.9" y="458.2" width="14.2" height="14.2" fill="none" stroke="#ffffff" stroke-width="1.8" stroke-opacity="0.88"/>
<rect x="1327.7" y="458.2" width="14.2" height="14.2" fill="none" stroke="#ffffff" stroke-width="1.8" stroke-opacity="0.88"/>
<rect x="1373.2" y="491.5" width="14.2" height="14.2" fill="none" stroke="#ffffff" stroke-width="1.8" stroke-opacity="0.88"/>
<rect x="1346.5" y="524.9" width="14.2" height="14.2" fill="none" stroke="#ffffff" stroke-width="1.8" stroke-opacity="0.88"/>
<rect x="1320.7" y="556.1" width="14.2" height="14.2" fill="none" stroke="#ffffff" stroke-width="1.8" stroke-opacity="0.88"/>
<rect x="1294.9" y="587.9" width="14.2" height="14.2" fill="none" stroke="#ffffff" stroke-width="1.8" stroke-opacity="0.88"/>
<rect x="1265.7" y="624.4" width="14.2" height="14.2" fill="none" stroke="#ffffff" stroke-width="1.8" stroke-opacity="0.88"/>
<rect x="1401.9" y="479.4" width="14.2" height="14.2" fill="none" stroke="#ffffff" stroke-width="1.8" stroke-opacity="0.88"/>
<rect x="1403.1" y="502.6" width="14.2" height="14.2" fill="none" stroke="#ffffff" stroke-width="1.8" stroke-opacity="0.88"/>
<rect x="1403.5" y="521.8" width="14.2" height="14.2" fill="none" stroke="#ffffff" stroke-width="1.8" stroke-opacity="0.88"/>
<rect x="1404.5" y="543.6" width="14.2" height="14.2" fill="none" stroke="#ffffff" stroke-width="1.8" stroke-opacity="0.88"/>
<rect x="1406.1" y="566.2" width="14.2" height="14.2" fill="none" stroke="#ffffff" stroke-width="1.8" stroke-opacity="0.88"/>
<circle cx="1404.5" cy="430.0" r="4.9" fill="#a4b4a4" stroke="#141414" stroke-width="1.4"/>
<circle cx="1400.0" cy="395.5" r="4.9" fill="#8aac8a" stroke="#141414" stroke-width="1.4"/>
<circle cx="1397.8" cy="360.8" r="4.9" fill="#78a878" stroke="#141414" stroke-width="1.4"/>
<circle cx="1394.3" cy="326.2" r="4.9" fill="#60a060" stroke="#141414" stroke-width="1.4"/>
<circle cx="1390.0" cy="291.2" r="4.9" fill="#209a20" stroke="#141414" stroke-width="1.4"/>
<circle cx="1425.0" cy="441.7" r="4.9" fill="#b8b8a0" stroke="#141414" stroke-width="1.4"/>
<circle cx="1443.8" cy="418.6" r="4.9" fill="#b4b490" stroke="#141414" stroke-width="1.4"/>
<circle cx="1461.0" cy="395.5" r="4.9" fill="#b0b080" stroke="#141414" stroke-width="1.4"/>
<circle cx="1478.4" cy="374.9" r="4.9" fill="#aaa860" stroke="#141414" stroke-width="1.4"/>
<circle cx="1494.8" cy="353.7" r="4.9" fill="#a8a830" stroke="#141414" stroke-width="1.4"/>
<circle cx="1462.0" cy="463.6" r="4.9" fill="#b09090" stroke="#141414" stroke-width="1.4"/>
<circle cx="1520.5" cy="463.6" r="4.9" fill="#b08080" stroke="#141414" stroke-width="1.4"/>
<circle cx="1570.6" cy="462.0" r="4.9" fill="#b87070" stroke="#141414" stroke-width="1.4"/>
<circle cx="1624.5" cy="460.2" r="4.9" fill="#c05858" stroke="#141414" stroke-width="1.4"/>
<circle cx="1671.4" cy="460.2" r="4.9" fill="#c03030" stroke="#141414" stroke-width="1.4"/>
<circle cx="1391.4" cy="463.8" r="4.9" fill="#a0b0b0" stroke="#141414" stroke-width="1.4"/>
<circle cx="1377.3" cy="463.8" r="4.9" fill="#90acac" stroke="#141414" stroke-width="1.4"/>
<circle cx="1361.0" cy="465.3" r="4.9" fill="#80a8a8" stroke="#141414" stroke-width="1.4"/>
<circle cx="1345.0" cy="465.3" r="4.9" fill="#68a4a4" stroke="#141414" stroke-width="1.4"/>
<circle cx="1329.4" cy="465.3" r="4.9" fill="#20a0a0" stroke="#141414" stroke-width="1.4"/>
<circle cx="1380.0" cy="498.2" r="4.9" fill="#9898b0" stroke="#141414" stroke-width="1.4"/>
<circle cx="1352.4" cy="534.5" r="4.9" fill="#8888b0" stroke="#141414" stroke-width="1.4"/>
<circle cx="1324.7" cy="567.7" r="4.9" fill="#7878b0" stroke="#141414" stroke-width="1.4"/>
<circle cx="1297.5" cy="602.6" r="4.9" fill="#6060b0" stroke="#141414" stroke-width="1.4"/>
<circle cx="1268.6" cy="639.0" r="4.9" fill="#2828c0" stroke="#141414" stroke-width="1.4"/>
<circle cx="1410.2" cy="486.9" r="4.9" fill="#b0a0b0" stroke="#141414" stroke-width="1.4"/>
<circle cx="1411.6" cy="510.1" r="4.9" fill="#b090b0" stroke="#141414" stroke-width="1.4"/>
<circle cx="1414.6" cy="528.5" r="4.9" fill="#b080b0" stroke="#141414" stroke-width="1.4"/>
<circle cx="1416.0" cy="552.1" r="4.9" fill="#b070b0" stroke="#141414" stroke-width="1.4"/>
<circle cx="1419.3" cy="573.3" r="4.9" fill="#b050b0" stroke="#141414" stroke-width="1.4"/>
<rect x="1400.3" y="457.7" width="14.2" height="14.2" fill="none" stroke="#000000" stroke-width="1.8" stroke-opacity="0.88"/>
<circle cx="1407.4" cy="464.8" r="4.9" fill="#ffffff" stroke="#141414" stroke-width="1.4"/>
<rect x="1709.2" y="243.9" width="14.2" height="14.2" fill="none" stroke="#ffffff" stroke-width="1.8" stroke-opacity="0.88"/>
<circle cx="1720.4" cy="245.8" r="4.9" fill="#8a8a20" stroke="#141414" stroke-width="1.4"/>
<text x="92.3" y="770.7" font-size="31.01" fill="#f2f2f2" textLength="232.2" lengthAdjust="spacingAndGlyphs">Current Reading</text>
<text x="92.3" y="815.6" font-size="25.14" fill="#f2f2f2" textLength="77.7" lengthAdjust="spacingAndGlyphs">x: 0,42</text>
<text x="92.3" y="859.2" font-size="25.14" fill="#f2f2f2" textLength="108.8" lengthAdjust="spacingAndGlyphs">y: 0,5066</text>
<text x="92.3" y="902.6" font-size="25.14" fill="#f2f2f2" textLength="101.0" lengthAdjust="spacingAndGlyphs">fL: 72,05</text>
<text x="92.3" y="945.8" font-size="25.14" fill="#f2f2f2" textLength="168.1" lengthAdjust="spacingAndGlyphs">cd/m²: 246,85</text>
<rect x="456" y="749" width="266" height="192" fill="#232323" />
<text x="573.0" y="744.3" font-size="15.36" fill="#dcdcdc" text-anchor="middle" textLength="88.0" lengthAdjust="spacingAndGlyphs">RGB Balance</text>
<line x1="449" y1="769.3" x2="722" y2="769.3" stroke="#b0b0b0" stroke-width="1.3"/>
<text x="449.3" y="774.9" font-size="15.64" fill="#dcdcdc" text-anchor="end" textLength="25.7" lengthAdjust="spacingAndGlyphs">104</text>
<line x1="449" y1="808.6" x2="722" y2="808.6" stroke="#b0b0b0" stroke-width="1.3"/>
<text x="449.3" y="814.2" font-size="15.64" fill="#dcdcdc" text-anchor="end" textLength="25.7" lengthAdjust="spacingAndGlyphs">102</text>
<line x1="449" y1="846" x2="722" y2="846" stroke="#b0b0b0" stroke-width="1.3"/>
<text x="449.3" y="851.6" font-size="15.64" fill="#dcdcdc" text-anchor="end" textLength="25.7" lengthAdjust="spacingAndGlyphs">100</text>
<line x1="449" y1="885.7" x2="722" y2="885.7" stroke="#b0b0b0" stroke-width="1.3"/>
<text x="449.3" y="891.3" font-size="15.64" fill="#dcdcdc" text-anchor="end" textLength="25.7" lengthAdjust="spacingAndGlyphs">98</text>
<line x1="449" y1="923.1" x2="722" y2="923.1" stroke="#b0b0b0" stroke-width="1.3"/>
<text x="449.3" y="928.7" font-size="15.64" fill="#dcdcdc" text-anchor="end" textLength="25.7" lengthAdjust="spacingAndGlyphs">96</text>
<rect x="482.5" y="822.9" width="68.6" height="118.1" fill="url(#gr)" stroke="#000" stroke-width="1.2"/>
<rect x="553" y="821.4" width="69.4" height="119.6" fill="url(#gg)" stroke="#000" stroke-width="1.2"/>
<rect x="623.6" y="886.9" width="70.1" height="54.1" fill="url(#gb)" stroke="#000" stroke-width="1.2"/>
<rect x="456" y="749" width="266" height="192" fill="none" stroke="#b0b0b0" stroke-width="1.5"/>
<line x1="456" y1="941" x2="456" y2="947" stroke="#b0b0b0" stroke-width="1.3"/>
<line x1="722" y1="941" x2="722" y2="947" stroke="#b0b0b0" stroke-width="1.3"/>
<text x="589.0" y="959.0" font-size="15.36" fill="#dcdcdc" text-anchor="middle" textLength="37.0" lengthAdjust="spacingAndGlyphs">100%</text>
<rect x="744" y="723.3" width="775" height="216" fill="#000000" />
<rect x="745" y="724" width="773" height="33" fill="url(#ghead)" />
<rect x="745" y="757" width="773" height="30.200000000000045" fill="#3e3e3e" />
<rect x="745" y="787.2" width="773" height="30.299999999999955" fill="#8a8a8a" />
<rect x="745" y="817.5" width="773" height="30.100000000000023" fill="#3e3e3e" />
<rect x="745" y="847.6" width="773" height="30.0" fill="#8a8a8a" />
<rect x="745" y="877.6" width="773" height="30.399999999999977" fill="#3e3e3e" />
<rect x="745" y="908" width="773" height="30.5" fill="#8a8a8a" />
<text x="1008.3" y="748.0" font-size="17.88" fill="#ffffff" font-weight="bold" text-anchor="middle" textLength="43.0" lengthAdjust="spacingAndGlyphs">20%</text>
<text x="1121.8" y="748.0" font-size="17.88" fill="#ffffff" font-weight="bold" text-anchor="middle" textLength="43.0" lengthAdjust="spacingAndGlyphs">40%</text>
<text x="1235.0" y="748.0" font-size="17.88" fill="#ffffff" font-weight="bold" text-anchor="middle" textLength="43.0" lengthAdjust="spacingAndGlyphs">60%</text>
<text x="1348.2" y="748.0" font-size="17.88" fill="#ffffff" font-weight="bold" text-anchor="middle" textLength="43.0" lengthAdjust="spacingAndGlyphs">80%</text>
<text x="1461.3" y="748.0" font-size="17.88" fill="#ffffff" font-weight="bold" text-anchor="middle" textLength="54.0" lengthAdjust="spacingAndGlyphs">100%</text>
<text x="764.7" y="779.7" font-size="21.37" fill="#f4f4f4" font-weight="bold" textLength="91.7" lengthAdjust="spacingAndGlyphs">x: CIE31</text>
<text x="958.9" y="779.7" font-size="21.37" fill="#f4f4f4" textLength="72.0" lengthAdjust="spacingAndGlyphs">0,3350</text>
<text x="1072.0" y="779.7" font-size="21.37" fill="#f4f4f4" textLength="72.0" lengthAdjust="spacingAndGlyphs">0,3574</text>
<text x="1185.2" y="779.7" font-size="21.37" fill="#f4f4f4" textLength="72.0" lengthAdjust="spacingAndGlyphs">0,3794</text>
<text x="1298.4" y="779.7" font-size="21.37" fill="#f4f4f4" textLength="72.0" lengthAdjust="spacingAndGlyphs">0,3992</text>
<text x="1411.5" y="779.7" font-size="21.37" fill="#f4f4f4" textLength="72.0" lengthAdjust="spacingAndGlyphs">0,4200</text>
<text x="764.7" y="809.7" font-size="21.37" fill="#ececec" font-weight="bold" textLength="91.7" lengthAdjust="spacingAndGlyphs">y: CIE31</text>
<text x="958.9" y="809.7" font-size="21.37" fill="#ececec" textLength="72.0" lengthAdjust="spacingAndGlyphs">0,3654</text>
<text x="1072.0" y="809.7" font-size="21.37" fill="#ececec" textLength="72.0" lengthAdjust="spacingAndGlyphs">0,4027</text>
<text x="1185.2" y="809.7" font-size="21.37" fill="#ececec" textLength="72.0" lengthAdjust="spacingAndGlyphs">0,4392</text>
<text x="1298.4" y="809.7" font-size="21.37" fill="#ececec" textLength="72.0" lengthAdjust="spacingAndGlyphs">0,4721</text>
<text x="1411.5" y="809.7" font-size="21.37" fill="#ececec" textLength="72.0" lengthAdjust="spacingAndGlyphs">0,5066</text>
<text x="764.7" y="839.7" font-size="21.37" fill="#f4f4f4" font-weight="bold" textLength="14.3" lengthAdjust="spacingAndGlyphs">Y</text>
<text x="958.9" y="839.7" font-size="21.37" fill="#f4f4f4" textLength="99.0" lengthAdjust="spacingAndGlyphs">256,9448</text>
<text x="1072.0" y="839.7" font-size="21.37" fill="#f4f4f4" textLength="99.0" lengthAdjust="spacingAndGlyphs">253,3912</text>
<text x="1185.2" y="839.7" font-size="21.37" fill="#f4f4f4" textLength="99.0" lengthAdjust="spacingAndGlyphs">250,6495</text>
<text x="1298.4" y="839.7" font-size="21.37" fill="#f4f4f4" textLength="99.0" lengthAdjust="spacingAndGlyphs">248,5330</text>
<text x="1411.5" y="839.7" font-size="21.37" fill="#f4f4f4" textLength="99.0" lengthAdjust="spacingAndGlyphs">246,8462</text>
<text x="764.7" y="870.2" font-size="21.37" fill="#ececec" font-weight="bold" textLength="166.6" lengthAdjust="spacingAndGlyphs">Target x:CIE31</text>
<text x="958.9" y="870.2" font-size="21.37" fill="#ececec" textLength="72.0" lengthAdjust="spacingAndGlyphs">0,3344</text>
<text x="1072.0" y="870.2" font-size="21.37" fill="#ececec" textLength="72.0" lengthAdjust="spacingAndGlyphs">0,3564</text>
<text x="1185.2" y="870.2" font-size="21.37" fill="#ececec" textLength="72.0" lengthAdjust="spacingAndGlyphs">0,3773</text>
<text x="1298.4" y="870.2" font-size="21.37" fill="#ececec" textLength="72.0" lengthAdjust="spacingAndGlyphs">0,3969</text>
<text x="1411.5" y="870.2" font-size="21.37" fill="#ececec" textLength="72.0" lengthAdjust="spacingAndGlyphs">0,4193</text>
<text x="764.7" y="900.2" font-size="21.37" fill="#f4f4f4" font-weight="bold" textLength="166.6" lengthAdjust="spacingAndGlyphs">Target y:CIE31</text>
<text x="958.9" y="900.2" font-size="21.37" fill="#f4f4f4" textLength="72.0" lengthAdjust="spacingAndGlyphs">0,3648</text>
<text x="1072.0" y="900.2" font-size="21.37" fill="#f4f4f4" textLength="72.0" lengthAdjust="spacingAndGlyphs">0,4013</text>
<text x="1185.2" y="900.2" font-size="21.37" fill="#f4f4f4" textLength="72.0" lengthAdjust="spacingAndGlyphs">0,4358</text>
<text x="1298.4" y="900.2" font-size="21.37" fill="#f4f4f4" textLength="72.0" lengthAdjust="spacingAndGlyphs">0,4682</text>
<text x="1411.5" y="900.2" font-size="21.37" fill="#f4f4f4" textLength="72.0" lengthAdjust="spacingAndGlyphs">0,5053</text>
<text x="764.7" y="930.7" font-size="21.37" fill="#ececec" font-weight="bold" textLength="95.4" lengthAdjust="spacingAndGlyphs">Target Y</text>
<text x="958.9" y="930.7" font-size="21.37" fill="#ececec" textLength="99.0" lengthAdjust="spacingAndGlyphs">250,4033</text>
<text x="1072.0" y="930.7" font-size="21.37" fill="#ececec" textLength="99.0" lengthAdjust="spacingAndGlyphs">246,0080</text>
<text x="1185.2" y="930.7" font-size="21.37" fill="#ececec" textLength="99.0" lengthAdjust="spacingAndGlyphs">242,6309</text>
<text x="1298.4" y="930.7" font-size="21.37" fill="#ececec" textLength="99.0" lengthAdjust="spacingAndGlyphs">239,9805</text>
<text x="1411.5" y="930.7" font-size="21.37" fill="#ececec" textLength="99.0" lengthAdjust="spacingAndGlyphs">237,4181</text>
<rect x="1.5" y="969" width="50.5" height="68.5" rx="4" fill="url(#gbb)"/>
<circle cx="26.7" cy="979" r="8.3" fill="url(#gupc)"/>
<path d="M22 982 L26.7 976.5 L31.4 982 Z" fill="#1a1a1a"/>
<rect x="7.2" y="998.6" width="39" height="33.2" rx="3.5" fill="#ffff00" stroke="#9a9a20" stroke-width="1"/>
<rect x="59" y="969" width="168.5" height="68.5" rx="4" fill="url(#gbb)"/>
<rect x="65" y="975.2" width="156.5" height="40.3" rx="3.5" fill="#c3c3a4" stroke="#7a7a60" stroke-width="1.2"/>
<text x="143.2" y="1032.5" font-size="10.89" fill="#2a2a2a" font-weight="bold" text-anchor="middle">20%</text>
<rect x="230.5" y="969" width="169.5" height="68.5" rx="4" fill="url(#gbb)"/>
<rect x="236.5" y="975.2" width="157.5" height="40.3" rx="3.5" fill="#c4c388" stroke="#7a7a60" stroke-width="1.2"/>
<text x="315.2" y="1032.5" font-size="10.89" fill="#2a2a2a" font-weight="bold" text-anchor="middle">40%</text>
<rect x="402.5" y="969" width="169.0" height="68.5" rx="4" fill="url(#gbb)"/>
<rect x="408.5" y="975.2" width="157.0" height="40.3" rx="3.5" fill="#c5c36c" stroke="#7a7a60" stroke-width="1.2"/>
<text x="487.0" y="1032.5" font-size="10.89" fill="#2a2a2a" font-weight="bold" text-anchor="middle">60%</text>
<rect x="574" y="969" width="169.5" height="68.5" rx="4" fill="url(#gbb)"/>
<rect x="580" y="975.2" width="157.5" height="40.3" rx="3.5" fill="#c3bf49" stroke="#7a7a60" stroke-width="1.2"/>
<text x="658.8" y="1032.5" font-size="10.89" fill="#2a2a2a" font-weight="bold" text-anchor="middle">80%</text>
<rect x="915" y="969" width="648" height="70" fill="url(#gband)" />
<rect x="746" y="969" width="169" height="68.5" rx="4" fill="url(#gsel)"/>
<rect x="751" y="974.2" width="159" height="41.8" rx="4" fill="#c5c400" stroke="#1a1a00" stroke-width="1.5"/>
<text x="830.5" y="1032.8" font-size="10.89" fill="#ffffff" font-weight="bold" text-anchor="middle">100%</text>
<rect x="1563" y="969" width="357" height="70" fill="#2a2a2a" />
<rect x="1563.4" y="969" width="53.8" height="68" rx="4" fill="url(#gtb)"/>
<line x1="1564" y1="990.5" x2="1617" y2="990.5" stroke="#5a5a5a" stroke-width="1.5"/>
<circle cx="1590" cy="979.3" r="7.5" fill="url(#gupc)"/>
<path d="M1585.5 982.5 L1590 977 L1594.5 982.5 Z" fill="#1a1a1a"/>
<rect x="1574" y="998" width="32" height="32" rx="4" fill="#a8a8a8" stroke="#1a1a1a" stroke-width="3"/>
<rect x="1582.5" y="1006.5" width="16" height="15" fill="#050505"/>
<rect x="1619.2" y="969" width="50.4" height="33.5" fill="url(#gtb)"/>
<circle cx="1644.9" cy="985.7" r="11" fill="url(#gupc)" opacity="0.8"/>
<rect x="1670.6" y="969" width="50.1" height="33.5" fill="url(#gtb)"/>
<circle cx="1696.2" cy="985.7" r="11" fill="url(#gupc)" opacity="0.8"/>
<rect x="1721.7" y="969" width="49.9" height="33.5" fill="url(#gtb)"/>
<circle cx="1747.2" cy="985.7" r="11" fill="url(#gupc)" opacity="0.8"/>
<rect x="1772.6" y="969" width="49.8" height="33.5" fill="url(#gtb)"/>
<circle cx="1798.0" cy="985.7" r="11" fill="url(#gupc)" opacity="0.8"/>
<rect x="1823.4" y="969" width="49.6" height="33.5" fill="url(#gtb)"/>
<circle cx="1848.7" cy="985.7" r="11" fill="url(#gupc)" opacity="0.8"/>
<rect x="1640.4" y="981.2" width="9" height="9" fill="#222"/>
<path d="M1692.7 980 L1701.2 985.7 L1692.7 991.4 Z" fill="#222"/>
<path d="M1742.2 980 h-2 v11.5 h2 M1752.2 980 h2 v11.5 h-2" fill="none" stroke="#222" stroke-width="2"/>
<circle cx="1745.4" cy="985.7" r="0.9" fill="#222"/><circle cx="1749.0" cy="985.7" r="0.9" fill="#222"/>
<path d="M1798.0 985.7 c-2 -3 -6.5 -3 -6.5 0 c0 3 4.5 3 6.5 0 c2 -3 6.5 -3 6.5 0 c0 3 -4.5 3 -6.5 0" fill="none" stroke="#222" stroke-width="2"/>
<path d="M1843.7 984 a5 5 0 0 1 9 -2 M1853.7 987.5 a5 5 0 0 1 -9 2" fill="none" stroke="#222" stroke-width="2"/>
<path d="M1854.2 978.5 v5 h-5 Z M1843.2 993 v-5 h5 Z" fill="#222"/>
<circle cx="1900.2" cy="985.7" r="11" fill="#222"/>
<rect x="1619.2" y="1004" width="310" height="33" rx="3" fill="url(#gnav)"/>
<line x1="1772.6" y1="1004" x2="1772.6" y2="1037" stroke="#3a3a3a" stroke-width="1.2"/>
<circle cx="1653.8" cy="1020.3" r="10.5" fill="url(#gupc)" opacity="0.8"/>
<circle cx="1894.3" cy="1020.3" r="10.5" fill="url(#gupc)" opacity="0.8"/>
<path d="M1653.5 1015.3 L1649.3 1020.8 L1653.5 1026.3 M1658.3 1015.3 L1654.1 1020.8 L1658.3 1026.3" fill="none" stroke="#2e2e2e" stroke-width="1.9"/>
<path d="M1890.3 1015.3 L1894.5 1020.8 L1890.3 1026.3 M1895.1 1015.3 L1899.3 1020.8 L1895.1 1026.3" fill="none" stroke="#2e2e2e" stroke-width="1.9"/>
<text x="1684.0" y="1029.8" font-size="24.30" fill="#333333" textLength="57.0" lengthAdjust="spacingAndGlyphs" stroke="#333333" stroke-width="0.9">Back</text>
<text x="1804.8" y="1029.8" font-size="24.30" fill="#333333" textLength="58.2" lengthAdjust="spacingAndGlyphs" stroke="#333333" stroke-width="0.9">Next</text>
</svg>
</body></html>
